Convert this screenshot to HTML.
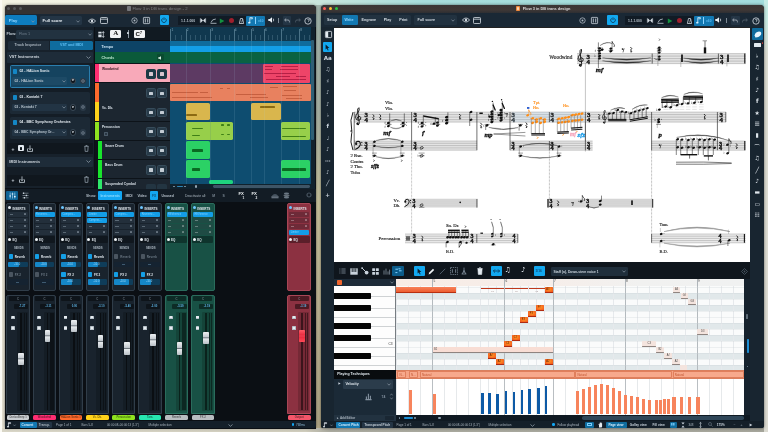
<!DOCTYPE html>
<html lang="en"><head><meta charset="utf-8"><title>Dorico - Play and Write windows</title>
<style>
html,body{margin:0;padding:0}
body{width:768px;height:432px;overflow:hidden;position:relative;font-family:"Liberation Sans",sans-serif;
background:#e9e6d8}
div{position:absolute;box-sizing:border-box}
.t{white-space:nowrap;line-height:1;font-weight:bold}
.s{white-space:nowrap;line-height:1;font-family:"Liberation Serif",serif}
svg{position:absolute;overflow:visible}
</style></head><body><div id="root" style="left:0;top:0;width:768px;height:432px;will-change:transform;opacity:.999;filter:blur(.45px)">
<div style="left:-8px;top:-8px;width:784px;height:448px;background:linear-gradient(90deg,#f4f3e4 0%,#f4f3e4 1%,#eef2e2 25%,#c9e6dc 42%,#a7dedc 55%,#a3dddd 99%,#a3dddd 100%);"></div>
<div style="left:-8px;top:12px;width:784px;height:428px;background:linear-gradient(180deg,rgba(233,230,216,0) 0%,#e6e3d4 8%,#e3dfd0 100%);"></div>
<div style="left:315px;top:5px;width:7px;height:427px;background:linear-gradient(180deg,#a2b6ad 0%,#a9b3a6 25%,#c8c29c 47%,#bdb494 70%,#b0a686 100%);"></div>
<div style="left:-8px;top:428.2px;width:784px;height:12px;background:linear-gradient(90deg,#d9d6c7 0%,#cfccbc 40%,#a9a99e 43%,#a5a59b 100%);"></div>
<div style="left:764px;top:-8px;width:12px;height:448px;background:linear-gradient(180deg,#c2ebe6 0%,#c8ebe4 6%,#dcdcd2 14%,#dcdbd2 100%);"></div>
<div style="left:-8px;top:-8px;width:10px;height:448px;background:#fbfaf4;"></div>
<div style="left:4.5px;top:4.7px;width:311px;height:423.5px;background:#0c1117;border-radius:4px 4px 2px 2px;box-shadow:0 0 3px rgba(0,0,0,.55);overflow:hidden"></div>
<div style="left:4.5px;top:4.7px;width:311px;height:9.1px;background:#343233;border-radius:4px 4px 0 0"></div>
<div style="left:6.8px;top:7.2px;width:3.2px;height:3.2px;background:#56575b;border-radius:50%"></div>
<div style="left:13px;top:7.2px;width:3.2px;height:3.2px;background:#56575b;border-radius:50%"></div>
<div style="left:18.8px;top:7.2px;width:3.2px;height:3.2px;background:#56575b;border-radius:50%"></div>
<div style="left:126.6px;top:6.4px;width:4.2px;height:4.6px;background:#77787c;border-radius:.8px"></div>
<div class="t" style="left:132.4px;top:6.6px;font-size:4.3px;color:#7d7e82;font-weight:normal">Flow 3 in DB trans design - 2</div>
<div style="left:4.5px;top:13.8px;width:311px;height:13.4px;background:#1a2835;"></div>
<div style="left:5.4px;top:15.4px;width:32px;height:9.8px;background:#0d7dc0;border-radius:1.5px"></div>
<div class="t" style="left:8.8px;top:19.2px;font-size:4.2px;color:#8fd4ff;">Play</div>
<svg style="left:31px;top:19.5px" width="4" height="3" viewBox="0 0 4 3"><path d="M.5 .6 L2 2.2 L3.5 .6" fill="none" stroke="#8d9aa6" stroke-width=".7"/></svg>
<div style="left:40px;top:16px;width:41.8px;height:9.2px;background:#243545;border-radius:1.5px"></div>
<div class="t" style="left:42.6px;top:19.2px;font-size:4.2px;color:#e6edf3;">Full score</div>
<svg style="left:76px;top:19.5px" width="4" height="3" viewBox="0 0 4 3"><path d="M.5 .6 L2 2.2 L3.5 .6" fill="none" stroke="#8d9aa6" stroke-width=".7"/></svg>
<svg style="left:87.5px;top:17.5px" width="8" height="6" viewBox="0 0 8 6"><path d="M.4 3 Q4 -1 7.6 3 Q4 7 .4 3Z" fill="none" stroke="#d5dde4" stroke-width=".8"/><circle cx="4" cy="3" r="1.2" fill="#d5dde4"/></svg>
<svg style="left:99.5px;top:17.3px" width="8" height="7" viewBox="0 0 8 7"><rect x=".5" y=".5" width="7" height="6" rx=".8" fill="none" stroke="#d5dde4" stroke-width=".8"/><path d="M.5 2.2H7.5" stroke="#d5dde4" stroke-width=".8"/></svg>
<svg style="left:130.5px;top:17px" width="7" height="7" viewBox="0 0 7 7"><circle cx="3.5" cy="3.5" r="2.7" fill="none" stroke="#aeb8c1" stroke-width=".8"/><circle cx="3.5" cy="3.5" r="1" fill="#aeb8c1"/></svg>
<svg style="left:142.5px;top:17px" width="7" height="7" viewBox="0 0 7 7"><rect x=".4" y=".4" width="6.2" height="6.2" rx=".6" fill="none" stroke="#c5ced6" stroke-width=".8"/><path d="M2.3 1.5V5.5M4.7 1.5V5.5" stroke="#c5ced6" stroke-width=".9"/></svg>
<div style="left:159.7px;top:15.2px;width:9.4px;height:10.2px;background:#12a8f0;border-radius:1px"></div>
<svg style="left:161.4px;top:17.2px" width="6" height="6" viewBox="0 0 6 6"><path d="M1.6 1.4 A2.3 2.3 0 1 0 4.4 1.4" fill="none" stroke="#0a3550" stroke-width=".8"/><path d="M3 .4V3" stroke="#0a3550" stroke-width=".8"/></svg>
<div style="left:178px;top:16px;width:68px;height:9.2px;background:#111b25;"></div>
<div class="t" style="left:181px;top:19.6px;font-size:3.4px;color:#b9c3cc;">1.1.1.000</div>
<svg style="left:199.5px;top:17.8px" width="6" height="5" viewBox="0 0 6 5"><path d="M.4 .3V4.7M5.6 .3V4.7" stroke="#d5dde4" stroke-width=".8"/><path d="M1 .6L3 2.5L1 4.4ZM5 .6L3 2.5L5 4.4Z" fill="#d5dde4"/></svg>
<svg style="left:209.5px;top:17.6px" width="7" height="6" viewBox="0 0 7 6"><path d="M.5 5.3H6.5M1 4.5 Q2 1 5.8 1" fill="none" stroke="#aeb8c1" stroke-width=".9"/></svg>
<svg style="left:218.5px;top:17.5px" width="6" height="6" viewBox="0 0 6 6"><path d="M.8 .4L5.4 3L.8 5.6Z" fill="#13913f"/></svg>
<div style="left:228.6px;top:17.6px;width:5.6px;height:5.6px;background:#9f1f2c;border-radius:50%"></div>
<svg style="left:238.5px;top:17.6px" width="5" height="6" viewBox="0 0 5 6"><path d="M1.5 .5H3.5L4.6 5.5H.4Z" fill="none" stroke="#d5dde4" stroke-width=".8"/><path d="M2.5 4.5L3.8 1.2" stroke="#d5dde4" stroke-width=".6"/></svg>
<div style="left:246px;top:15.6px;width:19.4px;height:10px;background:#1278b2;border-radius:1px"></div>
<svg style="left:248px;top:17px" width="5" height="7" viewBox="0 0 5 7"><path d="M1.8 5.6V.6H4.4V1.8H2.4" fill="none" stroke="#d9f0ff" stroke-width=".8"/><ellipse cx="1.3" cy="5.7" rx="1.2" ry=".9" fill="#d9f0ff"/></svg>
<div style="left:255.2px;top:17px;width:0.8px;height:7px;background:#8fd4ff;"></div>
<div class="t" style="left:258px;top:20px;font-size:3.2px;color:#58b6ee;">=60</div>
<svg style="left:267.5px;top:17.4px" width="8" height="6" viewBox="0 0 8 6"><path d="M.3 2H1.8L4 .3V5.7L1.8 4H.3Z" fill="#e8eef3"/><path d="M5.2 1.6Q6.3 3 5.2 4.4" fill="none" stroke="#e8eef3" stroke-width=".7"/></svg>
<div style="left:277.6px;top:17.6px;width:0.8px;height:5.6px;background:#7e8a95;"></div>
<div style="left:282.5px;top:16.4px;width:8.4px;height:8.4px;background:#243545;border-radius:1px"></div>
<svg style="left:284px;top:18.2px" width="6" height="5" viewBox="0 0 6 5"><path d="M2.2 .5L.6 2L2.2 3.5M.8 2H4Q5.4 2 5.4 3.4V4.4" fill="none" stroke="#aeb8c1" stroke-width=".8"/></svg>
<svg style="left:295px;top:18.2px" width="6" height="5" viewBox="0 0 6 5"><path d="M3.8 .5L5.4 2L3.8 3.5M5.2 2H2Q.6 2 .6 3.4V4.4" fill="none" stroke="#55626e" stroke-width=".8"/></svg>
<svg style="left:304.3px;top:16.8px" width="8" height="8" viewBox="0 0 8 8"><circle cx="4" cy="4" r="3.2" fill="none" stroke="#d5dde4" stroke-width=".8"/></svg>
<div class="t" style="left:307.2px;top:19.2px;font-size:4.4px;color:#d5dde4;">?</div>
<div style="left:4.5px;top:27.2px;width:90px;height:13.2px;background:#17212b;"></div>
<div class="t" style="left:6.5px;top:33px;font-size:3.8px;color:#c2ccd5;">Flow:</div>
<div style="left:16.2px;top:29.7px;width:76.8px;height:9px;background:#223240;border-radius:1.5px"></div>
<div class="t" style="left:19px;top:33px;font-size:3.8px;color:#6d7c8a;font-weight:normal">Flow 1</div>
<svg style="left:87.5px;top:33px" width="4" height="3" viewBox="0 0 4 3"><path d="M.5 .6 L2 2.2 L3.5 .6" fill="none" stroke="#8d9aa6" stroke-width=".7"/></svg>
<div style="left:94.5px;top:27.2px;width:75.5px;height:13.2px;background:#111a22;"></div>
<svg style="left:98px;top:30.6px" width="7" height="7" viewBox="0 0 7 7"><path d="M.3 .8H3.6V2.6H.3ZM.3 3.6H3.6V6.2H.3Z" fill="#d5dde4"/><path d="M5.3 .5V6.5M4.3 2L5.3 .6L6.3 2M4.3 5L5.3 6.4L6.3 5" fill="none" stroke="#d5dde4" stroke-width=".7"/></svg>
<div style="left:110px;top:29.5px;width:11.3px;height:8.6px;background:#f1f3f5;border-radius:1.2px"></div>
<div class="s" style="left:113.3px;top:30.3px;font-size:7px;font-weight:bold;color:#111">A</div>
<div style="left:127.6px;top:30px;width:1px;height:7.6px;background:#8d99a4;"></div>
<div style="left:126.8px;top:32px;width:2.6px;height:2.4px;background:#c7d0d8;border-radius:.6px"></div>
<div style="left:134px;top:29.5px;width:11.3px;height:8.6px;background:#f1f3f5;border-radius:1.2px"></div>
<div class="t" style="left:135.6px;top:30.8px;font-size:6.2px;color:#111">C<span style="font-size:3.6px;vertical-align:2px">7</span></div>
<div style="left:170px;top:27.2px;width:140.5px;height:13.4px;background:#10384f;"></div>
<div style="left:170.3px;top:28.5px;width:0.6px;height:12px;background:#4a7287;"></div>
<div class="t" style="left:171.5px;top:29.4px;font-size:3.2px;color:#86a7b8;font-weight:normal">1</div>
<div style="left:185.6px;top:28.5px;width:0.6px;height:12px;background:#4a7287;"></div>
<div class="t" style="left:186.8px;top:29.4px;font-size:3.2px;color:#86a7b8;font-weight:normal">2</div>
<div style="left:210px;top:28.5px;width:0.6px;height:12px;background:#4a7287;"></div>
<div class="t" style="left:211.2px;top:29.4px;font-size:3.2px;color:#86a7b8;font-weight:normal">3</div>
<div style="left:233.5px;top:28.5px;width:0.6px;height:12px;background:#4a7287;"></div>
<div class="t" style="left:234.7px;top:29.4px;font-size:3.2px;color:#86a7b8;font-weight:normal">4</div>
<div style="left:251px;top:28.5px;width:0.6px;height:12px;background:#4a7287;"></div>
<div class="t" style="left:252.2px;top:29.4px;font-size:3.2px;color:#86a7b8;font-weight:normal">5</div>
<div style="left:263.8px;top:28.5px;width:0.6px;height:12px;background:#4a7287;"></div>
<div class="t" style="left:265px;top:29.4px;font-size:3.2px;color:#86a7b8;font-weight:normal">6</div>
<div style="left:281px;top:28.5px;width:0.6px;height:12px;background:#4a7287;"></div>
<div class="t" style="left:282.2px;top:29.4px;font-size:3.2px;color:#86a7b8;font-weight:normal">7</div>
<div style="left:299px;top:28.5px;width:0.6px;height:12px;background:#4a7287;"></div>
<div class="t" style="left:300.2px;top:29.4px;font-size:3.2px;color:#86a7b8;font-weight:normal">8</div>
<div style="left:175.4px;top:34.5px;width:0.5px;height:5.5px;background:#2f566c;"></div>
<div style="left:180.5px;top:34.5px;width:0.5px;height:5.5px;background:#2f566c;"></div>
<div style="left:190.48px;top:34.5px;width:0.5px;height:5.5px;background:#2f566c;"></div>
<div style="left:195.36px;top:34.5px;width:0.5px;height:5.5px;background:#2f566c;"></div>
<div style="left:200.24px;top:34.5px;width:0.5px;height:5.5px;background:#2f566c;"></div>
<div style="left:205.12px;top:34.5px;width:0.5px;height:5.5px;background:#2f566c;"></div>
<div style="left:214.7px;top:34.5px;width:0.5px;height:5.5px;background:#2f566c;"></div>
<div style="left:219.4px;top:34.5px;width:0.5px;height:5.5px;background:#2f566c;"></div>
<div style="left:224.1px;top:34.5px;width:0.5px;height:5.5px;background:#2f566c;"></div>
<div style="left:228.8px;top:34.5px;width:0.5px;height:5.5px;background:#2f566c;"></div>
<div style="left:237.875px;top:34.5px;width:0.5px;height:5.5px;background:#2f566c;"></div>
<div style="left:242.25px;top:34.5px;width:0.5px;height:5.5px;background:#2f566c;"></div>
<div style="left:246.625px;top:34.5px;width:0.5px;height:5.5px;background:#2f566c;"></div>
<div style="left:255.267px;top:34.5px;width:0.5px;height:5.5px;background:#2f566c;"></div>
<div style="left:259.533px;top:34.5px;width:0.5px;height:5.5px;background:#2f566c;"></div>
<div style="left:268.1px;top:34.5px;width:0.5px;height:5.5px;background:#2f566c;"></div>
<div style="left:272.4px;top:34.5px;width:0.5px;height:5.5px;background:#2f566c;"></div>
<div style="left:276.7px;top:34.5px;width:0.5px;height:5.5px;background:#2f566c;"></div>
<div style="left:285.5px;top:34.5px;width:0.5px;height:5.5px;background:#2f566c;"></div>
<div style="left:290px;top:34.5px;width:0.5px;height:5.5px;background:#2f566c;"></div>
<div style="left:294.5px;top:34.5px;width:0.5px;height:5.5px;background:#2f566c;"></div>
<div style="left:304.1px;top:34.5px;width:0.5px;height:5.5px;background:#2f566c;"></div>
<div style="left:309.2px;top:34.5px;width:0.5px;height:5.5px;background:#2f566c;"></div>
<div style="left:4.5px;top:40.4px;width:89px;height:148px;background:#17212b;"></div>
<div style="left:93.5px;top:27.2px;width:1.6px;height:161.5px;background:#0b1016;"></div>
<div style="left:7.6px;top:41px;width:41.2px;height:9px;background:#1f2d3a;border-radius:1.5px 0 0 1.5px"></div>
<div class="t" style="left:14.6px;top:44.4px;font-size:3.6px;color:#aab5bf;">Track Inspector</div>
<div style="left:49.6px;top:41px;width:43.6px;height:9px;background:#0f6c9e;border-radius:0 1.5px 1.5px 0"></div>
<div class="t" style="left:60px;top:44.4px;font-size:3.6px;color:#5fc0f5;">VST and MIDI</div>
<div style="left:7px;top:51.8px;width:86.4px;height:10.8px;background:#1e2c39;border-radius:1px"></div>
<div class="t" style="left:9.2px;top:56px;font-size:3.8px;color:#d2dae1;">VST Instruments</div>
<svg style="left:85.6px;top:55.6px" width="5" height="3" viewBox="0 0 5 3"><path d="M.5 .5 L2.5 2.4 L4.5 .5" fill="none" stroke="#8d9aa6" stroke-width=".8"/></svg>
<div style="left:7px;top:62.6px;width:86.4px;height:80px;background:#141d26;"></div>
<div style="left:9.6px;top:65.4px;width:80.6px;height:22.4px;background:#15435f;border:.8px solid #2a7eae;border-radius:1.5px"></div>
<div style="left:12.8px;top:68.8px;width:4.2px;height:4.8px;background:#1487c6;border-radius:.8px"></div>
<div class="t" style="left:19.4px;top:69.8px;font-size:3.5px;color:#e3eaf0;">02 - HALion Sonic</div>
<div style="left:12px;top:77.4px;width:54.8px;height:7.4px;background:#1d4a66;border-radius:1.2px"></div>
<div class="t" style="left:14.4px;top:79.6px;font-size:3.4px;color:#b9c5cf;">02 - HALion Sonic</div>
<svg style="left:61.5px;top:79.80000000000001px" width="4" height="3" viewBox="0 0 4 3"><path d="M.5 .5 L2 2.1 L3.5 .5" fill="none" stroke="#8d9aa6" stroke-width=".7"/></svg>
<div style="left:69.8px;top:77.8px;width:6.4px;height:6.4px;background:#0e151c;border-radius:50%;border:.6px solid #3b4a58"></div>
<div class="t" style="left:71.9px;top:79.2px;font-size:3.8px;color:#e3eaf0;">e</div>
<div style="left:79.8px;top:77.8px;width:6.4px;height:6.4px;background:#2a3947;border-radius:50%"></div>
<svg style="left:81px;top:79.0px" width="4" height="4" viewBox="0 0 4 4"><circle cx="2" cy="2" r="1.3" fill="none" stroke="#8492a0" stroke-width=".7"/></svg>
<div style="left:9.6px;top:91.8px;width:80.6px;height:22.4px;background:#1c2935;border-radius:1.5px"></div>
<div style="left:12.8px;top:95.2px;width:4.2px;height:4.8px;background:#1487c6;border-radius:.8px"></div>
<div class="t" style="left:19.4px;top:96.2px;font-size:3.5px;color:#e3eaf0;">03 - Kontakt 7</div>
<div style="left:12px;top:103.8px;width:54.8px;height:7.4px;background:#223444;border-radius:1.2px"></div>
<div class="t" style="left:14.4px;top:106px;font-size:3.4px;color:#b9c5cf;">03 - Kontakt 7</div>
<svg style="left:61.5px;top:106.2px" width="4" height="3" viewBox="0 0 4 3"><path d="M.5 .5 L2 2.1 L3.5 .5" fill="none" stroke="#8d9aa6" stroke-width=".7"/></svg>
<div style="left:69.8px;top:104.2px;width:6.4px;height:6.4px;background:#0e151c;border-radius:50%;border:.6px solid #3b4a58"></div>
<div class="t" style="left:71.9px;top:105.6px;font-size:3.8px;color:#e3eaf0;">e</div>
<div style="left:79.8px;top:104.2px;width:6.4px;height:6.4px;background:#2a3947;border-radius:50%"></div>
<svg style="left:81px;top:105.39999999999999px" width="4" height="4" viewBox="0 0 4 4"><circle cx="2" cy="2" r="1.3" fill="none" stroke="#8492a0" stroke-width=".7"/></svg>
<div style="left:9.6px;top:117px;width:80.6px;height:22.4px;background:#1c2935;border-radius:1.5px"></div>
<div style="left:12.8px;top:120.4px;width:4.2px;height:4.8px;background:#1487c6;border-radius:.8px"></div>
<div class="t" style="left:19.4px;top:121.4px;font-size:3.5px;color:#e3eaf0;">04 - BBC Symphony Orchestra</div>
<div style="left:12px;top:129px;width:54.8px;height:7.4px;background:#223444;border-radius:1.2px"></div>
<div class="t" style="left:14.4px;top:131.2px;font-size:3.4px;color:#b9c5cf;">04 - BBC Symphony Or...</div>
<svg style="left:61.5px;top:131.4px" width="4" height="3" viewBox="0 0 4 3"><path d="M.5 .5 L2 2.1 L3.5 .5" fill="none" stroke="#8d9aa6" stroke-width=".7"/></svg>
<div style="left:69.8px;top:129.4px;width:6.4px;height:6.4px;background:#0e151c;border-radius:50%;border:.6px solid #3b4a58"></div>
<div class="t" style="left:71.9px;top:130.8px;font-size:3.8px;color:#e3eaf0;">e</div>
<div style="left:79.8px;top:129.4px;width:6.4px;height:6.4px;background:#2a3947;border-radius:50%"></div>
<svg style="left:81px;top:130.6px" width="4" height="4" viewBox="0 0 4 4"><circle cx="2" cy="2" r="1.3" fill="none" stroke="#8492a0" stroke-width=".7"/></svg>
<div style="left:7px;top:142.6px;width:86.4px;height:11.4px;background:#10171e;"></div>
<div class="t" style="left:11.4px;top:147px;font-size:5px;color:#c7d0d8;">+</div>
<div style="left:18.2px;top:145.4px;width:5.6px;height:5.6px;background:#e3eaf0;border-radius:1px"></div>
<div style="left:19.6px;top:146.8px;width:2.8px;height:2.8px;background:#10171e;border-radius:.5px"></div>
<svg style="left:26.6px;top:145px" width="6" height="7" viewBox="0 0 6 7"><path d="M.5 3.5V6.4H5.5V3.5M3 .4V4.6M1.6 3.2L3 4.7L4.4 3.2" fill="none" stroke="#c7d0d8" stroke-width=".8"/></svg>
<svg style="left:84px;top:145px" width="5" height="7" viewBox="0 0 5 7"><path d="M.3 1.4H4.7M1.6 .5H3.4M.9 1.6L1.2 6.4H3.8L4.1 1.6" fill="none" stroke="#8d99a4" stroke-width=".8"/></svg>
<div style="left:7px;top:156.6px;width:86.4px;height:10.6px;background:#1e2c39;border-radius:1px"></div>
<div class="t" style="left:9.2px;top:160.8px;font-size:3.8px;color:#d2dae1;">MIDI Instruments</div>
<svg style="left:85.6px;top:160.4px" width="5" height="3" viewBox="0 0 5 3"><path d="M.5 .5 L2.5 2.4 L4.5 .5" fill="none" stroke="#8d9aa6" stroke-width=".8"/></svg>
<div style="left:7px;top:167.2px;width:86.4px;height:8px;background:#141d26;"></div>
<div style="left:7px;top:174.6px;width:86.4px;height:11px;background:#10171e;"></div>
<div class="t" style="left:11.4px;top:178.2px;font-size:5px;color:#c7d0d8;">+</div>
<svg style="left:18.6px;top:176.4px" width="6" height="7" viewBox="0 0 6 7"><path d="M.5 3.5V6.4H5.5V3.5M3 .4V4.6M1.6 3.2L3 4.7L4.4 3.2" fill="none" stroke="#c7d0d8" stroke-width=".8"/></svg>
<svg style="left:84px;top:176.4px" width="5" height="7" viewBox="0 0 5 7"><path d="M.3 1.4H4.7M1.6 .5H3.4M.9 1.6L1.2 6.4H3.8L4.1 1.6" fill="none" stroke="#8d99a4" stroke-width=".8"/></svg>
<div style="left:95.1px;top:40.6px;width:75px;height:148px;background:#0d1319;"></div>
<div style="left:170px;top:40.6px;width:140.5px;height:144px;background:#0e4d70;"></div>
<div style="left:310.5px;top:27.2px;width:4.6px;height:161.5px;background:#12222d;"></div>
<div style="left:311.4px;top:40px;width:2.2px;height:100px;background:#2f5f75;border-radius:1px"></div>
<div style="left:95.1px;top:41px;width:75px;height:11px;background:#0d4366;"></div>
<div class="t" style="left:101.6px;top:46px;font-size:3.6px;color:#cfe6f5;">Tempo</div>
<div style="left:170px;top:41px;width:140.5px;height:11.2px;background:#0f6c9c;"></div>
<div style="left:170px;top:46.2px;width:140.5px;height:5.8px;background:#139ee6;"></div>
<div style="left:95.1px;top:52.4px;width:75px;height:11px;background:#0b5a3a;"></div>
<div class="t" style="left:101.6px;top:56.8px;font-size:3.6px;color:#bfe8d2;">Chords</div>
<div style="left:156.6px;top:54.4px;width:7px;height:7px;background:#0a4a30;border-radius:1px"></div>
<svg style="left:158px;top:56px" width="5" height="4" viewBox="0 0 5 4"><path d="M.3 1.3H1.3L3 .2V3.8L1.3 2.7H.3Z" fill="#d9efe4"/></svg>
<div style="left:170px;top:52.4px;width:140.5px;height:11px;background:#0a6242;"></div>
<div style="left:95.1px;top:64px;width:75px;height:18.4px;background:#f8a9b9;"></div>
<div style="left:95.1px;top:64px;width:3.7px;height:18.4px;background:#ff2e72;"></div>
<div class="t" style="left:101.9px;top:68.2px;font-size:3.3px;color:#30141c;">Woodwind</div>
<div style="left:146px;top:69.2px;width:9.6px;height:9.8px;background:#1d3a45;border-radius:1.6px;border:.5px solid #1d3a45"></div>
<div style="left:149px;top:72.4px;width:3.6px;height:3.2px;background:#d9c7cf;border-radius:.6px"></div>
<div style="left:157.2px;top:69.2px;width:9.6px;height:9.8px;background:#1d3a45;border-radius:1.6px;border:.5px solid #1d3a45"></div>
<div style="left:160.2px;top:72.4px;width:3.6px;height:3.2px;background:#d9c7cf;border-radius:.6px"></div>
<div style="left:95.1px;top:83.2px;width:75px;height:18.4px;background:#1c2630;"></div>
<div style="left:95.1px;top:83.2px;width:3.7px;height:18.4px;background:#ff6a2c;"></div>
<div style="left:146px;top:88.4px;width:9.6px;height:9.8px;background:#283b49;border-radius:1.6px;border:.5px solid #374c5b"></div>
<div style="left:149px;top:91.6px;width:3.6px;height:3.2px;background:#c3ccd4;border-radius:.6px"></div>
<div style="left:157.2px;top:88.4px;width:9.6px;height:9.8px;background:#283b49;border-radius:1.6px;border:.5px solid #374c5b"></div>
<div style="left:160.2px;top:91.6px;width:3.6px;height:3.2px;background:#c3ccd4;border-radius:.6px"></div>
<div style="left:95.1px;top:102.4px;width:75px;height:18.4px;background:#1c2630;"></div>
<div style="left:95.1px;top:102.4px;width:3.7px;height:18.4px;background:#ffd21a;"></div>
<div class="t" style="left:101.9px;top:106.6px;font-size:3.3px;color:#dbe3ea;">Vc. Db.</div>
<div style="left:146px;top:107.6px;width:9.6px;height:9.8px;background:#283b49;border-radius:1.6px;border:.5px solid #374c5b"></div>
<div style="left:149px;top:110.8px;width:3.6px;height:3.2px;background:#c3ccd4;border-radius:.6px"></div>
<div style="left:157.2px;top:107.6px;width:9.6px;height:9.8px;background:#283b49;border-radius:1.6px;border:.5px solid #374c5b"></div>
<div style="left:160.2px;top:110.8px;width:3.6px;height:3.2px;background:#c3ccd4;border-radius:.6px"></div>
<div style="left:95.1px;top:121.6px;width:75px;height:18.4px;background:#1c2630;"></div>
<div style="left:95.1px;top:121.6px;width:3.7px;height:18.4px;background:#8fe21f;"></div>
<div class="t" style="left:101.9px;top:125.8px;font-size:3.3px;color:#dbe3ea;">Percussion</div>
<div style="left:103.6px;top:132px;width:4.4px;height:4.4px;background:#2a3744;border-radius:.6px;border:.5px solid #4a5a68"></div>
<div style="left:146px;top:126.8px;width:9.6px;height:9.8px;background:#283b49;border-radius:1.6px;border:.5px solid #374c5b"></div>
<div style="left:149px;top:130px;width:3.6px;height:3.2px;background:#c3ccd4;border-radius:.6px"></div>
<div style="left:157.2px;top:126.8px;width:9.6px;height:9.8px;background:#283b49;border-radius:1.6px;border:.5px solid #374c5b"></div>
<div style="left:160.2px;top:130px;width:3.6px;height:3.2px;background:#c3ccd4;border-radius:.6px"></div>
<div style="left:98.3px;top:140.8px;width:71.8px;height:18.4px;background:#1c2630;"></div>
<div style="left:98.3px;top:140.8px;width:3.7px;height:18.4px;background:#18e52c;"></div>
<div class="t" style="left:105.1px;top:145px;font-size:3.3px;color:#dbe3ea;">Snare Drum</div>
<div style="left:146px;top:146px;width:9.6px;height:9.8px;background:#283b49;border-radius:1.6px;border:.5px solid #374c5b"></div>
<div style="left:149px;top:149.2px;width:3.6px;height:3.2px;background:#c3ccd4;border-radius:.6px"></div>
<div style="left:157.2px;top:146px;width:9.6px;height:9.8px;background:#283b49;border-radius:1.6px;border:.5px solid #374c5b"></div>
<div style="left:160.2px;top:149.2px;width:3.6px;height:3.2px;background:#c3ccd4;border-radius:.6px"></div>
<div style="left:98.3px;top:160px;width:71.8px;height:18.4px;background:#1c2630;"></div>
<div style="left:98.3px;top:160px;width:3.7px;height:18.4px;background:#18e52c;"></div>
<div class="t" style="left:105.1px;top:164.2px;font-size:3.3px;color:#dbe3ea;">Bass Drum</div>
<div style="left:146px;top:165.2px;width:9.6px;height:9.8px;background:#283b49;border-radius:1.6px;border:.5px solid #374c5b"></div>
<div style="left:149px;top:168.4px;width:3.6px;height:3.2px;background:#c3ccd4;border-radius:.6px"></div>
<div style="left:157.2px;top:165.2px;width:9.6px;height:9.8px;background:#283b49;border-radius:1.6px;border:.5px solid #374c5b"></div>
<div style="left:160.2px;top:168.4px;width:3.6px;height:3.2px;background:#c3ccd4;border-radius:.6px"></div>
<div style="left:98.3px;top:179.2px;width:71.8px;height:9.4px;background:#1c2630;"></div>
<div style="left:98.3px;top:179.2px;width:3.7px;height:9.4px;background:#2ee86a;"></div>
<div class="t" style="left:105.1px;top:183.4px;font-size:3.3px;color:#dbe3ea;">Suspended Cymbal</div>
<div style="left:146px;top:184.4px;width:9.6px;height:4.4px;background:#233542;border-radius:1.6px 1.6px 0 0"></div>
<div style="left:157.2px;top:184.4px;width:9.6px;height:4.4px;background:#233542;border-radius:1.6px 1.6px 0 0"></div>
<div style="left:170px;top:64px;width:93.4px;height:18.6px;background:#5d3a63;"></div>
<div style="left:263.4px;top:64px;width:47.1px;height:18.6px;background:#ee4468;border-radius:1px"></div>
<div style="left:170px;top:83.6px;width:140.5px;height:17.8px;background:#e8815f;border-radius:1px"></div>
<div style="left:265px;top:66.4px;width:8px;height:0.9px;background:#b51f45;"></div>
<div style="left:281px;top:66.2px;width:17px;height:0.9px;background:#b51f45;"></div>
<div style="left:265px;top:69.4px;width:7px;height:0.9px;background:#b51f45;"></div>
<div style="left:280px;top:69.2px;width:18px;height:0.9px;background:#b51f45;"></div>
<div style="left:264px;top:73.2px;width:32px;height:0.9px;background:#b51f45;"></div>
<div style="left:276px;top:76.4px;width:14px;height:0.9px;background:#b51f45;"></div>
<div style="left:296px;top:76px;width:10px;height:0.9px;background:#b51f45;"></div>
<div style="left:266px;top:79.4px;width:40px;height:0.9px;background:#b51f45;"></div>
<div style="left:172px;top:92.4px;width:26px;height:0.7px;background:#c65f3f;"></div>
<div style="left:200px;top:91.6px;width:8px;height:0.7px;background:#c65f3f;"></div>
<div style="left:220px;top:88.2px;width:3px;height:0.7px;background:#c65f3f;"></div>
<div style="left:227px;top:88.2px;width:3px;height:0.7px;background:#c65f3f;"></div>
<div style="left:236px;top:94.2px;width:30px;height:0.7px;background:#c65f3f;"></div>
<div style="left:250px;top:96.8px;width:18px;height:0.7px;background:#c65f3f;"></div>
<div style="left:270px;top:86.6px;width:8px;height:0.7px;background:#c65f3f;"></div>
<div style="left:283px;top:85.6px;width:14px;height:0.7px;background:#c65f3f;"></div>
<div style="left:284px;top:89.8px;width:12px;height:0.7px;background:#c65f3f;"></div>
<div style="left:282px;top:94.6px;width:20px;height:0.7px;background:#c65f3f;"></div>
<div style="left:172px;top:97.2px;width:40px;height:0.7px;background:#c65f3f;"></div>
<div style="left:286px;top:98px;width:16px;height:0.7px;background:#c65f3f;"></div>
<div style="left:185.6px;top:102.8px;width:24.2px;height:17.6px;background:#d9b64d;border-radius:1.6px"></div>
<div style="left:186px;top:114.4px;width:11px;height:1.2px;background:#8c6a12;border-radius:.4px"></div>
<div style="left:251.2px;top:102.8px;width:29.8px;height:17.6px;background:#d9b64d;border-radius:1.6px"></div>
<div style="left:260px;top:106.4px;width:15px;height:1.4px;background:#8c6a12;border-radius:.4px"></div>
<div style="left:185.6px;top:122px;width:47.6px;height:17.6px;background:#97cf4a;border-radius:1.6px"></div>
<div style="left:192px;top:127.6px;width:10.5px;height:1.3px;background:#3f7f16;border-radius:.4px"></div>
<div style="left:192px;top:134.8px;width:8px;height:1.3px;background:#3f7f16;border-radius:.4px"></div>
<div style="left:221px;top:124.4px;width:3px;height:1.3px;background:#3f7f16;border-radius:.4px"></div>
<div style="left:227px;top:124.4px;width:3px;height:1.3px;background:#3f7f16;border-radius:.4px"></div>
<div style="left:221px;top:133.8px;width:3px;height:1.3px;background:#3f7f16;border-radius:.4px"></div>
<div style="left:227px;top:133.8px;width:3px;height:1.3px;background:#3f7f16;border-radius:.4px"></div>
<div style="left:209.6px;top:122px;width:0.6px;height:17.6px;background:#86bd3f;"></div>
<div style="left:281.2px;top:122px;width:29.3px;height:17.6px;background:#97cf4a;border-radius:1.6px"></div>
<div style="left:282px;top:127.6px;width:24px;height:1.4px;background:#3f7f16;border-radius:.4px"></div>
<div style="left:282px;top:135.8px;width:24px;height:1.4px;background:#3f7f16;border-radius:.4px"></div>
<div style="left:185.6px;top:141.2px;width:24.2px;height:17.6px;background:#2bd165;border-radius:1.6px"></div>
<div style="left:192px;top:149.2px;width:11px;height:3px;background:#0a6a22;border-radius:.4px"></div>
<div style="left:185.6px;top:160.4px;width:24.2px;height:17.6px;background:#2bd165;border-radius:1.6px"></div>
<div style="left:192px;top:168px;width:8px;height:3px;background:#0a6a22;border-radius:.4px"></div>
<div style="left:281.2px;top:160.4px;width:29.3px;height:17.6px;background:#2bd165;border-radius:1.6px"></div>
<div style="left:281.6px;top:168px;width:24px;height:3px;background:#0a6a22;border-radius:.4px"></div>
<div style="left:209.4px;top:179.6px;width:23.8px;height:4.4px;background:#1ed37e;border-radius:1.6px"></div>
<div style="left:185.6px;top:41px;width:0.6px;height:143px;background:rgba(170,210,230,.12);"></div>
<div style="left:210px;top:41px;width:0.6px;height:143px;background:rgba(170,210,230,.12);"></div>
<div style="left:233.5px;top:41px;width:0.6px;height:143px;background:rgba(170,210,230,.12);"></div>
<div style="left:251px;top:41px;width:0.6px;height:143px;background:rgba(170,210,230,.12);"></div>
<div style="left:263.8px;top:41px;width:0.6px;height:143px;background:rgba(170,210,230,.12);"></div>
<div style="left:281px;top:41px;width:0.6px;height:143px;background:rgba(170,210,230,.12);"></div>
<div style="left:299px;top:41px;width:0.6px;height:143px;background:rgba(170,210,230,.12);"></div>
<div style="left:170.1px;top:184.2px;width:140.5px;height:4.6px;background:#10222d;"></div>
<div style="left:213px;top:185.2px;width:97px;height:2.8px;background:#3e5566;border-radius:1.4px"></div>
<div style="left:173px;top:185.6px;width:1.8px;height:1.8px;background:#7f93a2;border-radius:50%"></div>
<div style="left:177px;top:185.8px;width:6px;height:1.6px;background:#2d86b8;border-radius:.8px"></div>
<div style="left:184px;top:185.6px;width:1.8px;height:1.8px;background:#7f93a2;border-radius:50%"></div>
<div style="left:195px;top:185.4px;width:2.2px;height:2.2px;background:#93a5b2;border-radius:50%"></div>
<div style="left:4.5px;top:188.6px;width:311px;height:240px;background:#0b0f14;"></div>
<div style="left:4.5px;top:188.8px;width:311px;height:13.4px;background:#131c25;"></div>
<div style="left:6.4px;top:191px;width:11.6px;height:9.4px;background:#0f6496;border-radius:1px"></div>
<svg style="left:9.2px;top:192.4px" width="7" height="7" viewBox="0 0 7 7"><path d="M1.2 .5V6.5M3.5 .5V6.5M5.8 .5V6.5" stroke="#bfe6ff" stroke-width=".6"/><path d="M.4 4H2M2.7 2H4.3M5 4.6H6.6" stroke="#e9f6ff" stroke-width="1.2"/></svg>
<svg style="left:21.6px;top:192.4px" width="7" height="7" viewBox="0 0 7 7"><path d="M.5 1.2H6.5M.5 3.5H6.5M.5 5.8H6.5" stroke="#9aa7b3" stroke-width=".6"/><path d="M1.6 .4V2M4.4 2.7V4.3M2.4 5V6.6" stroke="#c7d0d8" stroke-width="1.2"/></svg>
<div class="t" style="left:86px;top:194.8px;font-size:3.5px;color:#aab5bf;">Show:</div>
<div style="left:98px;top:191px;width:24.2px;height:9.2px;background:#13a6f2;border-radius:1px"></div>
<div class="t" style="left:100.4px;top:194.8px;font-size:3.4px;color:#8fdcff;">Instruments</div>
<div class="t" style="left:125.4px;top:194.8px;font-size:3.4px;color:#b6c1cb;">MIDI</div>
<div class="t" style="left:137.4px;top:194.8px;font-size:3.4px;color:#b6c1cb;">Video</div>
<div style="left:150px;top:191.2px;width:8.2px;height:8.8px;background:#13a6f2;border-radius:1px"></div>
<div class="t" style="left:152px;top:194.8px;font-size:3.2px;color:#0c4f78;">FX</div>
<div class="t" style="left:161.4px;top:194.8px;font-size:3.4px;color:#b6c1cb;">Unused</div>
<div class="t" style="left:185px;top:194.8px;font-size:3.4px;color:#aab5bf;font-weight:normal">Deactivate all:</div>
<div class="t" style="left:212.2px;top:194.8px;font-size:3.4px;color:#7b8894;">M</div>
<div class="t" style="left:222.4px;top:194.8px;font-size:3.4px;color:#7b8894;">S</div>
<div class="t" style="left:238.4px;top:192.4px;font-size:4.2px;color:#eef2f5;">FX</div>
<div class="t" style="left:242.4px;top:196.6px;font-size:3.2px;color:#eef2f5;">1</div>
<div class="t" style="left:251.4px;top:192.4px;font-size:4.2px;color:#eef2f5;">FX</div>
<div class="t" style="left:255.4px;top:196.6px;font-size:3.2px;color:#eef2f5;">2</div>
<svg style="left:270.5px;top:192.6px" width="8" height="6" viewBox="0 0 8 6"><path d="M.5 5.5V3.2Q4 -1.4 7.5 3.2V5.5Z" fill="#46535f"/><path d="M.5 4.2H7.5" stroke="#8d99a4" stroke-width=".6"/></svg>
<svg style="left:283px;top:192px" width="7" height="7" viewBox="0 0 7 7"><ellipse cx="3.5" cy="1.6" rx="2.6" ry="1.2" fill="#6b7884"/><ellipse cx="3.5" cy="5.2" rx="2.6" ry="1.2" fill="#6b7884"/><path d="M.6 3.4H6.4" stroke="#aab5bf" stroke-width=".6"/></svg>
<svg style="left:306.4px;top:192.4px" width="6" height="6" viewBox="0 0 6 6"><circle cx="3" cy="3" r="2" fill="none" stroke="#46535f" stroke-width="1.2"/></svg>
<div style="left:6.3px;top:203px;width:23.6px;height:88.4px;background:#19232d;border:.7px solid #303d49;border-radius:2px"></div>
<div style="left:8.2px;top:206.3px;width:3.1px;height:3.1px;background:#e8eef3;border-radius:50%"></div>
<div class="t" style="left:12.5px;top:207.6px;font-size:3px;color:#dfe6ec;">INSERTS</div>
<div style="left:8.1px;top:211.6px;width:20px;height:5px;background:#232f3b;border-radius:1px"></div>
<div style="left:9.7px;top:213.8px;width:3.4px;height:0.7px;background:#5a6874;"></div>
<div style="left:23.9px;top:213.2px;width:2.2px;height:2px;background:#6b7884;border-radius:.4px"></div>
<div style="left:8.1px;top:217.6px;width:20px;height:5px;background:#232f3b;border-radius:1px"></div>
<div style="left:9.7px;top:219.8px;width:3.4px;height:0.7px;background:#5a6874;"></div>
<div style="left:23.9px;top:219.2px;width:2.2px;height:2px;background:#6b7884;border-radius:.4px"></div>
<div style="left:8.1px;top:223.6px;width:20px;height:5px;background:#232f3b;border-radius:1px"></div>
<div style="left:9.7px;top:225.8px;width:3.4px;height:0.7px;background:#5a6874;"></div>
<div style="left:23.9px;top:225.2px;width:2.2px;height:2px;background:#6b7884;border-radius:.4px"></div>
<div style="left:8.1px;top:229.6px;width:20px;height:5px;background:#232f3b;border-radius:1px"></div>
<div style="left:9.7px;top:231.8px;width:3.4px;height:0.7px;background:#5a6874;"></div>
<div style="left:23.9px;top:231.2px;width:2.2px;height:2px;background:#6b7884;border-radius:.4px"></div>
<div style="left:7.5px;top:236.4px;width:21.2px;height:6.8px;background:#10171e;border-radius:1px"></div>
<div style="left:8.2px;top:238.2px;width:3.1px;height:3.1px;background:#f1f5f8;border-radius:50%"></div>
<div class="t" style="left:12.5px;top:239.2px;font-size:3px;color:#dfe6ec;">EQ</div>
<div class="t" style="left:13.9px;top:246.8px;font-size:2.8px;color:#aab5bf;">SENDS</div>
<div style="left:8.5px;top:254.4px;width:4.4px;height:4.6px;background:#149fe6;border-radius:.8px"></div>
<div class="t" style="left:14.7px;top:256.1px;font-size:3px;color:#e3eaf0;">Reverb</div>
<div style="left:8.3px;top:261.6px;width:19.6px;height:5.6px;background:#0f3d5a;border-radius:1px"></div>
<div style="left:8.3px;top:261.6px;width:10.78px;height:5.6px;background:#1587c8;border-radius:1px"></div>
<div class="t" style="left:14.3px;top:263.8px;font-size:2.6px;color:#9fdcff;font-weight:normal">-10.0</div>
<div style="left:8.5px;top:272px;width:4.4px;height:4.6px;background:#4a5560;border-radius:.8px"></div>
<div class="t" style="left:14.7px;top:273.7px;font-size:3px;color:#6b7884;">FX 2</div>
<div style="left:8.3px;top:279.2px;width:19.6px;height:5.6px;background:#152331;border-radius:1px"></div>
<div style="left:15.9px;top:281.8px;width:3.6px;height:0.6px;background:#3e5a70;"></div>
<div style="left:6.3px;top:294.8px;width:23.6px;height:119.4px;background:#19232d;border:.7px solid #303d49;border-radius:2px 2px 0 0"></div>
<div style="left:8.5px;top:296.4px;width:19.2px;height:4.8px;background:#0e141a;border-radius:1px"></div>
<div class="t" style="left:17.1px;top:297.8px;font-size:2.8px;color:#8d99a4;font-weight:normal">C</div>
<div style="left:13.9px;top:303.6px;width:14.4px;height:5.2px;background:#0e141a;border-radius:1px"></div>
<div class="t" style="left:18.9px;top:305.2px;font-size:2.8px;color:#5fb4e6;">-7.27</div>
<div style="left:10.8px;top:315.6px;width:3.8px;height:3.4px;background:#b9c3cb;border-radius:.6px"></div>
<div style="left:11.6px;top:316.3px;width:2.2px;height:1.8px;background:#e8edf1;border-radius:.3px"></div>
<div style="left:10.8px;top:326.2px;width:3.8px;height:3.4px;background:#b9c3cb;border-radius:.6px"></div>
<div style="left:11.6px;top:326.9px;width:2.2px;height:1.8px;background:#e8edf1;border-radius:.3px"></div>
<div style="left:17.1px;top:312.4px;width:11px;height:99px;background:rgba(0,0,0,.16);border-radius:1px"></div>
<div style="left:20.3px;top:313.4px;width:1.6px;height:97px;background:#0a0e12;"></div>
<div style="left:23.9px;top:313.4px;width:1.3px;height:97px;background:#0d1217;"></div>
<div style="left:25.9px;top:313.4px;width:1.3px;height:97px;background:#0d1217;"></div>
<div style="left:18.3px;top:352.6px;width:5.8px;height:12.8px;background:linear-gradient(180deg,#eef1f3,#c5cbd0 42%,#59626a 49%,#e6eaed 56%,#b9c0c6);border-radius:.8px"></div>
<div style="left:6.7px;top:414.6px;width:22.8px;height:5.8px;background:#c9cdd1;border-radius:1.6px"></div>
<div class="t" style="left:18.1px;top:416.8px;font-size:2.7px;color:rgba(0,0,0,.55);"><span style="display:inline-block;transform:translateX(-50%)">DoricoBeep 1</span></div>
<div style="left:32.7px;top:203px;width:23.6px;height:88.4px;background:#19232d;border:.7px solid #303d49;border-radius:2px"></div>
<div style="left:34.6px;top:206.3px;width:3.1px;height:3.1px;background:#6cc6ff;border-radius:50%"></div>
<div class="t" style="left:38.9px;top:207.6px;font-size:3px;color:#dfe6ec;">INSERTS</div>
<div style="left:34.5px;top:211.6px;width:20px;height:5px;background:#139de6;border-radius:1px"></div>
<div class="t" style="left:36.1px;top:213.6px;font-size:2.6px;color:#7fd0ff;font-weight:normal">Reverenc...</div>
<div style="left:34.5px;top:217.6px;width:20px;height:5px;background:#232f3b;border-radius:1px"></div>
<div style="left:36.1px;top:219.8px;width:3.4px;height:0.7px;background:#5a6874;"></div>
<div style="left:50.3px;top:219.2px;width:2.2px;height:2px;background:#6b7884;border-radius:.4px"></div>
<div style="left:34.5px;top:223.6px;width:20px;height:5px;background:#232f3b;border-radius:1px"></div>
<div style="left:36.1px;top:225.8px;width:3.4px;height:0.7px;background:#5a6874;"></div>
<div style="left:50.3px;top:225.2px;width:2.2px;height:2px;background:#6b7884;border-radius:.4px"></div>
<div style="left:34.5px;top:229.6px;width:20px;height:5px;background:#232f3b;border-radius:1px"></div>
<div style="left:36.1px;top:231.8px;width:3.4px;height:0.7px;background:#5a6874;"></div>
<div style="left:50.3px;top:231.2px;width:2.2px;height:2px;background:#6b7884;border-radius:.4px"></div>
<div style="left:33.9px;top:236.4px;width:21.2px;height:6.8px;background:#10171e;border-radius:1px"></div>
<div style="left:34.6px;top:238.2px;width:3.1px;height:3.1px;background:#f1f5f8;border-radius:50%"></div>
<div class="t" style="left:38.9px;top:239.2px;font-size:3px;color:#dfe6ec;">EQ</div>
<div class="t" style="left:40.3px;top:246.8px;font-size:2.8px;color:#aab5bf;">SENDS</div>
<div style="left:34.9px;top:254.4px;width:4.4px;height:4.6px;background:#149fe6;border-radius:.8px"></div>
<div class="t" style="left:41.1px;top:256.1px;font-size:3px;color:#e3eaf0;">Reverb</div>
<div style="left:34.7px;top:261.6px;width:19.6px;height:5.6px;background:#0f3d5a;border-radius:1px"></div>
<div style="left:34.7px;top:261.6px;width:12.74px;height:5.6px;background:#1587c8;border-radius:1px"></div>
<div class="t" style="left:40.7px;top:263.8px;font-size:2.6px;color:#9fdcff;font-weight:normal">-10.0</div>
<div style="left:34.9px;top:272px;width:4.4px;height:4.6px;background:#4a5560;border-radius:.8px"></div>
<div class="t" style="left:41.1px;top:273.7px;font-size:3px;color:#6b7884;">FX 2</div>
<div style="left:34.7px;top:279.2px;width:19.6px;height:5.6px;background:#152331;border-radius:1px"></div>
<div style="left:42.3px;top:281.8px;width:3.6px;height:0.6px;background:#3e5a70;"></div>
<div style="left:32.7px;top:294.8px;width:23.6px;height:119.4px;background:#19232d;border:.7px solid #303d49;border-radius:2px 2px 0 0"></div>
<div style="left:34.9px;top:296.4px;width:19.2px;height:4.8px;background:#0e141a;border-radius:1px"></div>
<div class="t" style="left:43.5px;top:297.8px;font-size:2.8px;color:#8d99a4;font-weight:normal">C</div>
<div style="left:40.3px;top:303.6px;width:14.4px;height:5.2px;background:#0e141a;border-radius:1px"></div>
<div class="t" style="left:45.3px;top:305.2px;font-size:2.8px;color:#5fb4e6;">-3.11</div>
<div style="left:37.2px;top:315.6px;width:3.8px;height:3.4px;background:#b9c3cb;border-radius:.6px"></div>
<div style="left:38px;top:316.3px;width:2.2px;height:1.8px;background:#e8edf1;border-radius:.3px"></div>
<div style="left:37.2px;top:326.2px;width:3.8px;height:3.4px;background:#b9c3cb;border-radius:.6px"></div>
<div style="left:38px;top:326.9px;width:2.2px;height:1.8px;background:#e8edf1;border-radius:.3px"></div>
<div style="left:43.5px;top:312.4px;width:11px;height:99px;background:rgba(0,0,0,.16);border-radius:1px"></div>
<div style="left:46.7px;top:313.4px;width:1.6px;height:97px;background:#0a0e12;"></div>
<div style="left:50.3px;top:313.4px;width:1.3px;height:97px;background:#0d1217;"></div>
<div style="left:52.3px;top:313.4px;width:1.3px;height:97px;background:#0d1217;"></div>
<div style="left:44.7px;top:329.6px;width:5.8px;height:12.8px;background:linear-gradient(180deg,#eef1f3,#c5cbd0 42%,#59626a 49%,#e6eaed 56%,#b9c0c6);border-radius:.8px"></div>
<div style="left:33.1px;top:414.6px;width:22.8px;height:5.8px;background:#ff2e72;border-radius:1.6px"></div>
<div class="t" style="left:44.5px;top:416.8px;font-size:2.7px;color:rgba(0,0,0,.55);"><span style="display:inline-block;transform:translateX(-50%)">Woodwind</span></div>
<div style="left:59.1px;top:203px;width:23.6px;height:88.4px;background:#19232d;border:.7px solid #303d49;border-radius:2px"></div>
<div style="left:61px;top:206.3px;width:3.1px;height:3.1px;background:#6cc6ff;border-radius:50%"></div>
<div class="t" style="left:65.3px;top:207.6px;font-size:3px;color:#dfe6ec;">INSERTS</div>
<div style="left:60.9px;top:211.6px;width:20px;height:5px;background:#139de6;border-radius:1px"></div>
<div class="t" style="left:62.5px;top:213.6px;font-size:2.6px;color:#7fd0ff;font-weight:normal">Compres...</div>
<div style="left:60.9px;top:217.6px;width:20px;height:5px;background:#232f3b;border-radius:1px"></div>
<div style="left:62.5px;top:219.8px;width:3.4px;height:0.7px;background:#5a6874;"></div>
<div style="left:76.7px;top:219.2px;width:2.2px;height:2px;background:#6b7884;border-radius:.4px"></div>
<div style="left:60.9px;top:223.6px;width:20px;height:5px;background:#232f3b;border-radius:1px"></div>
<div style="left:62.5px;top:225.8px;width:3.4px;height:0.7px;background:#5a6874;"></div>
<div style="left:76.7px;top:225.2px;width:2.2px;height:2px;background:#6b7884;border-radius:.4px"></div>
<div style="left:60.9px;top:229.6px;width:20px;height:5px;background:#232f3b;border-radius:1px"></div>
<div style="left:62.5px;top:231.8px;width:3.4px;height:0.7px;background:#5a6874;"></div>
<div style="left:76.7px;top:231.2px;width:2.2px;height:2px;background:#6b7884;border-radius:.4px"></div>
<div style="left:60.3px;top:236.4px;width:21.2px;height:6.8px;background:#10171e;border-radius:1px"></div>
<div style="left:61px;top:238.2px;width:3.1px;height:3.1px;background:#f1f5f8;border-radius:50%"></div>
<div class="t" style="left:65.3px;top:239.2px;font-size:3px;color:#dfe6ec;">EQ</div>
<div class="t" style="left:66.7px;top:246.8px;font-size:2.8px;color:#aab5bf;">SENDS</div>
<div style="left:61.3px;top:254.4px;width:4.4px;height:4.6px;background:#149fe6;border-radius:.8px"></div>
<div class="t" style="left:67.5px;top:256.1px;font-size:3px;color:#e3eaf0;">Reverb</div>
<div style="left:61.1px;top:261.6px;width:19.6px;height:5.6px;background:#0f3d5a;border-radius:1px"></div>
<div style="left:61.1px;top:261.6px;width:14.7px;height:5.6px;background:#1587c8;border-radius:1px"></div>
<div class="t" style="left:67.1px;top:263.8px;font-size:2.6px;color:#9fdcff;font-weight:normal">-10.0</div>
<div style="left:61.3px;top:272px;width:4.4px;height:4.6px;background:#149fe6;border-radius:.8px"></div>
<div class="t" style="left:67.5px;top:273.7px;font-size:3px;color:#e3eaf0;">FX 2</div>
<div style="left:61.1px;top:279.2px;width:19.6px;height:5.6px;background:#0f3d5a;border-radius:1px"></div>
<div style="left:61.1px;top:279.2px;width:10.78px;height:5.6px;background:#1587c8;border-radius:1px"></div>
<div class="t" style="left:67.1px;top:281.4px;font-size:2.6px;color:#9fdcff;font-weight:normal">-10.0</div>
<div style="left:59.1px;top:294.8px;width:23.6px;height:119.4px;background:#19232d;border:.7px solid #303d49;border-radius:2px 2px 0 0"></div>
<div style="left:61.3px;top:296.4px;width:19.2px;height:4.8px;background:#0e141a;border-radius:1px"></div>
<div class="t" style="left:69.9px;top:297.8px;font-size:2.8px;color:#8d99a4;font-weight:normal">C</div>
<div style="left:66.7px;top:303.6px;width:14.4px;height:5.2px;background:#0e141a;border-radius:1px"></div>
<div class="t" style="left:71.7px;top:305.2px;font-size:2.8px;color:#5fb4e6;">0.00</div>
<div style="left:63.6px;top:315.6px;width:3.8px;height:3.4px;background:#b9c3cb;border-radius:.6px"></div>
<div style="left:64.4px;top:316.3px;width:2.2px;height:1.8px;background:#e8edf1;border-radius:.3px"></div>
<div style="left:63.6px;top:326.2px;width:3.8px;height:3.4px;background:#b9c3cb;border-radius:.6px"></div>
<div style="left:64.4px;top:326.9px;width:2.2px;height:1.8px;background:#e8edf1;border-radius:.3px"></div>
<div style="left:69.9px;top:312.4px;width:11px;height:99px;background:rgba(0,0,0,.16);border-radius:1px"></div>
<div style="left:73.1px;top:313.4px;width:1.6px;height:97px;background:#0a0e12;"></div>
<div style="left:76.7px;top:313.4px;width:1.3px;height:97px;background:#0d1217;"></div>
<div style="left:78.7px;top:313.4px;width:1.3px;height:97px;background:#0d1217;"></div>
<div style="left:71.1px;top:319.6px;width:5.8px;height:12.8px;background:linear-gradient(180deg,#eef1f3,#c5cbd0 42%,#59626a 49%,#e6eaed 56%,#b9c0c6);border-radius:.8px"></div>
<div style="left:59.5px;top:414.6px;width:22.8px;height:5.8px;background:#ff6a2c;border-radius:1.6px"></div>
<div class="t" style="left:70.9px;top:416.8px;font-size:2.7px;color:rgba(0,0,0,.55);"><span style="display:inline-block;transform:translateX(-50%)">HALion Sonic 1</span></div>
<div style="left:85.5px;top:203px;width:23.6px;height:88.4px;background:#19232d;border:.7px solid #303d49;border-radius:2px"></div>
<div style="left:87.4px;top:206.3px;width:3.1px;height:3.1px;background:#6cc6ff;border-radius:50%"></div>
<div class="t" style="left:91.7px;top:207.6px;font-size:3px;color:#dfe6ec;">INSERTS</div>
<div style="left:87.3px;top:211.6px;width:20px;height:5px;background:#139de6;border-radius:1px"></div>
<div class="t" style="left:88.9px;top:213.6px;font-size:2.6px;color:#7fd0ff;font-weight:normal">Limiter</div>
<div style="left:87.3px;top:217.6px;width:20px;height:5px;background:#139de6;border-radius:1px"></div>
<div class="t" style="left:88.9px;top:219.6px;font-size:2.6px;color:#7fd0ff;font-weight:normal">Compres...</div>
<div style="left:87.3px;top:223.6px;width:20px;height:5px;background:#232f3b;border-radius:1px"></div>
<div style="left:88.9px;top:225.8px;width:3.4px;height:0.7px;background:#5a6874;"></div>
<div style="left:103.1px;top:225.2px;width:2.2px;height:2px;background:#6b7884;border-radius:.4px"></div>
<div style="left:87.3px;top:229.6px;width:20px;height:5px;background:#232f3b;border-radius:1px"></div>
<div style="left:88.9px;top:231.8px;width:3.4px;height:0.7px;background:#5a6874;"></div>
<div style="left:103.1px;top:231.2px;width:2.2px;height:2px;background:#6b7884;border-radius:.4px"></div>
<div style="left:86.7px;top:236.4px;width:21.2px;height:6.8px;background:#10171e;border-radius:1px"></div>
<div style="left:87.4px;top:238.2px;width:3.1px;height:3.1px;background:#f1f5f8;border-radius:50%"></div>
<div class="t" style="left:91.7px;top:239.2px;font-size:3px;color:#dfe6ec;">EQ</div>
<div class="t" style="left:93.1px;top:246.8px;font-size:2.8px;color:#aab5bf;">SENDS</div>
<div style="left:87.7px;top:254.4px;width:4.4px;height:4.6px;background:#149fe6;border-radius:.8px"></div>
<div class="t" style="left:93.9px;top:256.1px;font-size:3px;color:#e3eaf0;">Reverb</div>
<div style="left:87.5px;top:261.6px;width:19.6px;height:5.6px;background:#0f3d5a;border-radius:1px"></div>
<div style="left:87.5px;top:261.6px;width:10.78px;height:5.6px;background:#1587c8;border-radius:1px"></div>
<div class="t" style="left:93.5px;top:263.8px;font-size:2.6px;color:#9fdcff;font-weight:normal">-10.0</div>
<div style="left:87.7px;top:272px;width:4.4px;height:4.6px;background:#149fe6;border-radius:.8px"></div>
<div class="t" style="left:93.9px;top:273.7px;font-size:3px;color:#e3eaf0;">FX 2</div>
<div style="left:87.5px;top:279.2px;width:19.6px;height:5.6px;background:#0f3d5a;border-radius:1px"></div>
<div style="left:87.5px;top:279.2px;width:12.74px;height:5.6px;background:#1587c8;border-radius:1px"></div>
<div class="t" style="left:93.5px;top:281.4px;font-size:2.6px;color:#9fdcff;font-weight:normal">-10.0</div>
<div style="left:85.5px;top:294.8px;width:23.6px;height:119.4px;background:#19232d;border:.7px solid #303d49;border-radius:2px 2px 0 0"></div>
<div style="left:87.7px;top:296.4px;width:19.2px;height:4.8px;background:#0e141a;border-radius:1px"></div>
<div class="t" style="left:96.3px;top:297.8px;font-size:2.8px;color:#8d99a4;font-weight:normal">C</div>
<div style="left:93.1px;top:303.6px;width:14.4px;height:5.2px;background:#0e141a;border-radius:1px"></div>
<div class="t" style="left:98.1px;top:305.2px;font-size:2.8px;color:#5fb4e6;">-3.10</div>
<div style="left:90px;top:315.6px;width:3.8px;height:3.4px;background:#b9c3cb;border-radius:.6px"></div>
<div style="left:90.8px;top:316.3px;width:2.2px;height:1.8px;background:#e8edf1;border-radius:.3px"></div>
<div style="left:90px;top:326.2px;width:3.8px;height:3.4px;background:#b9c3cb;border-radius:.6px"></div>
<div style="left:90.8px;top:326.9px;width:2.2px;height:1.8px;background:#e8edf1;border-radius:.3px"></div>
<div style="left:96.3px;top:312.4px;width:11px;height:99px;background:rgba(0,0,0,.16);border-radius:1px"></div>
<div style="left:99.5px;top:313.4px;width:1.6px;height:97px;background:#0a0e12;"></div>
<div style="left:103.1px;top:313.4px;width:1.3px;height:97px;background:#0d1217;"></div>
<div style="left:105.1px;top:313.4px;width:1.3px;height:97px;background:#0d1217;"></div>
<div style="left:97.5px;top:335.2px;width:5.8px;height:12.8px;background:linear-gradient(180deg,#eef1f3,#c5cbd0 42%,#59626a 49%,#e6eaed 56%,#b9c0c6);border-radius:.8px"></div>
<div style="left:85.9px;top:414.6px;width:22.8px;height:5.8px;background:#ffd21a;border-radius:1.6px"></div>
<div class="t" style="left:97.3px;top:416.8px;font-size:2.7px;color:rgba(0,0,0,.55);"><span style="display:inline-block;transform:translateX(-50%)">Vc. Db.</span></div>
<div style="left:111.9px;top:203px;width:23.6px;height:88.4px;background:#19232d;border:.7px solid #303d49;border-radius:2px"></div>
<div style="left:113.8px;top:206.3px;width:3.1px;height:3.1px;background:#6cc6ff;border-radius:50%"></div>
<div class="t" style="left:118.1px;top:207.6px;font-size:3px;color:#dfe6ec;">INSERTS</div>
<div style="left:113.7px;top:211.6px;width:20px;height:5px;background:#139de6;border-radius:1px"></div>
<div class="t" style="left:115.3px;top:213.6px;font-size:2.6px;color:#7fd0ff;font-weight:normal">Compres...</div>
<div style="left:113.7px;top:217.6px;width:20px;height:5px;background:#232f3b;border-radius:1px"></div>
<div style="left:115.3px;top:219.8px;width:3.4px;height:0.7px;background:#5a6874;"></div>
<div style="left:129.5px;top:219.2px;width:2.2px;height:2px;background:#6b7884;border-radius:.4px"></div>
<div style="left:113.7px;top:223.6px;width:20px;height:5px;background:#232f3b;border-radius:1px"></div>
<div style="left:115.3px;top:225.8px;width:3.4px;height:0.7px;background:#5a6874;"></div>
<div style="left:129.5px;top:225.2px;width:2.2px;height:2px;background:#6b7884;border-radius:.4px"></div>
<div style="left:113.7px;top:229.6px;width:20px;height:5px;background:#232f3b;border-radius:1px"></div>
<div style="left:115.3px;top:231.8px;width:3.4px;height:0.7px;background:#5a6874;"></div>
<div style="left:129.5px;top:231.2px;width:2.2px;height:2px;background:#6b7884;border-radius:.4px"></div>
<div style="left:113.1px;top:236.4px;width:21.2px;height:6.8px;background:#10171e;border-radius:1px"></div>
<div style="left:113.8px;top:238.2px;width:3.1px;height:3.1px;background:#f1f5f8;border-radius:50%"></div>
<div class="t" style="left:118.1px;top:239.2px;font-size:3px;color:#dfe6ec;">EQ</div>
<div class="t" style="left:119.5px;top:246.8px;font-size:2.8px;color:#aab5bf;">SENDS</div>
<div style="left:114.1px;top:254.4px;width:4.4px;height:4.6px;background:#4a5560;border-radius:.8px"></div>
<div class="t" style="left:120.3px;top:256.1px;font-size:3px;color:#6b7884;">Reverb</div>
<div style="left:113.9px;top:261.6px;width:19.6px;height:5.6px;background:#152331;border-radius:1px"></div>
<div style="left:121.5px;top:264.2px;width:3.6px;height:0.6px;background:#3e5a70;"></div>
<div style="left:114.1px;top:272px;width:4.4px;height:4.6px;background:#149fe6;border-radius:.8px"></div>
<div class="t" style="left:120.3px;top:273.7px;font-size:3px;color:#e3eaf0;">FX 2</div>
<div style="left:113.9px;top:279.2px;width:19.6px;height:5.6px;background:#0f3d5a;border-radius:1px"></div>
<div style="left:113.9px;top:279.2px;width:14.7px;height:5.6px;background:#1587c8;border-radius:1px"></div>
<div class="t" style="left:119.9px;top:281.4px;font-size:2.6px;color:#9fdcff;font-weight:normal">-10.0</div>
<div style="left:111.9px;top:294.8px;width:23.6px;height:119.4px;background:#19232d;border:.7px solid #303d49;border-radius:2px 2px 0 0"></div>
<div style="left:114.1px;top:296.4px;width:19.2px;height:4.8px;background:#0e141a;border-radius:1px"></div>
<div class="t" style="left:122.7px;top:297.8px;font-size:2.8px;color:#8d99a4;font-weight:normal">C</div>
<div style="left:119.5px;top:303.6px;width:14.4px;height:5.2px;background:#0e141a;border-radius:1px"></div>
<div class="t" style="left:124.5px;top:305.2px;font-size:2.8px;color:#5fb4e6;">-5.40</div>
<div style="left:116.4px;top:315.6px;width:3.8px;height:3.4px;background:#b9c3cb;border-radius:.6px"></div>
<div style="left:117.2px;top:316.3px;width:2.2px;height:1.8px;background:#e8edf1;border-radius:.3px"></div>
<div style="left:116.4px;top:326.2px;width:3.8px;height:3.4px;background:#b9c3cb;border-radius:.6px"></div>
<div style="left:117.2px;top:326.9px;width:2.2px;height:1.8px;background:#e8edf1;border-radius:.3px"></div>
<div style="left:122.7px;top:312.4px;width:11px;height:99px;background:rgba(0,0,0,.16);border-radius:1px"></div>
<div style="left:125.9px;top:313.4px;width:1.6px;height:97px;background:#0a0e12;"></div>
<div style="left:129.5px;top:313.4px;width:1.3px;height:97px;background:#0d1217;"></div>
<div style="left:131.5px;top:313.4px;width:1.3px;height:97px;background:#0d1217;"></div>
<div style="left:123.9px;top:342.3px;width:5.8px;height:12.8px;background:linear-gradient(180deg,#eef1f3,#c5cbd0 42%,#59626a 49%,#e6eaed 56%,#b9c0c6);border-radius:.8px"></div>
<div style="left:112.3px;top:414.6px;width:22.8px;height:5.8px;background:#8fe21f;border-radius:1.6px"></div>
<div class="t" style="left:123.7px;top:416.8px;font-size:2.7px;color:rgba(0,0,0,.55);"><span style="display:inline-block;transform:translateX(-50%)">Percussion</span></div>
<div style="left:138.3px;top:203px;width:23.6px;height:88.4px;background:#19232d;border:.7px solid #303d49;border-radius:2px"></div>
<div style="left:140.2px;top:206.3px;width:3.1px;height:3.1px;background:#6cc6ff;border-radius:50%"></div>
<div class="t" style="left:144.5px;top:207.6px;font-size:3px;color:#dfe6ec;">INSERTS</div>
<div style="left:140.1px;top:211.6px;width:20px;height:5px;background:#139de6;border-radius:1px"></div>
<div class="t" style="left:141.7px;top:213.6px;font-size:2.6px;color:#7fd0ff;font-weight:normal">Reverenc...</div>
<div style="left:140.1px;top:217.6px;width:20px;height:5px;background:#232f3b;border-radius:1px"></div>
<div style="left:141.7px;top:219.8px;width:3.4px;height:0.7px;background:#5a6874;"></div>
<div style="left:155.9px;top:219.2px;width:2.2px;height:2px;background:#6b7884;border-radius:.4px"></div>
<div style="left:140.1px;top:223.6px;width:20px;height:5px;background:#232f3b;border-radius:1px"></div>
<div style="left:141.7px;top:225.8px;width:3.4px;height:0.7px;background:#5a6874;"></div>
<div style="left:155.9px;top:225.2px;width:2.2px;height:2px;background:#6b7884;border-radius:.4px"></div>
<div style="left:140.1px;top:229.6px;width:20px;height:5px;background:#232f3b;border-radius:1px"></div>
<div style="left:141.7px;top:231.8px;width:3.4px;height:0.7px;background:#5a6874;"></div>
<div style="left:155.9px;top:231.2px;width:2.2px;height:2px;background:#6b7884;border-radius:.4px"></div>
<div style="left:139.5px;top:236.4px;width:21.2px;height:6.8px;background:#10171e;border-radius:1px"></div>
<div style="left:140.2px;top:238.2px;width:3.1px;height:3.1px;background:#f1f5f8;border-radius:50%"></div>
<div class="t" style="left:144.5px;top:239.2px;font-size:3px;color:#dfe6ec;">EQ</div>
<div class="t" style="left:145.9px;top:246.8px;font-size:2.8px;color:#aab5bf;">SENDS</div>
<div style="left:140.5px;top:254.4px;width:4.4px;height:4.6px;background:#4a5560;border-radius:.8px"></div>
<div class="t" style="left:146.7px;top:256.1px;font-size:3px;color:#6b7884;">Reverb</div>
<div style="left:140.3px;top:261.6px;width:19.6px;height:5.6px;background:#152331;border-radius:1px"></div>
<div style="left:147.9px;top:264.2px;width:3.6px;height:0.6px;background:#3e5a70;"></div>
<div style="left:140.5px;top:272px;width:4.4px;height:4.6px;background:#149fe6;border-radius:.8px"></div>
<div class="t" style="left:146.7px;top:273.7px;font-size:3px;color:#e3eaf0;">FX 2</div>
<div style="left:140.3px;top:279.2px;width:19.6px;height:5.6px;background:#0f3d5a;border-radius:1px"></div>
<div style="left:140.3px;top:279.2px;width:10.78px;height:5.6px;background:#1587c8;border-radius:1px"></div>
<div class="t" style="left:146.3px;top:281.4px;font-size:2.6px;color:#9fdcff;font-weight:normal">-10.0</div>
<div style="left:138.3px;top:294.8px;width:23.6px;height:119.4px;background:#19232d;border:.7px solid #303d49;border-radius:2px 2px 0 0"></div>
<div style="left:140.5px;top:296.4px;width:19.2px;height:4.8px;background:#0e141a;border-radius:1px"></div>
<div class="t" style="left:149.1px;top:297.8px;font-size:2.8px;color:#8d99a4;font-weight:normal">C</div>
<div style="left:145.9px;top:303.6px;width:14.4px;height:5.2px;background:#0e141a;border-radius:1px"></div>
<div class="t" style="left:150.9px;top:305.2px;font-size:2.8px;color:#5fb4e6;">-3.00</div>
<div style="left:142.8px;top:315.6px;width:3.8px;height:3.4px;background:#b9c3cb;border-radius:.6px"></div>
<div style="left:143.6px;top:316.3px;width:2.2px;height:1.8px;background:#e8edf1;border-radius:.3px"></div>
<div style="left:142.8px;top:326.2px;width:3.8px;height:3.4px;background:#b9c3cb;border-radius:.6px"></div>
<div style="left:143.6px;top:326.9px;width:2.2px;height:1.8px;background:#e8edf1;border-radius:.3px"></div>
<div style="left:149.1px;top:312.4px;width:11px;height:99px;background:rgba(0,0,0,.16);border-radius:1px"></div>
<div style="left:152.3px;top:313.4px;width:1.6px;height:97px;background:#0a0e12;"></div>
<div style="left:155.9px;top:313.4px;width:1.3px;height:97px;background:#0d1217;"></div>
<div style="left:157.9px;top:313.4px;width:1.3px;height:97px;background:#0d1217;"></div>
<div style="left:150.3px;top:333.6px;width:5.8px;height:12.8px;background:linear-gradient(180deg,#eef1f3,#c5cbd0 42%,#59626a 49%,#e6eaed 56%,#b9c0c6);border-radius:.8px"></div>
<div style="left:138.7px;top:414.6px;width:22.8px;height:5.8px;background:#27e6b0;border-radius:1.6px"></div>
<div class="t" style="left:150.1px;top:416.8px;font-size:2.7px;color:rgba(0,0,0,.55);"><span style="display:inline-block;transform:translateX(-50%)">Tam.</span></div>
<div style="left:164.7px;top:203px;width:23.6px;height:88.4px;background:#185145;border:.7px solid #2a6c5c;border-radius:2px"></div>
<div style="left:166.6px;top:206.3px;width:3.1px;height:3.1px;background:#6cc6ff;border-radius:50%"></div>
<div class="t" style="left:170.9px;top:207.6px;font-size:3px;color:#dfe6ec;">INSERTS</div>
<div style="left:166.5px;top:211.6px;width:20px;height:5px;background:#139de6;border-radius:1px"></div>
<div class="t" style="left:168.1px;top:213.6px;font-size:2.6px;color:#7fd0ff;font-weight:normal">REVerence</div>
<div style="left:166.5px;top:217.6px;width:20px;height:5px;background:#1f4b44;border-radius:1px"></div>
<div style="left:168.1px;top:219.8px;width:3.4px;height:0.7px;background:rgba(255,255,255,.3);"></div>
<div style="left:182.3px;top:219.2px;width:2.2px;height:2px;background:rgba(255,255,255,.35);border-radius:.4px"></div>
<div style="left:166.5px;top:223.6px;width:20px;height:5px;background:#1f4b44;border-radius:1px"></div>
<div style="left:168.1px;top:225.8px;width:3.4px;height:0.7px;background:rgba(255,255,255,.3);"></div>
<div style="left:182.3px;top:225.2px;width:2.2px;height:2px;background:rgba(255,255,255,.35);border-radius:.4px"></div>
<div style="left:166.5px;top:229.6px;width:20px;height:5px;background:#1f4b44;border-radius:1px"></div>
<div style="left:168.1px;top:231.8px;width:3.4px;height:0.7px;background:rgba(255,255,255,.3);"></div>
<div style="left:182.3px;top:231.2px;width:2.2px;height:2px;background:rgba(255,255,255,.35);border-radius:.4px"></div>
<div style="left:165.9px;top:236.4px;width:21.2px;height:6.8px;background:rgba(0,0,0,.35);border-radius:1px"></div>
<div style="left:166.6px;top:238.2px;width:3.1px;height:3.1px;background:#f1f5f8;border-radius:50%"></div>
<div class="t" style="left:170.9px;top:239.2px;font-size:3px;color:#dfe6ec;">EQ</div>
<div style="left:164.7px;top:294.8px;width:23.6px;height:119.4px;background:#185145;border:.7px solid #2a6c5c;border-radius:2px 2px 0 0"></div>
<div style="left:166.9px;top:296.4px;width:19.2px;height:4.8px;background:rgba(0,0,0,.45);border-radius:1px"></div>
<div class="t" style="left:175.5px;top:297.8px;font-size:2.8px;color:#8d99a4;font-weight:normal">C</div>
<div style="left:172.3px;top:303.6px;width:14.4px;height:5.2px;background:rgba(0,0,0,.45);border-radius:1px"></div>
<div class="t" style="left:177.3px;top:305.2px;font-size:2.8px;color:#5fb4e6;">-5.59</div>
<div style="left:169.2px;top:315.6px;width:3.8px;height:3.4px;background:#b9c3cb;border-radius:.6px"></div>
<div style="left:170px;top:316.3px;width:2.2px;height:1.8px;background:#e8edf1;border-radius:.3px"></div>
<div style="left:169.2px;top:326.2px;width:3.8px;height:3.4px;background:#b9c3cb;border-radius:.6px"></div>
<div style="left:170px;top:326.9px;width:2.2px;height:1.8px;background:#e8edf1;border-radius:.3px"></div>
<div style="left:175.5px;top:312.4px;width:11px;height:99px;background:rgba(0,0,0,.16);border-radius:1px"></div>
<div style="left:178.7px;top:313.4px;width:1.6px;height:97px;background:rgba(0,0,0,.5);"></div>
<div style="left:182.3px;top:313.4px;width:1.3px;height:97px;background:rgba(0,0,0,.4);"></div>
<div style="left:184.3px;top:313.4px;width:1.3px;height:97px;background:rgba(0,0,0,.4);"></div>
<div style="left:176.7px;top:342.3px;width:5.8px;height:12.8px;background:linear-gradient(180deg,#eef1f3,#c5cbd0 42%,#59626a 49%,#e6eaed 56%,#b9c0c6);border-radius:.8px"></div>
<div style="left:165.1px;top:414.6px;width:22.8px;height:5.8px;background:#b9bdc1;border-radius:1.6px"></div>
<div class="t" style="left:176.5px;top:416.8px;font-size:2.7px;color:rgba(0,0,0,.55);"><span style="display:inline-block;transform:translateX(-50%)">Reverb</span></div>
<div style="left:191.1px;top:203px;width:23.6px;height:88.4px;background:#185145;border:.7px solid #2a6c5c;border-radius:2px"></div>
<div style="left:193px;top:206.3px;width:3.1px;height:3.1px;background:#6cc6ff;border-radius:50%"></div>
<div class="t" style="left:197.3px;top:207.6px;font-size:3px;color:#dfe6ec;">INSERTS</div>
<div style="left:192.9px;top:211.6px;width:20px;height:5px;background:#139de6;border-radius:1px"></div>
<div class="t" style="left:194.5px;top:213.6px;font-size:2.6px;color:#7fd0ff;font-weight:normal">REVerence</div>
<div style="left:192.9px;top:217.6px;width:20px;height:5px;background:#1f4b44;border-radius:1px"></div>
<div style="left:194.5px;top:219.8px;width:3.4px;height:0.7px;background:rgba(255,255,255,.3);"></div>
<div style="left:208.7px;top:219.2px;width:2.2px;height:2px;background:rgba(255,255,255,.35);border-radius:.4px"></div>
<div style="left:192.9px;top:223.6px;width:20px;height:5px;background:#1f4b44;border-radius:1px"></div>
<div style="left:194.5px;top:225.8px;width:3.4px;height:0.7px;background:rgba(255,255,255,.3);"></div>
<div style="left:208.7px;top:225.2px;width:2.2px;height:2px;background:rgba(255,255,255,.35);border-radius:.4px"></div>
<div style="left:192.9px;top:229.6px;width:20px;height:5px;background:#1f4b44;border-radius:1px"></div>
<div style="left:194.5px;top:231.8px;width:3.4px;height:0.7px;background:rgba(255,255,255,.3);"></div>
<div style="left:208.7px;top:231.2px;width:2.2px;height:2px;background:rgba(255,255,255,.35);border-radius:.4px"></div>
<div style="left:192.3px;top:236.4px;width:21.2px;height:6.8px;background:rgba(0,0,0,.35);border-radius:1px"></div>
<div style="left:193px;top:238.2px;width:3.1px;height:3.1px;background:#f1f5f8;border-radius:50%"></div>
<div class="t" style="left:197.3px;top:239.2px;font-size:3px;color:#dfe6ec;">EQ</div>
<div style="left:191.1px;top:294.8px;width:23.6px;height:119.4px;background:#185145;border:.7px solid #2a6c5c;border-radius:2px 2px 0 0"></div>
<div style="left:193.3px;top:296.4px;width:19.2px;height:4.8px;background:rgba(0,0,0,.45);border-radius:1px"></div>
<div class="t" style="left:201.9px;top:297.8px;font-size:2.8px;color:#8d99a4;font-weight:normal">C</div>
<div style="left:198.7px;top:303.6px;width:14.4px;height:5.2px;background:rgba(0,0,0,.45);border-radius:1px"></div>
<div class="t" style="left:203.7px;top:305.2px;font-size:2.8px;color:#5fb4e6;">-3.19</div>
<div style="left:195.6px;top:315.6px;width:3.8px;height:3.4px;background:#b9c3cb;border-radius:.6px"></div>
<div style="left:196.4px;top:316.3px;width:2.2px;height:1.8px;background:#e8edf1;border-radius:.3px"></div>
<div style="left:195.6px;top:326.2px;width:3.8px;height:3.4px;background:#b9c3cb;border-radius:.6px"></div>
<div style="left:196.4px;top:326.9px;width:2.2px;height:1.8px;background:#e8edf1;border-radius:.3px"></div>
<div style="left:201.9px;top:312.4px;width:11px;height:99px;background:rgba(0,0,0,.16);border-radius:1px"></div>
<div style="left:205.1px;top:313.4px;width:1.6px;height:97px;background:rgba(0,0,0,.5);"></div>
<div style="left:208.7px;top:313.4px;width:1.3px;height:97px;background:rgba(0,0,0,.4);"></div>
<div style="left:210.7px;top:313.4px;width:1.3px;height:97px;background:rgba(0,0,0,.4);"></div>
<div style="left:203.1px;top:331.6px;width:5.8px;height:12.8px;background:linear-gradient(180deg,#eef1f3,#c5cbd0 42%,#59626a 49%,#e6eaed 56%,#b9c0c6);border-radius:.8px"></div>
<div style="left:191.5px;top:414.6px;width:22.8px;height:5.8px;background:#b9bdc1;border-radius:1.6px"></div>
<div class="t" style="left:202.9px;top:416.8px;font-size:2.7px;color:rgba(0,0,0,.55);"><span style="display:inline-block;transform:translateX(-50%)">FX 2</span></div>
<div style="left:287.4px;top:203px;width:23.6px;height:88.4px;background:#8c3141;border:.7px solid #a84656;border-radius:2px"></div>
<div style="left:289.3px;top:206.3px;width:3.1px;height:3.1px;background:#6cc6ff;border-radius:50%"></div>
<div class="t" style="left:293.6px;top:207.6px;font-size:3px;color:#dfe6ec;">INSERTS</div>
<div style="left:289.2px;top:211.6px;width:20px;height:5px;background:#6e2a38;border-radius:1px"></div>
<div style="left:290.8px;top:213.8px;width:3.4px;height:0.7px;background:rgba(255,255,255,.3);"></div>
<div style="left:305px;top:213.2px;width:2.2px;height:2px;background:rgba(255,255,255,.35);border-radius:.4px"></div>
<div style="left:289.2px;top:217.6px;width:20px;height:5px;background:#6e2a38;border-radius:1px"></div>
<div style="left:290.8px;top:219.8px;width:3.4px;height:0.7px;background:rgba(255,255,255,.3);"></div>
<div style="left:305px;top:219.2px;width:2.2px;height:2px;background:rgba(255,255,255,.35);border-radius:.4px"></div>
<div style="left:289.2px;top:223.6px;width:20px;height:5px;background:#6e2a38;border-radius:1px"></div>
<div style="left:290.8px;top:225.8px;width:3.4px;height:0.7px;background:rgba(255,255,255,.3);"></div>
<div style="left:305px;top:225.2px;width:2.2px;height:2px;background:rgba(255,255,255,.35);border-radius:.4px"></div>
<div style="left:289.2px;top:229.6px;width:20px;height:5px;background:#139de6;border-radius:1px"></div>
<div class="t" style="left:290.8px;top:231.6px;font-size:2.6px;color:#7fd0ff;font-weight:normal">Limiter</div>
<div style="left:288.6px;top:236.4px;width:21.2px;height:6.8px;background:rgba(0,0,0,.35);border-radius:1px"></div>
<div style="left:289.3px;top:238.2px;width:3.1px;height:3.1px;background:#f1f5f8;border-radius:50%"></div>
<div class="t" style="left:293.6px;top:239.2px;font-size:3px;color:#dfe6ec;">EQ</div>
<div style="left:287.4px;top:294.8px;width:23.6px;height:119.4px;background:#8c3141;border:.7px solid #a84656;border-radius:2px 2px 0 0"></div>
<div style="left:289.6px;top:296.4px;width:19.2px;height:4.8px;background:rgba(0,0,0,.45);border-radius:1px"></div>
<div class="t" style="left:298.2px;top:297.8px;font-size:2.8px;color:#8d99a4;font-weight:normal">C</div>
<div style="left:295px;top:303.6px;width:14.4px;height:5.2px;background:rgba(0,0,0,.45);border-radius:1px"></div>
<div class="t" style="left:300px;top:305.2px;font-size:2.8px;color:#5fb4e6;">-3.19</div>
<div style="left:291.9px;top:315.6px;width:3.8px;height:3.4px;background:#b9c3cb;border-radius:.6px"></div>
<div style="left:292.7px;top:316.3px;width:2.2px;height:1.8px;background:#e8edf1;border-radius:.3px"></div>
<div style="left:291.9px;top:326.2px;width:3.8px;height:3.4px;background:#b9c3cb;border-radius:.6px"></div>
<div style="left:292.7px;top:326.9px;width:2.2px;height:1.8px;background:#e8edf1;border-radius:.3px"></div>
<div style="left:298.2px;top:312.4px;width:11px;height:99px;background:rgba(0,0,0,.16);border-radius:1px"></div>
<div style="left:301.4px;top:313.4px;width:1.6px;height:97px;background:rgba(0,0,0,.5);"></div>
<div style="left:305px;top:313.4px;width:1.3px;height:97px;background:rgba(0,0,0,.4);"></div>
<div style="left:307px;top:313.4px;width:1.3px;height:97px;background:rgba(0,0,0,.4);"></div>
<div style="left:299.4px;top:330.2px;width:5.8px;height:11.6px;background:linear-gradient(180deg,#ff5a66,#e8283c 45%,#ff8a92 50%,#e8283c 55%,#ff4a58);border-radius:.8px"></div>
<div style="left:287.8px;top:414.6px;width:22.8px;height:5.8px;background:#f4566a;border-radius:1.6px"></div>
<div class="t" style="left:299.2px;top:416.8px;font-size:2.7px;color:rgba(0,0,0,.55);"><span style="display:inline-block;transform:translateX(-50%)">Output</span></div>
<div style="left:4.5px;top:421px;width:311px;height:7.2px;background:#141f29;border-radius:0 0 2px 2px"></div>
<svg style="left:6.6px;top:421.8px" width="4" height="6" viewBox="0 0 4 6"><path d="M1.4 4.6V.6H3.6V1.6H1.4" fill="none" stroke="#e3eaf0" stroke-width=".7"/><ellipse cx="1" cy="4.8" rx="1" ry=".8" fill="#e3eaf0"/></svg>
<svg style="left:13px;top:423.6px" width="3" height="3" viewBox="0 0 3 3"><path d="M.4 .6L1.5 2L2.6 .6" fill="none" stroke="#7b8894" stroke-width=".6"/></svg>
<div style="left:19.6px;top:421.6px;width:17px;height:6px;background:#1278b2;border-radius:1px"></div>
<div class="t" style="left:21.6px;top:424px;font-size:3.1px;color:#d9f0ff;">Concert</div>
<div style="left:37.2px;top:421.6px;width:14.6px;height:6px;background:#243545;border-radius:1px"></div>
<div class="t" style="left:38.8px;top:424px;font-size:3.1px;color:#aab5bf;">Transp.</div>
<div class="t" style="left:56px;top:424px;font-size:3px;color:#aab5bf;font-weight:normal">Page 1 of 1</div>
<div class="t" style="left:81.6px;top:424px;font-size:3px;color:#aab5bf;font-weight:normal">Bars 5-8</div>
<div class="t" style="left:107px;top:424px;font-size:2.9px;color:#aab5bf;font-weight:normal">00:00:08&ndash;00:00:13 (1.3&quot;)</div>
<div class="t" style="left:148.6px;top:424px;font-size:3px;color:#aab5bf;font-weight:normal">Multiple selection</div>
<svg style="left:228.4px;top:423.6px" width="5" height="3" viewBox="0 0 5 3"><path d="M.5 .5L2.5 2.3L4.5 .5" fill="none" stroke="#8d9aa6" stroke-width=".8"/></svg>
<div style="left:292px;top:423.4px;width:2.4px;height:2.4px;background:#13a6f2;border-radius:50%"></div>
<div class="t" style="left:296px;top:424px;font-size:3px;color:#8fb9d6;font-weight:normal">768ms</div>
<div style="left:321px;top:4.5px;width:442.8px;height:423.7px;background:#1a2835;border-radius:4px 4px 2px 2px;box-shadow:0 0 3px rgba(0,0,0,.55);overflow:hidden"></div>
<div style="left:321px;top:4.5px;width:442.8px;height:8.9px;background:linear-gradient(180deg,#3a3635,#3f3836 60%,#2e2f33);border-radius:4px 4px 0 0"></div>
<div style="left:322.7px;top:6.7px;width:3.6px;height:3.6px;background:#ff5f57;border-radius:50%"></div>
<div style="left:328.9px;top:6.7px;width:3.6px;height:3.6px;background:#febc2e;border-radius:50%"></div>
<div style="left:334.9px;top:6.7px;width:3.6px;height:3.6px;background:#28c840;border-radius:50%"></div>
<div style="left:515.8px;top:6.3px;width:4.6px;height:4.8px;background:#f08a3c;border-radius:.8px"></div>
<div style="left:517px;top:7.4px;width:2.2px;height:2.6px;background:#f9d2b0;border-radius:.4px"></div>
<div class="t" style="left:522.8px;top:6.7px;font-size:3.9px;color:#dcdcde;">Flow 3 in DB trans design</div>
<div style="left:321px;top:13.4px;width:442.8px;height:13.8px;background:#1a2835;"></div>
<div style="left:324px;top:15.4px;width:87.4px;height:9.6px;background:#223240;border-radius:1.5px"></div>
<div class="t" style="left:327px;top:19px;font-size:3.7px;color:#d5dde4;">Setup</div>
<div style="left:341.6px;top:15.4px;width:16.4px;height:9.6px;background:#1278b2;border-radius:1.2px"></div>
<div class="t" style="left:344.4px;top:19px;font-size:3.7px;color:#8fd4ff;">Write</div>
<div class="t" style="left:361.6px;top:19px;font-size:3.7px;color:#d5dde4;">Engrave</div>
<div class="t" style="left:383.8px;top:19px;font-size:3.7px;color:#d5dde4;">Play</div>
<div class="t" style="left:399.2px;top:19px;font-size:3.7px;color:#d5dde4;">Print</div>
<div style="left:414.4px;top:15.4px;width:43px;height:9.6px;background:#223240;border-radius:1.5px"></div>
<div class="t" style="left:417.6px;top:19px;font-size:3.7px;color:#d5dde4;">Full score</div>
<svg style="left:451.4px;top:19.2px" width="4" height="3" viewBox="0 0 4 3"><path d="M.5 .6 L2 2.2 L3.5 .6" fill="none" stroke="#8d9aa6" stroke-width=".7"/></svg>
<svg style="left:461.6px;top:17.4px" width="8" height="6" viewBox="0 0 8 6"><path d="M.4 3 Q4 -1 7.6 3 Q4 7 .4 3Z" fill="none" stroke="#d5dde4" stroke-width=".8"/><circle cx="4" cy="3" r="1.2" fill="#d5dde4"/></svg>
<svg style="left:473.4px;top:17px" width="8" height="7" viewBox="0 0 8 7"><rect x=".5" y=".5" width="7" height="6" rx=".8" fill="none" stroke="#d5dde4" stroke-width=".8"/><path d="M.5 2.2H7.5" stroke="#d5dde4" stroke-width=".8"/></svg>
<svg style="left:578.6px;top:17px" width="7" height="7" viewBox="0 0 7 7"><circle cx="3.5" cy="3.5" r="2.7" fill="none" stroke="#aeb8c1" stroke-width=".8"/><circle cx="3.5" cy="3.5" r="1" fill="#aeb8c1"/></svg>
<svg style="left:590.6px;top:17px" width="7" height="7" viewBox="0 0 7 7"><rect x=".4" y=".4" width="6.2" height="6.2" rx=".6" fill="none" stroke="#c5ced6" stroke-width=".8"/><path d="M2.3 1.5V5.5M4.7 1.5V5.5" stroke="#c5ced6" stroke-width=".9"/></svg>
<div style="left:607.4px;top:15.2px;width:10.4px;height:10.2px;background:#12a8f0;border-radius:1px"></div>
<svg style="left:609.6px;top:17.2px" width="6" height="6" viewBox="0 0 6 6"><path d="M1.6 1.4 A2.3 2.3 0 1 0 4.4 1.4" fill="none" stroke="#0a3550" stroke-width=".8"/><path d="M3 .4V3" stroke="#0a3550" stroke-width=".8"/></svg>
<div style="left:625px;top:16px;width:70px;height:9.2px;background:#111b25;"></div>
<div class="t" style="left:628px;top:19.6px;font-size:3.3px;color:#b9c3cc;">1.1.1.000</div>
<svg style="left:646.8px;top:17.8px" width="6" height="5" viewBox="0 0 6 5"><path d="M.4 .3V4.7M5.6 .3V4.7" stroke="#d5dde4" stroke-width=".8"/><path d="M1 .6L3 2.5L1 4.4ZM5 .6L3 2.5L5 4.4Z" fill="#d5dde4"/></svg>
<svg style="left:656.8px;top:17.6px" width="7" height="6" viewBox="0 0 7 6"><path d="M.5 5.3H6.5M1 4.5 Q2 1 5.8 1" fill="none" stroke="#aeb8c1" stroke-width=".9"/></svg>
<svg style="left:667px;top:17.5px" width="6" height="6" viewBox="0 0 6 6"><path d="M.8 .4L5.4 3L.8 5.6Z" fill="#13913f"/></svg>
<div style="left:676.8px;top:17.6px;width:5.6px;height:5.6px;background:#9f1f2c;border-radius:50%"></div>
<svg style="left:686.6px;top:17.6px" width="5" height="6" viewBox="0 0 5 6"><path d="M1.5 .5H3.5L4.6 5.5H.4Z" fill="none" stroke="#d5dde4" stroke-width=".8"/><path d="M2.5 4.5L3.8 1.2" stroke="#d5dde4" stroke-width=".6"/></svg>
<div style="left:694.2px;top:15.6px;width:19.6px;height:10px;background:#1278b2;border-radius:1px"></div>
<svg style="left:696px;top:17px" width="5" height="7" viewBox="0 0 5 7"><path d="M1.8 5.6V.6H4.4V1.8H2.4" fill="none" stroke="#d9f0ff" stroke-width=".8"/><ellipse cx="1.3" cy="5.7" rx="1.2" ry=".9" fill="#d9f0ff"/></svg>
<div style="left:703.2px;top:17px;width:0.8px;height:7px;background:#8fd4ff;"></div>
<div class="t" style="left:706px;top:20px;font-size:3.2px;color:#58b6ee;">=60</div>
<svg style="left:715.4px;top:17.4px" width="8" height="6" viewBox="0 0 8 6"><path d="M.3 2H1.8L4 .3V5.7L1.8 4H.3Z" fill="#e8eef3"/><path d="M5.2 1.6Q6.3 3 5.2 4.4" fill="none" stroke="#e8eef3" stroke-width=".7"/></svg>
<div style="left:726.4px;top:17.6px;width:0.8px;height:5.6px;background:#7e8a95;"></div>
<div style="left:731px;top:16.4px;width:8.6px;height:8.4px;background:#243545;border-radius:1px"></div>
<svg style="left:732.4px;top:18.2px" width="6" height="5" viewBox="0 0 6 5"><path d="M2.2 .5L.6 2L2.2 3.5M.8 2H4Q5.4 2 5.4 3.4V4.4" fill="none" stroke="#aeb8c1" stroke-width=".8"/></svg>
<svg style="left:742.4px;top:18.2px" width="6" height="5" viewBox="0 0 6 5"><path d="M3.8 .5L5.4 2L3.8 3.5M5.2 2H2Q.6 2 .6 3.4V4.4" fill="none" stroke="#55626e" stroke-width=".8"/></svg>
<svg style="left:752.2px;top:16.8px" width="8" height="8" viewBox="0 0 8 8"><circle cx="4" cy="4" r="3.2" fill="none" stroke="#d5dde4" stroke-width=".8"/></svg>
<div class="t" style="left:755.1px;top:19.2px;font-size:4.4px;color:#d5dde4;">?</div>
<div style="left:321px;top:27.2px;width:13.4px;height:394px;background:#182530;"></div>
<svg style="left:324.6px;top:30.6px" width="7" height="7" viewBox="0 0 7 7"><rect x=".4" y=".4" width="6.2" height="6.2" rx=".8" fill="none" stroke="#e3eaf0" stroke-width=".8"/><rect x=".8" y=".8" width="2.4" height="5.4" fill="#e3eaf0"/></svg>
<div style="left:322.6px;top:42.4px;width:9.6px;height:9.8px;background:#12a8f0;border-radius:1px"></div>
<svg style="left:325px;top:44.2px" width="5" height="7" viewBox="0 0 5 7"><path d="M.6 .4L4.4 4H2.6L3.6 6.2L2.8 6.6L1.8 4.4L.6 5.6Z" fill="#0b1c2a"/></svg>
<div class="t" style="left:323px;top:56px;width:9.4px;text-align:center;font-size:5.6px;color:#c9d3dc;font-family:'DejaVu Sans','Liberation Sans',sans-serif">Aa</div>
<div class="t" style="left:323px;top:67.4px;width:9.4px;text-align:center;font-size:5.6px;color:#c9d3dc;font-family:'DejaVu Sans','Liberation Sans',sans-serif">&#9835;</div>
<div class="t" style="left:323px;top:78.8px;width:9.4px;text-align:center;font-size:5.6px;color:#c9d3dc;font-family:'DejaVu Sans','Liberation Sans',sans-serif">&#9839;</div>
<div class="t" style="left:323px;top:90.2px;width:9.4px;text-align:center;font-size:5.6px;color:#c9d3dc;font-family:'DejaVu Sans','Liberation Sans',sans-serif">&#9834;</div>
<div class="t" style="left:323px;top:101.6px;width:9.4px;text-align:center;font-size:5.6px;color:#c9d3dc;font-family:'DejaVu Sans','Liberation Sans',sans-serif">&#9834;</div>
<div class="t" style="left:323px;top:113px;width:9.4px;text-align:center;font-size:5.6px;color:#c9d3dc;font-family:'DejaVu Sans','Liberation Sans',sans-serif">&#9837;</div>
<div class="t" style="left:323px;top:124.4px;width:9.4px;text-align:center;font-size:5.6px;color:#c9d3dc;font-family:'DejaVu Sans','Liberation Sans',sans-serif">f</div>
<div class="t" style="left:323px;top:135.8px;width:9.4px;text-align:center;font-size:5.6px;color:#c9d3dc;font-family:'DejaVu Sans','Liberation Sans',sans-serif">&#9833;</div>
<div class="t" style="left:323px;top:147.2px;width:9.4px;text-align:center;font-size:5.6px;color:#c9d3dc;font-family:'DejaVu Sans','Liberation Sans',sans-serif">&#9834;</div>
<div class="t" style="left:323px;top:158.6px;width:9.4px;text-align:center;font-size:5.6px;color:#c9d3dc;font-family:'DejaVu Sans','Liberation Sans',sans-serif">&#8943;</div>
<div class="t" style="left:323px;top:170px;width:9.4px;text-align:center;font-size:5.6px;color:#c9d3dc;font-family:'DejaVu Sans','Liberation Sans',sans-serif">&#9834;</div>
<div class="t" style="left:323px;top:181.4px;width:9.4px;text-align:center;font-size:5.6px;color:#c9d3dc;font-family:'DejaVu Sans','Liberation Sans',sans-serif">&#9585;</div>
<div class="t" style="left:323px;top:192.8px;width:9.4px;text-align:center;font-size:5.6px;color:#c9d3dc;font-family:'DejaVu Sans','Liberation Sans',sans-serif">+</div>
<div style="left:750.4px;top:27.2px;width:13.4px;height:394px;background:#182530;"></div>
<div style="left:752px;top:28.4px;width:11px;height:11.8px;background:#0f6c9e;border-radius:1px"></div>
<svg style="left:753.6px;top:30.6px" width="8" height="7" viewBox="0 0 8 7"><path d="M.6 4.6Q1 1 5 .6Q8 .8 7 3.4Q5.6 6.4 1.4 6.4Z" fill="#e9f6ff"/></svg>
<div style="left:753.6px;top:43.4px;width:7.6px;height:4px;background:#e3eaf0;border-radius:.6px"></div>
<div style="left:761.6px;top:41.6px;width:1.8px;height:2.6px;background:#d43a3a;border-radius:.4px"></div>
<div class="t" style="left:752.4px;top:54px;width:9.6px;text-align:center;font-size:5.8px;color:#dfe6ec;font-family:'DejaVu Sans','Liberation Sans',sans-serif">&#9837;</div>
<div class="t" style="left:752.4px;top:65.35px;width:9.6px;text-align:center;font-size:5.8px;color:#dfe6ec;font-family:'DejaVu Sans','Liberation Sans',sans-serif">&#9835;</div>
<div class="t" style="left:752.4px;top:76.7px;width:9.6px;text-align:center;font-size:5.8px;color:#dfe6ec;font-family:'DejaVu Sans','Liberation Sans',sans-serif">&#9839;</div>
<div class="t" style="left:752.4px;top:88.05px;width:9.6px;text-align:center;font-size:5.8px;color:#dfe6ec;font-family:'DejaVu Sans','Liberation Sans',sans-serif">&#9834;</div>
<div class="t" style="left:752.4px;top:99.4px;width:9.6px;text-align:center;font-size:5.8px;color:#dfe6ec;font-family:'DejaVu Sans','Liberation Sans',sans-serif">f</div>
<div class="t" style="left:752.4px;top:110.75px;width:9.6px;text-align:center;font-size:5.8px;color:#dfe6ec;font-family:'DejaVu Sans','Liberation Sans',sans-serif">&#9733;</div>
<div class="t" style="left:752.4px;top:122.1px;width:9.6px;text-align:center;font-size:5.8px;color:#dfe6ec;font-family:'DejaVu Sans','Liberation Sans',sans-serif">&#9776;</div>
<div class="t" style="left:752.4px;top:133.45px;width:9.6px;text-align:center;font-size:5.8px;color:#dfe6ec;font-family:'DejaVu Sans','Liberation Sans',sans-serif">&#9646;</div>
<div class="t" style="left:752.4px;top:144.8px;width:9.6px;text-align:center;font-size:5.8px;color:#dfe6ec;font-family:'DejaVu Sans','Liberation Sans',sans-serif">&#8978;</div>
<div class="t" style="left:752.4px;top:156.15px;width:9.6px;text-align:center;font-size:5.8px;color:#dfe6ec;font-family:'DejaVu Sans','Liberation Sans',sans-serif">&#9835;</div>
<div class="t" style="left:752.4px;top:167.5px;width:9.6px;text-align:center;font-size:5.8px;color:#dfe6ec;font-family:'DejaVu Sans','Liberation Sans',sans-serif">&#9585;</div>
<div class="t" style="left:752.4px;top:178.85px;width:9.6px;text-align:center;font-size:5.8px;color:#dfe6ec;font-family:'DejaVu Sans','Liberation Sans',sans-serif">&#9834;</div>
<div class="t" style="left:752.4px;top:190.2px;width:9.6px;text-align:center;font-size:5.8px;color:#dfe6ec;font-family:'DejaVu Sans','Liberation Sans',sans-serif">&#9644;</div>
<div class="t" style="left:752.4px;top:201.55px;width:9.6px;text-align:center;font-size:5.8px;color:#dfe6ec;font-family:'DejaVu Sans','Liberation Sans',sans-serif">&#9645;</div>
<div class="t" style="left:752.4px;top:212.9px;width:9.6px;text-align:center;font-size:5.8px;color:#dfe6ec;font-family:'DejaVu Sans','Liberation Sans',sans-serif">&#9783;</div>
<div style="left:334.4px;top:27.2px;width:416px;height:235px;background:#ffffff;border-top:.7px solid #222"></div>
<svg style="left:334px;top:27px" width="416" height="235" viewBox="334 27 416 235"><rect x="577" y="53.6" width="168.8" height="10" fill="#e4e4e4"/><path d="M577 53.6H745.8" stroke="#8c8c8c" stroke-width=".42"/><path d="M577 56.1H745.8" stroke="#8c8c8c" stroke-width=".42"/><path d="M577 58.6H745.8" stroke="#8c8c8c" stroke-width=".42"/><path d="M577 61.1H745.8" stroke="#8c8c8c" stroke-width=".42"/><path d="M577 63.6H745.8" stroke="#8c8c8c" stroke-width=".42"/><text x="572.4" y="59" font-size="5.3" fill="#111" text-anchor="end" font-weight="normal" font-family="Liberation Serif,serif"  stroke="#111" stroke-width=".12">Woodwind</text><g transform="translate(580.6 53.6) scale(1)"><path d="M.4 12.6Q-1.6 13 -1.4 11.4Q-.9 10.4 .1 11M.4 12.6Q1.4 12 1 9.6L-.6 -1.2Q-.9 -3.6 .7 -4.4Q1.6 -2.4 .2 -.2Q-3 2.8 -2.6 5.6Q-2 8.4 .8 8.2Q3 7.6 2.6 5.6Q2 3.8 .2 4.2Q-1.2 4.8 -.8 6.2" fill="none" stroke="#111" stroke-width=".95" stroke-linecap="round"/><circle cx="-.7" cy="11.6" r=".9" fill="#111"/></g><text x="586.4" y="58.5" font-size="6.8" font-weight="bold" fill="#111" stroke="#111" stroke-width=".35" font-family="Liberation Serif,serif">3</text><text x="586.4" y="63.5" font-size="6.8" font-weight="bold" fill="#111" stroke="#111" stroke-width=".35" font-family="Liberation Serif,serif">4</text><path d="M585.4 63V151.5" stroke="#8a8a8a" stroke-width="0.5"/><text x="595.4" y="52.1" font-size="3.6" fill="#111" font-family="DejaVu Sans,sans-serif" text-anchor="middle">&#9839;</text><text x="595" y="56.9" font-size="4" fill="#111" font-family="DejaVu Sans,sans-serif" text-anchor="middle">&#9837;</text><ellipse cx="599.6" cy="48.4" rx="1.5" ry="1.1" fill="#111" transform="rotate(-20 599.6 48.4)"/><ellipse cx="599.6" cy="50.8" rx="1.5" ry="1.1" fill="#111" transform="rotate(-20 599.6 50.8)"/><ellipse cx="599.6" cy="53.4" rx="1.5" ry="1.1" fill="#111" transform="rotate(-20 599.6 53.4)"/><ellipse cx="599.6" cy="56" rx="1.5" ry="1.1" fill="#111" transform="rotate(-20 599.6 56)"/><ellipse cx="599.6" cy="58.4" rx="1.5" ry="1.1" fill="#111" transform="rotate(-20 599.6 58.4)"/><ellipse cx="602.2" cy="49.6" rx="1.5" ry="1.1" fill="#111" transform="rotate(-20 602.2 49.6)"/><path d="M598.4 42.4V68" stroke="#111" stroke-width="0.5"/><path d="M597 50.5H603" stroke="#111" stroke-width="0.4"/><path d="M597 48H603" stroke="#111" stroke-width="0.4"/><path d="M600 45.6Q606.2 41.4 612.4 43.6Q606.2 40.5 600 45.6Z" fill="#333" stroke="#333" stroke-width="0.28"/><ellipse cx="610.8" cy="51.2" rx="1.5" ry="1.1" fill="#111" transform="rotate(-20 610.8 51.2)"/><path d="M612.1 51.2V41.4" stroke="#111" stroke-width="0.5"/><path d="M612.1 41.4Q612.5 43.4 614.3 44.6Q614.7 46 613.9 47" fill="none" stroke="#111" stroke-width=".7"/><ellipse cx="610.8" cy="48.6" rx="1.5" ry="1.1" fill="#111" transform="rotate(-20 610.8 48.6)"/><path d="M608.6 50.5H613.2" stroke="#111" stroke-width="0.4"/><circle cx="622.4" cy="49" r=".7" fill="#111"/><path d="M622.4 49.5Q623.4 49.7 624 48.6L623 52.4" fill="none" stroke="#111" stroke-width=".6"/><path d="M630.4 47L631.8 48.7L630.5 50L631.8 51.4Q630.1 51 631.1 52.5" fill="none" stroke="#111" stroke-width=".85"/><path d="M602.4 57.8Q626.7 60.2 651 57.8Q626.7 62.6 602.4 57.8Z" fill="#333" stroke="#333" stroke-width="0.28"/><path d="M602.4 60.8Q626.7 63.4 651 60.8Q626.7 65.8 602.4 60.8Z" fill="#333" stroke="#333" stroke-width="0.28"/><text x="595.8" y="72.4" font-size="6.6" fill="#111" text-anchor="start" font-weight="bold" font-family="Liberation Serif,serif" font-style="italic" stroke="#111" stroke-width=".3">mf</text><path d="M652.2 53.6V63.6" stroke="#111" stroke-width="0.6"/><ellipse cx="659.2" cy="47.6" rx="1.5" ry="1.1" fill="#111" transform="rotate(-20 659.2 47.6)"/><ellipse cx="659.2" cy="50" rx="1.5" ry="1.1" fill="#111" transform="rotate(-20 659.2 50)"/><ellipse cx="659.2" cy="52.6" rx="1.5" ry="1.1" fill="#111" transform="rotate(-20 659.2 52.6)"/><ellipse cx="659.2" cy="56.6" rx="1.5" ry="1.1" fill="#111" transform="rotate(-20 659.2 56.6)"/><ellipse cx="659.2" cy="59.4" rx="1.5" ry="1.1" fill="#111" transform="rotate(-20 659.2 59.4)"/><path d="M657.9 47.6V66" stroke="#777" stroke-width="0.5"/><path d="M656.8 51H661.8" stroke="#111" stroke-width="0.4"/><path d="M656.8 48.6H661.8" stroke="#111" stroke-width="0.4"/><text x="658.6" y="40.6" font-size="3.6" fill="#555" text-anchor="start" font-weight="normal" font-family="Liberation Serif,serif"  stroke="#555" stroke-width=".12">&gt;</text><path d="M654 58.4Q656.5 59.8 659 58.4Q656.5 60.7 654 58.4Z" fill="#444" stroke="#444" stroke-width="0.28"/><path d="M680.8 58V67" stroke="#888" stroke-width="0.5"/><path d="M682 54.4V62" stroke="#222" stroke-width="1.9"/><path d="M683.4 58Q701 60.2 718.6 58Q701 62.6 683.4 58Z" fill="#333" stroke="#333" stroke-width="0.28"/><path d="M683.4 61Q701 63.4 718.6 61Q701 65.8 683.4 61Z" fill="#333" stroke="#333" stroke-width="0.28"/><rect x="703.8" y="47.4" width="2.4" height="6" fill="#111"/><path d="M705 41V48" stroke="#111" stroke-width="0.6"/><path d="M702.6 40.8H707" stroke="#666" stroke-width="0.7"/><path d="M718.4 53.6V63.6" stroke="#111" stroke-width="0.6"/><text x="720" y="58.5" font-size="6.8" font-weight="bold" fill="#111" stroke="#111" stroke-width=".35" font-family="Liberation Serif,serif">3</text><text x="720" y="63.5" font-size="6.8" font-weight="bold" fill="#111" stroke="#111" stroke-width=".35" font-family="Liberation Serif,serif">4</text><path d="M726.9 58V66.4" stroke="#888" stroke-width="0.5"/><path d="M728 54.4V62" stroke="#222" stroke-width="1.8"/><path d="M744.8 53.6V63.6" stroke="#111" stroke-width="1.1"/><rect x="354" y="112.1" width="372" height="10" fill="#e4e4e4"/><path d="M354 112.1H726" stroke="#8c8c8c" stroke-width=".42"/><path d="M354 114.6H726" stroke="#8c8c8c" stroke-width=".42"/><path d="M354 117.1H726" stroke="#8c8c8c" stroke-width=".42"/><path d="M354 119.6H726" stroke="#8c8c8c" stroke-width=".42"/><path d="M354 122.1H726" stroke="#8c8c8c" stroke-width=".42"/><rect x="354" y="141" width="123.1" height="9.2" fill="#e4e4e4"/><path d="M354 141H477.1" stroke="#8c8c8c" stroke-width=".42"/><path d="M354 143.3H477.1" stroke="#8c8c8c" stroke-width=".42"/><path d="M354 145.6H477.1" stroke="#8c8c8c" stroke-width=".42"/><path d="M354 147.9H477.1" stroke="#8c8c8c" stroke-width=".42"/><path d="M354 150.2H477.1" stroke="#8c8c8c" stroke-width=".42"/><rect x="510" y="141" width="82.6" height="9.2" fill="#e4e4e4"/><path d="M510 141H592.6" stroke="#8c8c8c" stroke-width=".42"/><path d="M510 143.3H592.6" stroke="#8c8c8c" stroke-width=".42"/><path d="M510 145.6H592.6" stroke="#8c8c8c" stroke-width=".42"/><path d="M510 147.9H592.6" stroke="#8c8c8c" stroke-width=".42"/><path d="M510 150.2H592.6" stroke="#8c8c8c" stroke-width=".42"/><rect x="651.4" y="141" width="94" height="9.2" fill="#e4e4e4"/><path d="M651.4 141H745.4" stroke="#8c8c8c" stroke-width=".42"/><path d="M651.4 143.3H745.4" stroke="#8c8c8c" stroke-width=".42"/><path d="M651.4 145.6H745.4" stroke="#8c8c8c" stroke-width=".42"/><path d="M651.4 147.9H745.4" stroke="#8c8c8c" stroke-width=".42"/><path d="M651.4 150.2H745.4" stroke="#8c8c8c" stroke-width=".42"/><path d="M353 112.1Q349.6 120 351.6 129Q352.6 132 350.6 131.05Q352.6 129.9 351.6 133.9Q349.6 141.9 353 150.20000000000002" fill="none" stroke="#222" stroke-width="1"/><path d="M354.2 112.1V150.2" stroke="#111" stroke-width="0.6"/><text x="385" y="103.5" font-size="4.6" fill="#111" text-anchor="start" font-weight="normal" font-family="Liberation Serif,serif"  stroke="#111" stroke-width=".12">Vln.</text><text x="385" y="109.5" font-size="4.6" fill="#111" text-anchor="start" font-weight="normal" font-family="Liberation Serif,serif"  stroke="#111" stroke-width=".12">Vln.</text><text x="350.4" y="157.2" font-size="4.8" fill="#111" text-anchor="start" font-weight="normal" font-family="Liberation Serif,serif"  stroke="#111" stroke-width=".12">2 Bsn.</text><text x="350.4" y="162.8" font-size="4.8" fill="#111" text-anchor="start" font-weight="normal" font-family="Liberation Serif,serif"  stroke="#111" stroke-width=".12">Contra</text><text x="350.4" y="168.4" font-size="4.8" fill="#111" text-anchor="start" font-weight="normal" font-family="Liberation Serif,serif"  stroke="#111" stroke-width=".12">2 Tbn.</text><text x="350.4" y="174" font-size="4.8" fill="#111" text-anchor="start" font-weight="normal" font-family="Liberation Serif,serif"  stroke="#111" stroke-width=".12">Tuba</text><g transform="translate(358.2 112.1) scale(1)"><path d="M.4 12.6Q-1.6 13 -1.4 11.4Q-.9 10.4 .1 11M.4 12.6Q1.4 12 1 9.6L-.6 -1.2Q-.9 -3.6 .7 -4.4Q1.6 -2.4 .2 -.2Q-3 2.8 -2.6 5.6Q-2 8.4 .8 8.2Q3 7.6 2.6 5.6Q2 3.8 .2 4.2Q-1.2 4.8 -.8 6.2" fill="none" stroke="#111" stroke-width=".95" stroke-linecap="round"/><circle cx="-.7" cy="11.6" r=".9" fill="#111"/></g><text x="364.6" y="117" font-size="6.8" font-weight="bold" fill="#111" stroke="#111" stroke-width=".35" font-family="Liberation Serif,serif">3</text><text x="364.6" y="122" font-size="6.8" font-weight="bold" fill="#111" stroke="#111" stroke-width=".35" font-family="Liberation Serif,serif">4</text><g transform="translate(357.6 141) scale(0.92)"><path d="M-2 3.4Q-2.2 .4 .6 .2Q3.2 .4 3 3.4Q2.6 6.8 -2.2 9" fill="none" stroke="#111" stroke-width="1.1" stroke-linecap="round"/><circle cx="-1.4" cy="3.2" r="1.1" fill="#111"/><circle cx="4.6" cy="1.6" r=".65" fill="#111"/><circle cx="4.6" cy="4.4" r=".65" fill="#111"/></g><text x="364.6" y="145.508" font-size="6.256" font-weight="bold" fill="#111" stroke="#111" stroke-width=".35" font-family="Liberation Serif,serif">3</text><text x="364.6" y="150.108" font-size="6.256" font-weight="bold" fill="#111" stroke="#111" stroke-width=".35" font-family="Liberation Serif,serif">4</text><path d="M372.8 114.4L374.2 116.1L372.9 117.4L374.2 118.8Q372.5 118.4 373.5 119.9" fill="none" stroke="#111" stroke-width=".85"/><path d="M379.6 114.4L381 116.1L379.7 117.4L381 118.8Q379.3 118.4 380.3 119.9" fill="none" stroke="#111" stroke-width=".85"/><path d="M385.4 124.4H391.6" stroke="#111" stroke-width="0.45"/><path d="M400 124.4H406.2" stroke="#111" stroke-width="0.45"/><text x="385.2" y="124.3" font-size="3.6" fill="#111" font-family="DejaVu Sans,sans-serif" text-anchor="middle">&#9839;</text><text x="385.2" y="127.9" font-size="3.6" fill="#111" font-family="DejaVu Sans,sans-serif" text-anchor="middle">&#9839;</text><ellipse cx="388.4" cy="122.9" rx="1.5" ry="1.1" fill="#111" transform="rotate(-20 388.4 122.9)"/><ellipse cx="388.4" cy="126.1" rx="1.5" ry="1.1" fill="#111" transform="rotate(-20 388.4 126.1)"/><path d="M389.7 113.4V126" stroke="#111" stroke-width="0.5"/><ellipse cx="403" cy="122.9" rx="1.5" ry="1.1" fill="#111" transform="rotate(-20 403 122.9)"/><ellipse cx="403" cy="126.1" rx="1.5" ry="1.1" fill="#111" transform="rotate(-20 403 126.1)"/><path d="M404.3 113.4V126" stroke="#111" stroke-width="0.5"/><circle cx="406.6" cy="122.4" r="0.45" fill="#111"/><circle cx="406.6" cy="125.6" r="0.45" fill="#111"/><path d="M390.4 121Q396 118.8 401.6 121Q396 117.9 390.4 121Z" fill="#333" stroke="#333" stroke-width="0.28"/><path d="M390.4 127.2Q396 129.6 401.6 127.2Q396 130.5 390.4 127.2Z" fill="#333" stroke="#333" stroke-width="0.28"/><text x="383.2" y="134.9" font-size="6.8" fill="#111" text-anchor="start" font-weight="bold" font-family="Liberation Serif,serif" font-style="italic" stroke="#111" stroke-width=".3">mf</text><ellipse cx="374.4" cy="141.7" rx="1.5" ry="1.1" fill="#111" transform="rotate(-20 374.4 141.7)"/><ellipse cx="374.4" cy="145.9" rx="1.5" ry="1.1" fill="#111" transform="rotate(-20 374.4 145.9)"/><ellipse cx="374.4" cy="155.7" rx="1.5" ry="1.1" fill="#111" transform="rotate(-20 374.4 155.7)"/><path d="M373.1 141.7V157.7" stroke="#777" stroke-width="0.5"/><path d="M372 153.1H376.8" stroke="#111" stroke-width="0.4"/><path d="M372 155.7H376.8" stroke="#111" stroke-width="0.4"/><text x="373" y="161.5" font-size="3.4" fill="#222" text-anchor="start" font-weight="normal" font-family="Liberation Serif,serif"  stroke="#222" stroke-width=".12">&gt;</text><ellipse cx="402.2" cy="141.7" rx="1.5" ry="1.1" fill="#111" transform="rotate(-20 402.2 141.7)"/><ellipse cx="402.2" cy="145.9" rx="1.5" ry="1.1" fill="#111" transform="rotate(-20 402.2 145.9)"/><ellipse cx="402.2" cy="155.7" rx="1.5" ry="1.1" fill="#111" transform="rotate(-20 402.2 155.7)"/><path d="M400.9 141.7V157.7" stroke="#777" stroke-width="0.5"/><path d="M399.8 153.1H404.6" stroke="#111" stroke-width="0.4"/><path d="M399.8 155.7H404.6" stroke="#111" stroke-width="0.4"/><text x="400.8" y="161.5" font-size="3.4" fill="#222" text-anchor="start" font-weight="normal" font-family="Liberation Serif,serif"  stroke="#222" stroke-width=".12">&gt;</text><path d="M376 140.5Q388.4 137.5 400.8 140.5Q388.4 136.6 376 140.5Z" fill="#333" stroke="#333" stroke-width="0.28"/><path d="M376 146.3Q388.4 148.7 400.8 146.3Q388.4 149.6 376 146.3Z" fill="#333" stroke="#333" stroke-width="0.28"/><path d="M376 156.7Q388.4 159.7 400.8 156.7Q388.4 160.6 376 156.7Z" fill="#333" stroke="#333" stroke-width="0.28"/><text x="371" y="168.3" font-size="5.6" fill="#111" text-anchor="start" font-weight="bold" font-family="Liberation Serif,serif" font-style="italic" stroke="#111" stroke-width=".3">sffz</text><path d="M411.6 112.1V150.2" stroke="#111" stroke-width="0.6"/><path d="M411.6 150.2V243.1" stroke="#666" stroke-width="0.5" stroke-dasharray="0.7 0.7"/><text x="413.4" y="117" font-size="6.8" font-weight="bold" fill="#111" stroke="#111" stroke-width=".35" font-family="Liberation Serif,serif">3</text><text x="413.4" y="122" font-size="6.8" font-weight="bold" fill="#111" stroke="#111" stroke-width=".35" font-family="Liberation Serif,serif">4</text><text x="413.4" y="145.508" font-size="6.256" font-weight="bold" fill="#111" stroke="#111" stroke-width=".35" font-family="Liberation Serif,serif">3</text><text x="413.4" y="150.108" font-size="6.256" font-weight="bold" fill="#111" stroke="#111" stroke-width=".35" font-family="Liberation Serif,serif">4</text><path d="M419 124.4H425.2" stroke="#111" stroke-width="0.45"/><text x="418.4" y="124.3" font-size="3.6" fill="#111" font-family="DejaVu Sans,sans-serif" text-anchor="middle">&#9839;</text><text x="418.4" y="127.9" font-size="3.6" fill="#111" font-family="DejaVu Sans,sans-serif" text-anchor="middle">&#9839;</text><ellipse cx="422" cy="122.9" rx="1.5" ry="1.1" fill="#111" transform="rotate(-20 422 122.9)"/><ellipse cx="422" cy="126.4" rx="1.5" ry="1.1" fill="#111" transform="rotate(-20 422 126.4)"/><path d="M423.3 115.4V126.4" stroke="#111" stroke-width="0.5"/><circle cx="425.8" cy="122.4" r="0.45" fill="#111"/><circle cx="425.8" cy="125.8" r="0.45" fill="#111"/><path d="M423.3 115.2L438.6 118V119.5L423.3 116.7Z" fill="#111"/><text x="430.8" y="124.7" font-size="3.6" fill="#111" font-family="DejaVu Sans,sans-serif" text-anchor="middle">&#9839;</text><ellipse cx="434" cy="123.6" rx="1.5" ry="1.1" fill="#111" transform="rotate(-20 434 123.6)"/><path d="M435.3 117.2V123.6" stroke="#111" stroke-width="0.5"/><ellipse cx="437.4" cy="125.6" rx="1.5" ry="1.1" fill="#111" transform="rotate(-20 437.4 125.6)"/><ellipse cx="437.4" cy="122.6" rx="1.5" ry="1.1" fill="#111" transform="rotate(-20 437.4 122.6)"/><path d="M438.6 118V125.6" stroke="#111" stroke-width="0.5"/><path d="M431.6 124.4H440.2" stroke="#111" stroke-width="0.45"/><text x="442.6" y="122.1" font-size="3.6" fill="#111" font-family="DejaVu Sans,sans-serif" text-anchor="middle">&#9839;</text><ellipse cx="446.6" cy="117.2" rx="1.7" ry="1.3" fill="#111" transform="rotate(-20 446.6 117.2)"/><ellipse cx="446.6" cy="120.2" rx="1.7" ry="1.3" fill="#111" transform="rotate(-20 446.6 120.2)"/><ellipse cx="446.6" cy="123.2" rx="1.7" ry="1.3" fill="#111" transform="rotate(-20 446.6 123.2)"/><path d="M447.9 112.4V123.2" stroke="#111" stroke-width="0.5"/><path d="M459.2 114L460.6 115.7L459.3 117L460.6 118.4Q458.9 118 459.9 119.5" fill="none" stroke="#111" stroke-width=".85"/><ellipse cx="471" cy="112" rx="1.5" ry="1.1" fill="#111" transform="rotate(-20 471 112)"/><ellipse cx="471" cy="119.8" rx="1.5" ry="1.1" fill="#111" transform="rotate(-20 471 119.8)"/><path d="M469.7 112V126" stroke="#111" stroke-width="0.5"/><text x="422" y="135.4" font-size="7" fill="#111" text-anchor="start" font-weight="bold" font-family="Liberation Serif,serif" font-style="italic" stroke="#111" stroke-width=".3">f</text><text x="418" y="149.2" font-size="3.8" fill="#111" font-family="DejaVu Sans,sans-serif" text-anchor="middle">&#9837;</text><ellipse cx="421.6" cy="147.9" rx="1.7" ry="1.1" fill="none" stroke="#111" stroke-width=".7" transform="rotate(-20 421.6 147.9)"/><text x="418" y="157.2" font-size="3.8" fill="#111" font-family="DejaVu Sans,sans-serif" text-anchor="middle">&#9837;</text><ellipse cx="421.6" cy="155.9" rx="1.7" ry="1.1" fill="none" stroke="#111" stroke-width=".7" transform="rotate(-20 421.6 155.9)"/><path d="M418.6 153.1H424.6" stroke="#111" stroke-width="0.4"/><path d="M418.6 155.7H424.6" stroke="#111" stroke-width="0.4"/><path d="M476.9 112.1V150.2" stroke="#111" stroke-width="0.6"/><rect x="479.4" y="112.5" width="3.4" height="1.5" fill="#111"/><path d="M480.4 122.8L481.8 124.5L480.5 125.8L481.8 127.2Q480.1 126.8 481.1 128.3" fill="none" stroke="#111" stroke-width=".85"/><text x="483.6" y="126.5" font-size="3.8" fill="#111" font-family="DejaVu Sans,sans-serif" text-anchor="middle">&#9837;</text><ellipse cx="487" cy="125.4" rx="1.6" ry="1.2" fill="#111" transform="rotate(-20 487 125.4)"/><path d="M485.7 125.4V130" stroke="#111" stroke-width="0.5"/><path d="M484.6 124.4H489.6" stroke="#111" stroke-width="0.45"/><text x="488.6" y="115.5" font-size="3.4" fill="#111" font-family="DejaVu Sans,sans-serif" text-anchor="middle">&#9839;</text><text x="488.6" y="120.5" font-size="3.4" fill="#111" font-family="DejaVu Sans,sans-serif" text-anchor="middle">&#9839;</text><ellipse cx="491.8" cy="111.6" rx="1.6" ry="1.2" fill="#111" transform="rotate(-20 491.8 111.6)"/><ellipse cx="491.8" cy="114.2" rx="1.6" ry="1.2" fill="#111" transform="rotate(-20 491.8 114.2)"/><ellipse cx="491.8" cy="116.8" rx="1.6" ry="1.2" fill="#111" transform="rotate(-20 491.8 116.8)"/><ellipse cx="491.8" cy="119.4" rx="1.6" ry="1.2" fill="#111" transform="rotate(-20 491.8 119.4)"/><ellipse cx="491.8" cy="122" rx="1.6" ry="1.2" fill="#111" transform="rotate(-20 491.8 122)"/><ellipse cx="489.6" cy="116.6" rx="1.4" ry="1.1" fill="#111" transform="rotate(-20 489.6 116.6)"/><path d="M493.1 105V122" stroke="#111" stroke-width="0.5"/><path d="M493.1 105L495.2 110" stroke="#111" stroke-width="1.3" stroke-linecap="round"/><path d="M493.1 102.6V105" stroke="#111" stroke-width=".5"/><circle cx="492.4" cy="101.4" r="0.7" fill="#111"/><text x="497.8" y="113.9" font-size="3.4" fill="#111" font-family="DejaVu Sans,sans-serif" text-anchor="middle">&#9839;</text><text x="497.8" y="118.9" font-size="3.4" fill="#111" font-family="DejaVu Sans,sans-serif" text-anchor="middle">&#9839;</text><ellipse cx="501" cy="110" rx="1.6" ry="1.2" fill="#111" transform="rotate(-20 501 110)"/><ellipse cx="501" cy="112.6" rx="1.6" ry="1.2" fill="#111" transform="rotate(-20 501 112.6)"/><ellipse cx="501" cy="115.2" rx="1.6" ry="1.2" fill="#111" transform="rotate(-20 501 115.2)"/><ellipse cx="501" cy="117.8" rx="1.6" ry="1.2" fill="#111" transform="rotate(-20 501 117.8)"/><ellipse cx="501" cy="120.4" rx="1.6" ry="1.2" fill="#111" transform="rotate(-20 501 120.4)"/><ellipse cx="498.8" cy="115" rx="1.4" ry="1.1" fill="#111" transform="rotate(-20 498.8 115)"/><path d="M502.3 103.4V120.4" stroke="#111" stroke-width="0.5"/><path d="M502.3 103.4L504.4 108.4" stroke="#111" stroke-width="1.3" stroke-linecap="round"/><path d="M502.3 101V103.4" stroke="#111" stroke-width=".5"/><circle cx="501.6" cy="99.8" r="0.7" fill="#111"/><circle cx="495.2" cy="114.4" r="0.45" fill="#111"/><circle cx="495.2" cy="119.4" r="0.45" fill="#111"/><circle cx="504.6" cy="113" r="0.45" fill="#111"/><circle cx="504.6" cy="118" r="0.45" fill="#111"/><circle cx="506" cy="113.6" r=".7" fill="#111"/><path d="M506 114.1Q507 114.3 507.6 113.2L506.6 117" fill="none" stroke="#111" stroke-width=".6"/><text x="484.4" y="136.6" font-size="6.4" fill="#111" text-anchor="start" font-weight="bold" font-family="Liberation Serif,serif" font-style="italic" stroke="#111" stroke-width=".3">mp</text><path d="M493.6 134L525.4 132.4M493.6 134L525.4 136" stroke="#333" stroke-width=".5" fill="none"/><path d="M488.8 127.4Q503.4 130.5 518 127.6Q503.4 131.4 488.8 127.4Z" fill="#333" stroke="#333" stroke-width="0.28"/><path d="M510 112.1V150.2" stroke="#111" stroke-width="0.6"/><text x="511.4" y="117" font-size="6.8" font-weight="bold" fill="#111" stroke="#111" stroke-width=".35" font-family="Liberation Serif,serif">3</text><text x="511.4" y="122" font-size="6.8" font-weight="bold" fill="#111" stroke="#111" stroke-width=".35" font-family="Liberation Serif,serif">4</text><text x="511.4" y="145.508" font-size="6.256" font-weight="bold" fill="#111" stroke="#111" stroke-width=".35" font-family="Liberation Serif,serif">3</text><text x="511.4" y="150.108" font-size="6.256" font-weight="bold" fill="#111" stroke="#111" stroke-width=".35" font-family="Liberation Serif,serif">4</text><rect x="512" y="112.1" width="73" height="10" fill="rgba(175,215,245,.2)"/><ellipse cx="520.4" cy="125.4" rx="1.5" ry="1.1" fill="#111" transform="rotate(-20 520.4 125.4)"/><path d="M519.1 125.4V130.7" stroke="#111" stroke-width="0.5"/><path d="M518 124.4H523" stroke="#111" stroke-width="0.45"/><path d="M525.8 122.5L527.2 124.2L525.9 125.5L527.2 126.9Q525.5 126.5 526.5 128" fill="none" stroke="#111" stroke-width=".85"/><text x="533" y="104" font-size="4.4" fill="#ff8c14" text-anchor="start" font-weight="normal" font-family="Liberation Serif,serif"  stroke="#ff8c14" stroke-width=".12">Tpt.</text><text x="533" y="109.4" font-size="4.4" fill="#ff8c14" text-anchor="start" font-weight="normal" font-family="Liberation Serif,serif"  stroke="#ff8c14" stroke-width=".12">Hn.</text><rect x="527" y="107" width="2.4" height="1.9" fill="#2f5fd0"/><ellipse cx="527.6" cy="115.3" rx="1.5" ry="1.1" fill="#ff8c14" transform="rotate(-20 527.6 115.3)"/><path d="M528.6 109.7Q529 111.7 530.8 112.9Q531.2 114.3 530.4 115.3" fill="none" stroke="#ff8c14" stroke-width=".7"/><path d="M528.8 109.7V115.3" stroke="#ff8c14" stroke-width="0.5"/><ellipse cx="532.6" cy="118.3" rx="1.6" ry="1.2" fill="#ff8c14" transform="rotate(-20 532.6 118.3)"/><ellipse cx="532.6" cy="122.9" rx="1.6" ry="1.2" fill="#ff8c14" transform="rotate(-20 532.6 122.9)"/><text x="530.4" y="119.2" font-size="3" fill="#ff8c14" font-family="DejaVu Sans,sans-serif" text-anchor="middle">&#9837;</text><path d="M531.3 118.7V133.8" stroke="#666" stroke-width="0.5"/><ellipse cx="536.6" cy="119.5" rx="1.6" ry="1.2" fill="#ff8c14" transform="rotate(-20 536.6 119.5)"/><ellipse cx="536.6" cy="121.9" rx="1.6" ry="1.2" fill="#ff8c14" transform="rotate(-20 536.6 121.9)"/><text x="534.4" y="120.2" font-size="3" fill="#ff8c14" font-family="DejaVu Sans,sans-serif" text-anchor="middle">&#9837;</text><path d="M535.3 118.7V133.8" stroke="#666" stroke-width="0.5"/><ellipse cx="540.6" cy="118.3" rx="1.6" ry="1.2" fill="#ff8c14" transform="rotate(-20 540.6 118.3)"/><ellipse cx="540.6" cy="122.9" rx="1.6" ry="1.2" fill="#ff8c14" transform="rotate(-20 540.6 122.9)"/><text x="538.4" y="119.2" font-size="3" fill="#ff8c14" font-family="DejaVu Sans,sans-serif" text-anchor="middle">&#9837;</text><path d="M539.3 118.7V133.8" stroke="#666" stroke-width="0.5"/><ellipse cx="544.6" cy="119.5" rx="1.6" ry="1.2" fill="#ff8c14" transform="rotate(-20 544.6 119.5)"/><ellipse cx="544.6" cy="121.9" rx="1.6" ry="1.2" fill="#ff8c14" transform="rotate(-20 544.6 121.9)"/><text x="542.4" y="120.2" font-size="3" fill="#ff8c14" font-family="DejaVu Sans,sans-serif" text-anchor="middle">&#9837;</text><path d="M543.3 118.7V133.8" stroke="#666" stroke-width="0.5"/><path d="M531.3 133.05L545 133.05V134.35L531.3 134.35Z" fill="#222"/><path d="M531.3 134.55L545 134.55V135.55L531.3 135.55Z" fill="#222"/><text x="536.4" y="138.7" font-size="3.8" fill="#ff8c14" text-anchor="start" font-weight="normal" font-family="Liberation Serif,serif"  stroke="#ff8c14" stroke-width=".12">&gt;</text><text x="562" y="135.6" font-size="3.8" fill="#ff8c14" text-anchor="start" font-weight="normal" font-family="Liberation Serif,serif"  stroke="#ff8c14" stroke-width=".12">&gt;</text><text x="575.4" y="133.2" font-size="3.8" fill="#ff8c14" text-anchor="start" font-weight="normal" font-family="Liberation Serif,serif"  stroke="#ff8c14" stroke-width=".12">&gt;</text><path d="M549.4 150.7V206.5" stroke="#555" stroke-width="0.5" stroke-dasharray="0.7 0.7"/><path d="M549.4 112.1V122.1" stroke="#111" stroke-width="0.6"/><path d="M549.4 141V150.2" stroke="#111" stroke-width="0.6"/><text x="550.6" y="117" font-size="6.8" font-weight="bold" fill="#222" stroke="#222" stroke-width=".35" font-family="Liberation Serif,serif">3</text><text x="550.6" y="122" font-size="6.8" font-weight="bold" fill="#222" stroke="#222" stroke-width=".35" font-family="Liberation Serif,serif">4</text><text x="550.6" y="145.508" font-size="6.256" font-weight="bold" fill="#111" stroke="#111" stroke-width=".35" font-family="Liberation Serif,serif">3</text><text x="550.6" y="150.108" font-size="6.256" font-weight="bold" fill="#111" stroke="#111" stroke-width=".35" font-family="Liberation Serif,serif">4</text><text x="563" y="107" font-size="4.4" fill="#ff8c14" text-anchor="start" font-weight="normal" font-family="Liberation Serif,serif"  stroke="#ff8c14" stroke-width=".12">Hn.</text><ellipse cx="558.6" cy="118.9" rx="1.6" ry="1.2" fill="#ff8c14" transform="rotate(-20 558.6 118.9)"/><ellipse cx="558.6" cy="122.7" rx="1.6" ry="1.2" fill="#ff8c14" transform="rotate(-20 558.6 122.7)"/><text x="556.6" y="119.8" font-size="3" fill="#ff8c14" font-family="DejaVu Sans,sans-serif" text-anchor="middle">&#9837;</text><path d="M557.3 119.1V131.85" stroke="#666" stroke-width="0.5"/><ellipse cx="562" cy="118.3" rx="1.6" ry="1.2" fill="#ff8c14" transform="rotate(-20 562 118.3)"/><ellipse cx="562" cy="122.3" rx="1.6" ry="1.2" fill="#ff8c14" transform="rotate(-20 562 122.3)"/><text x="560" y="119.2" font-size="3" fill="#ff8c14" font-family="DejaVu Sans,sans-serif" text-anchor="middle">&#9837;</text><path d="M560.7 119.1V131.625" stroke="#666" stroke-width="0.5"/><ellipse cx="565.4" cy="117.7" rx="1.6" ry="1.2" fill="#ff8c14" transform="rotate(-20 565.4 117.7)"/><ellipse cx="565.4" cy="121.9" rx="1.6" ry="1.2" fill="#ff8c14" transform="rotate(-20 565.4 121.9)"/><text x="563.4" y="118.6" font-size="3" fill="#ff8c14" font-family="DejaVu Sans,sans-serif" text-anchor="middle">&#9837;</text><path d="M564.1 119.1V131.4" stroke="#666" stroke-width="0.5"/><ellipse cx="568.6" cy="117.1" rx="1.6" ry="1.2" fill="#ff8c14" transform="rotate(-20 568.6 117.1)"/><ellipse cx="568.6" cy="121.5" rx="1.6" ry="1.2" fill="#ff8c14" transform="rotate(-20 568.6 121.5)"/><text x="566.6" y="118" font-size="3" fill="#ff8c14" font-family="DejaVu Sans,sans-serif" text-anchor="middle">&#9837;</text><path d="M567.3 119.1V131.175" stroke="#666" stroke-width="0.5"/><path d="M557.3 131.55L568.8 130.9V132.2L557.3 132.85Z" fill="#222"/><path d="M557.3 133.05L568.8 132.45V133.45L557.3 134.05Z" fill="#222"/><ellipse cx="572.4" cy="115.1" rx="1.6" ry="1.2" fill="#ff8c14" transform="rotate(-20 572.4 115.1)"/><ellipse cx="572.4" cy="120.9" rx="1.6" ry="1.2" fill="#ff8c14" transform="rotate(-20 572.4 120.9)"/><text x="570.4" y="115.6" font-size="3" fill="#ff8c14" font-family="DejaVu Sans,sans-serif" text-anchor="middle">&#9837;</text><path d="M571.1 115.1V128.5" stroke="#666" stroke-width="0.5"/><ellipse cx="575.6" cy="114.6" rx="1.6" ry="1.2" fill="#ff8c14" transform="rotate(-20 575.6 114.6)"/><ellipse cx="575.6" cy="120.5" rx="1.6" ry="1.2" fill="#ff8c14" transform="rotate(-20 575.6 120.5)"/><text x="573.6" y="115.1" font-size="3" fill="#ff8c14" font-family="DejaVu Sans,sans-serif" text-anchor="middle">&#9837;</text><path d="M574.3 115.1V128.5" stroke="#666" stroke-width="0.5"/><ellipse cx="578.8" cy="114.1" rx="1.6" ry="1.2" fill="#ff8c14" transform="rotate(-20 578.8 114.1)"/><ellipse cx="578.8" cy="120.1" rx="1.6" ry="1.2" fill="#ff8c14" transform="rotate(-20 578.8 120.1)"/><text x="576.8" y="114.6" font-size="3" fill="#ff8c14" font-family="DejaVu Sans,sans-serif" text-anchor="middle">&#9837;</text><path d="M577.5 115.1V128.5" stroke="#666" stroke-width="0.5"/><ellipse cx="582" cy="113.6" rx="1.6" ry="1.2" fill="#ff8c14" transform="rotate(-20 582 113.6)"/><ellipse cx="582" cy="119.7" rx="1.6" ry="1.2" fill="#ff8c14" transform="rotate(-20 582 119.7)"/><text x="580" y="114.1" font-size="3" fill="#ff8c14" font-family="DejaVu Sans,sans-serif" text-anchor="middle">&#9837;</text><path d="M580.7 115.1V128.5" stroke="#666" stroke-width="0.5"/><path d="M571.1 127.5L582.4 126.7V128L571.1 128.8Z" fill="#222"/><path d="M571.1 129.5L582.4 128.7V129.7L571.1 130.5Z" fill="#222"/><text x="570" y="136.35" font-size="5.4" fill="#f4a4bc" text-anchor="start" font-weight="bold" font-family="Liberation Serif,serif" font-style="italic" stroke="#f4a4bc" stroke-width=".3">mf</text><text x="577.6" y="136.65" font-size="6.8" fill="#1b9be8" text-anchor="start" font-weight="bold" font-family="Liberation Serif,serif" font-style="italic" stroke="#1b9be8" stroke-width=".3">sfz</text><ellipse cx="520.6" cy="146.5" rx="1.5" ry="1.1" fill="#111" transform="rotate(-20 520.6 146.5)"/><ellipse cx="520.6" cy="155.7" rx="1.5" ry="1.1" fill="#111" transform="rotate(-20 520.6 155.7)"/><path d="M519.3 145.1V157.5" stroke="#666" stroke-width="0.5"/><path d="M518.2 153.1H523" stroke="#111" stroke-width="0.4"/><path d="M518.2 155.7H523" stroke="#111" stroke-width="0.4"/><ellipse cx="559" cy="146.5" rx="1.5" ry="1.1" fill="#111" transform="rotate(-20 559 146.5)"/><ellipse cx="559" cy="155.7" rx="1.5" ry="1.1" fill="#111" transform="rotate(-20 559 155.7)"/><path d="M557.7 145.1V157.5" stroke="#666" stroke-width="0.5"/><path d="M556.6 153.1H561.4" stroke="#111" stroke-width="0.4"/><path d="M556.6 155.7H561.4" stroke="#111" stroke-width="0.4"/><path d="M522.4 145.5Q539.9 142.1 557.4 145.5Q539.9 141.2 522.4 145.5Z" fill="#333" stroke="#333" stroke-width="0.28"/><path d="M522.4 156.1Q539.9 159.5 557.4 156.1Q539.9 160.4 522.4 156.1Z" fill="#333" stroke="#333" stroke-width="0.28"/><circle cx="523.4" cy="146.1" r="0.45" fill="#111"/><circle cx="561.8" cy="146.1" r="0.45" fill="#111"/><path d="M585.4 112.1V150.2" stroke="#111" stroke-width="0.6"/><text x="587" y="117" font-size="6.8" font-weight="bold" fill="#111" stroke="#111" stroke-width=".35" font-family="Liberation Serif,serif">3</text><text x="587" y="122" font-size="6.8" font-weight="bold" fill="#111" stroke="#111" stroke-width=".35" font-family="Liberation Serif,serif">4</text><text x="587" y="145.508" font-size="6.256" font-weight="bold" fill="#111" stroke="#111" stroke-width=".35" font-family="Liberation Serif,serif">3</text><text x="587" y="150.108" font-size="6.256" font-weight="bold" fill="#111" stroke="#111" stroke-width=".35" font-family="Liberation Serif,serif">4</text><path d="M598.4 114L599.8 115.7L598.5 117L599.8 118.4Q598.1 118 599.1 119.5" fill="none" stroke="#111" stroke-width=".85"/><g transform="translate(604.4 113.6) scale(0.76)"><path d="M.4 12.6Q-1.6 13 -1.4 11.4Q-.9 10.4 .1 11M.4 12.6Q1.4 12 1 9.6L-.6 -1.2Q-.9 -3.6 .7 -4.4Q1.6 -2.4 .2 -.2Q-3 2.8 -2.6 5.6Q-2 8.4 .8 8.2Q3 7.6 2.6 5.6Q2 3.8 .2 4.2Q-1.2 4.8 -.8 6.2" fill="none" stroke="#111" stroke-width=".95" stroke-linecap="round"/><circle cx="-.7" cy="11.6" r=".9" fill="#111"/></g><ellipse cx="609.4" cy="113.6" rx="1.4" ry="1.05" fill="#111" transform="rotate(-20 609.4 113.6)"/><text x="607" y="114.6" font-size="4" fill="#111" font-family="DejaVu Sans,sans-serif" text-anchor="middle">&#9837;</text><path d="M608.2 113.6V120" stroke="#111" stroke-width="0.5"/><ellipse cx="613.6" cy="113" rx="1.4" ry="1.05" fill="#111" transform="rotate(-20 613.6 113)"/><text x="611.2" y="114" font-size="4" fill="#111" font-family="DejaVu Sans,sans-serif" text-anchor="middle">&#9837;</text><path d="M612.4 113V120" stroke="#111" stroke-width="0.5"/><ellipse cx="617.8" cy="110" rx="1.4" ry="1.05" fill="#111" transform="rotate(-20 617.8 110)"/><text x="615.4" y="111" font-size="4" fill="#111" font-family="DejaVu Sans,sans-serif" text-anchor="middle">&#9837;</text><path d="M616.6 110V120" stroke="#111" stroke-width="0.5"/><ellipse cx="622" cy="111.6" rx="1.4" ry="1.05" fill="#111" transform="rotate(-20 622 111.6)"/><text x="619.6" y="112.6" font-size="4" fill="#111" font-family="DejaVu Sans,sans-serif" text-anchor="middle">&#9837;</text><path d="M620.8 111.6V120" stroke="#111" stroke-width="0.5"/><ellipse cx="626" cy="112.2" rx="1.4" ry="1.05" fill="#111" transform="rotate(-20 626 112.2)"/><text x="623.6" y="113.2" font-size="4" fill="#111" font-family="DejaVu Sans,sans-serif" text-anchor="middle">&#9837;</text><path d="M624.8 112.2V120" stroke="#111" stroke-width="0.5"/><path d="M608.2 118.8L626.4 118.8V119.9L608.2 119.9Z" fill="#111"/><path d="M608.2 120.2L626.4 120.2V121.3L608.2 121.3Z" fill="#111"/><path d="M610.6 110.2Q617.8 106.8 625 108.6Q617.8 105.9 610.6 110.2Z" fill="#333" stroke="#333" stroke-width="0.28"/><ellipse cx="631" cy="113.2" rx="1.4" ry="1.05" fill="#111" transform="rotate(-20 631 113.2)"/><text x="628.6" y="114.2" font-size="4" fill="#111" font-family="DejaVu Sans,sans-serif" text-anchor="middle">&#9837;</text><path d="M629.8 113.2V119.8" stroke="#111" stroke-width="0.5"/><ellipse cx="635.2" cy="111.6" rx="1.4" ry="1.05" fill="#111" transform="rotate(-20 635.2 111.6)"/><text x="632.8" y="112.6" font-size="4" fill="#111" font-family="DejaVu Sans,sans-serif" text-anchor="middle">&#9837;</text><path d="M634 111.6V119.1" stroke="#111" stroke-width="0.5"/><ellipse cx="639.4" cy="110.4" rx="1.4" ry="1.05" fill="#111" transform="rotate(-20 639.4 110.4)"/><text x="637" y="111.4" font-size="4" fill="#111" font-family="DejaVu Sans,sans-serif" text-anchor="middle">&#9837;</text><path d="M638.2 110.4V118.4" stroke="#111" stroke-width="0.5"/><ellipse cx="643.4" cy="109.4" rx="1.4" ry="1.05" fill="#111" transform="rotate(-20 643.4 109.4)"/><text x="641" y="110.4" font-size="4" fill="#111" font-family="DejaVu Sans,sans-serif" text-anchor="middle">&#9837;</text><path d="M642.2 109.4V117.7" stroke="#111" stroke-width="0.5"/><ellipse cx="647.4" cy="108.2" rx="1.4" ry="1.05" fill="#111" transform="rotate(-20 647.4 108.2)"/><text x="645" y="109.2" font-size="4" fill="#111" font-family="DejaVu Sans,sans-serif" text-anchor="middle">&#9837;</text><path d="M646.2 108.2V117" stroke="#111" stroke-width="0.5"/><path d="M629.8 119.2L647.8 116.2V117.3L629.8 120.3Z" fill="#111"/><path d="M629.8 120.7L647.8 117.7V118.8L629.8 121.8Z" fill="#111"/><path d="M632 109.4Q639.7 104.6 647.4 105Q639.7 103.7 632 109.4Z" fill="#333" stroke="#333" stroke-width="0.28"/><path d="M651.6 112.1V150.2" stroke="#111" stroke-width="0.6"/><path d="M651.6 150.2V242.1" stroke="#555" stroke-width="0.5" stroke-dasharray="0.7 0.7"/><text x="655.2" y="121.1" font-size="4.2" fill="#111" font-family="DejaVu Sans,sans-serif" text-anchor="middle">&#9837;</text><ellipse cx="658.6" cy="119.6" rx="1.6" ry="1.2" fill="#111" transform="rotate(-20 658.6 119.6)"/><ellipse cx="658.6" cy="122" rx="1.6" ry="1.2" fill="#111" transform="rotate(-20 658.6 122)"/><path d="M657.3 119.6V128" stroke="#888" stroke-width="0.5"/><circle cx="661.6" cy="119.2" r="0.45" fill="#111"/><path d="M656.2 124.4H661" stroke="#111" stroke-width="0.45"/><text x="658.4" y="137" font-size="6.8" fill="#111" text-anchor="start" font-weight="bold" font-family="Liberation Serif,serif" font-style="italic" stroke="#111" stroke-width=".3">p</text><ellipse cx="659.4" cy="109.6" rx="1.5" ry="1.1" fill="#111" transform="rotate(-20 659.4 109.6)"/><text x="656.8" y="110.6" font-size="4.2" fill="#111" font-family="DejaVu Sans,sans-serif" text-anchor="middle">&#9837;</text><ellipse cx="665.6" cy="106.6" rx="1.5" ry="1.1" fill="#111" transform="rotate(-20 665.6 106.6)"/><text x="663" y="107.6" font-size="4.2" fill="#111" font-family="DejaVu Sans,sans-serif" text-anchor="middle">&#9837;</text><path d="M666.9 100V106.6" stroke="#111" stroke-width="0.5"/><path d="M663.4 109.4H668" stroke="#bbb" stroke-width="0.4"/><ellipse cx="670.6" cy="107.2" rx="1.5" ry="1.1" fill="#111" transform="rotate(-20 670.6 107.2)"/><text x="668" y="108.2" font-size="4.2" fill="#111" font-family="DejaVu Sans,sans-serif" text-anchor="middle">&#9837;</text><path d="M671.9 100V107.2" stroke="#111" stroke-width="0.5"/><path d="M668.4 109.4H673" stroke="#bbb" stroke-width="0.4"/><ellipse cx="676.9" cy="105.3" rx="1.5" ry="1.1" fill="#111" transform="rotate(-20 676.9 105.3)"/><text x="674.3" y="106.3" font-size="4.2" fill="#111" font-family="DejaVu Sans,sans-serif" text-anchor="middle">&#9837;</text><path d="M678.2 100V105.3" stroke="#111" stroke-width="0.5"/><path d="M674.7 106.9H679.3" stroke="#bbb" stroke-width="0.4"/><path d="M674.7 109.4H679.3" stroke="#bbb" stroke-width="0.4"/><path d="M662.2 99V108" stroke="#111" stroke-width="0.5"/><path d="M661.2 98.7L678.8 98.5V99.7L661.2 99.9Z" fill="#111"/><path d="M661.2 100.2L678.8 100V101.2L661.2 101.4Z" fill="#111"/><path d="M661.2 101.7L678.8 101.5V102.7L661.2 102.9Z" fill="#111"/><path d="M661.6 97.6Q670 94.3 678.4 97Q670 93.4 661.6 97.6Z" fill="#333" stroke="#333" stroke-width="0.28"/><ellipse cx="682" cy="104" rx="1.5" ry="1.1" fill="#111" transform="rotate(-20 682 104)"/><text x="679.4" y="105" font-size="4.2" fill="#111" font-family="DejaVu Sans,sans-serif" text-anchor="middle">&#9837;</text><path d="M683.3 97V104" stroke="#111" stroke-width="0.5"/><path d="M679.8 106.9H684.4" stroke="#bbb" stroke-width="0.4"/><path d="M679.8 109.4H684.4" stroke="#bbb" stroke-width="0.4"/><ellipse cx="688" cy="103.4" rx="1.5" ry="1.1" fill="#111" transform="rotate(-20 688 103.4)"/><text x="685.4" y="104.4" font-size="4.2" fill="#111" font-family="DejaVu Sans,sans-serif" text-anchor="middle">&#9837;</text><path d="M689.3 97V103.4" stroke="#111" stroke-width="0.5"/><path d="M685.8 104.4H690.4" stroke="#bbb" stroke-width="0.4"/><path d="M685.8 106.9H690.4" stroke="#bbb" stroke-width="0.4"/><path d="M685.8 109.4H690.4" stroke="#bbb" stroke-width="0.4"/><ellipse cx="694.4" cy="102.8" rx="1.5" ry="1.1" fill="#111" transform="rotate(-20 694.4 102.8)"/><text x="691.8" y="103.8" font-size="4.2" fill="#111" font-family="DejaVu Sans,sans-serif" text-anchor="middle">&#9837;</text><path d="M695.7 97V102.8" stroke="#111" stroke-width="0.5"/><path d="M692.2 104.4H696.8" stroke="#bbb" stroke-width="0.4"/><path d="M692.2 106.9H696.8" stroke="#bbb" stroke-width="0.4"/><path d="M692.2 109.4H696.8" stroke="#bbb" stroke-width="0.4"/><ellipse cx="701.2" cy="102" rx="1.5" ry="1.1" fill="#111" transform="rotate(-20 701.2 102)"/><text x="698.6" y="103" font-size="4.2" fill="#111" font-family="DejaVu Sans,sans-serif" text-anchor="middle">&#9837;</text><path d="M702.5 97V102" stroke="#111" stroke-width="0.5"/><path d="M699 104.4H703.6" stroke="#bbb" stroke-width="0.4"/><path d="M699 106.9H703.6" stroke="#bbb" stroke-width="0.4"/><path d="M699 109.4H703.6" stroke="#bbb" stroke-width="0.4"/><path d="M683.3 95.8L703 95.6V96.8L683.3 97Z" fill="#111"/><path d="M683.3 97.2L703 97V98.2L683.3 98.4Z" fill="#111"/><path d="M683.3 98.6L703 98.4V99.6L683.3 99.8Z" fill="#111"/><path d="M683.8 94.4Q693.2 90.9 702.6 93.8Q693.2 90 683.8 94.4Z" fill="#333" stroke="#333" stroke-width="0.28"/><path d="M704 114L705.4 115.7L704.1 117L705.4 118.4Q703.7 118 704.7 119.5" fill="none" stroke="#111" stroke-width=".85"/><path d="M717.4 112.1V150.2" stroke="#111" stroke-width="0.6"/><text x="719.6" y="117" font-size="6.8" font-weight="bold" fill="#111" stroke="#111" stroke-width=".35" font-family="Liberation Serif,serif">3</text><text x="719.6" y="122" font-size="6.8" font-weight="bold" fill="#111" stroke="#111" stroke-width=".35" font-family="Liberation Serif,serif">4</text><path d="M725.8 112.1V122.1" stroke="#111" stroke-width="0.6"/><circle cx="659.4" cy="145" r=".7" fill="#111"/><path d="M659.4 145.5Q660.4 145.7 661 144.6L660 148.4" fill="none" stroke="#111" stroke-width=".6"/><ellipse cx="677.6" cy="139.2" rx="1.5" ry="1.1" fill="#111" transform="rotate(-20 677.6 139.2)"/><ellipse cx="677.6" cy="147.2" rx="1.5" ry="1.1" fill="#111" transform="rotate(-20 677.6 147.2)"/><path d="M676.3 139.2V155" stroke="#111" stroke-width="0.5"/><ellipse cx="682" cy="139.6" rx="1.5" ry="1.1" fill="#111" transform="rotate(-20 682 139.6)"/><ellipse cx="682" cy="147.7" rx="1.5" ry="1.1" fill="#111" transform="rotate(-20 682 147.7)"/><path d="M680.7 139.2V155" stroke="#111" stroke-width="0.5"/><ellipse cx="688.4" cy="140" rx="1.5" ry="1.1" fill="#111" transform="rotate(-20 688.4 140)"/><ellipse cx="688.4" cy="147.2" rx="1.5" ry="1.1" fill="#111" transform="rotate(-20 688.4 147.2)"/><text x="685.9" y="140.1" font-size="4.4" fill="#111" font-family="DejaVu Sans,sans-serif" text-anchor="middle">&#9837;</text><text x="685.9" y="148.1" font-size="4.4" fill="#111" font-family="DejaVu Sans,sans-serif" text-anchor="middle">&#9837;</text><path d="M687.1 139.2V155" stroke="#111" stroke-width="0.5"/><ellipse cx="693.6" cy="139.2" rx="1.5" ry="1.1" fill="#111" transform="rotate(-20 693.6 139.2)"/><ellipse cx="693.6" cy="147.7" rx="1.5" ry="1.1" fill="#111" transform="rotate(-20 693.6 147.7)"/><text x="691.1" y="140.1" font-size="4.4" fill="#111" font-family="DejaVu Sans,sans-serif" text-anchor="middle">&#9837;</text><text x="691.1" y="148.1" font-size="4.4" fill="#111" font-family="DejaVu Sans,sans-serif" text-anchor="middle">&#9837;</text><path d="M692.3 139.2V155" stroke="#111" stroke-width="0.5"/><ellipse cx="699.6" cy="139.6" rx="1.5" ry="1.1" fill="#111" transform="rotate(-20 699.6 139.6)"/><ellipse cx="699.6" cy="147.2" rx="1.5" ry="1.1" fill="#111" transform="rotate(-20 699.6 147.2)"/><text x="697.1" y="140.1" font-size="4.4" fill="#111" font-family="DejaVu Sans,sans-serif" text-anchor="middle">&#9837;</text><text x="697.1" y="148.1" font-size="4.4" fill="#111" font-family="DejaVu Sans,sans-serif" text-anchor="middle">&#9837;</text><path d="M698.3 139.2V155" stroke="#111" stroke-width="0.5"/><ellipse cx="704.6" cy="140" rx="1.5" ry="1.1" fill="#111" transform="rotate(-20 704.6 140)"/><ellipse cx="704.6" cy="147.7" rx="1.5" ry="1.1" fill="#111" transform="rotate(-20 704.6 147.7)"/><text x="702.1" y="140.1" font-size="4.4" fill="#111" font-family="DejaVu Sans,sans-serif" text-anchor="middle">&#9837;</text><text x="702.1" y="148.1" font-size="4.4" fill="#111" font-family="DejaVu Sans,sans-serif" text-anchor="middle">&#9837;</text><path d="M703.3 139.2V155" stroke="#111" stroke-width="0.5"/><ellipse cx="709.4" cy="139.2" rx="1.5" ry="1.1" fill="#111" transform="rotate(-20 709.4 139.2)"/><ellipse cx="709.4" cy="147.2" rx="1.5" ry="1.1" fill="#111" transform="rotate(-20 709.4 147.2)"/><text x="706.9" y="140.1" font-size="4.4" fill="#111" font-family="DejaVu Sans,sans-serif" text-anchor="middle">&#9837;</text><text x="706.9" y="148.1" font-size="4.4" fill="#111" font-family="DejaVu Sans,sans-serif" text-anchor="middle">&#9837;</text><path d="M708.1 139.2V155" stroke="#111" stroke-width="0.5"/><ellipse cx="714.6" cy="139.6" rx="1.5" ry="1.1" fill="#111" transform="rotate(-20 714.6 139.6)"/><ellipse cx="714.6" cy="147.7" rx="1.5" ry="1.1" fill="#111" transform="rotate(-20 714.6 147.7)"/><text x="712.1" y="140.1" font-size="4.4" fill="#111" font-family="DejaVu Sans,sans-serif" text-anchor="middle">&#9837;</text><text x="712.1" y="148.1" font-size="4.4" fill="#111" font-family="DejaVu Sans,sans-serif" text-anchor="middle">&#9837;</text><path d="M713.3 139.2V155" stroke="#111" stroke-width="0.5"/><path d="M680.6 154L697.2 154V155.4L680.6 155.4Z" fill="#111"/><path d="M703.8 155.2L713 155.2V156.6L703.8 156.6Z" fill="#111"/><path d="M689.6 155V158.6" stroke="#111" stroke-width="0.6"/><path d="M708.4 156V160.4" stroke="#111" stroke-width="0.6"/><path d="M676.6 137.4Q704.1 132 731.6 141.4Q704.1 130.8 676.6 137.4Z" fill="#333" stroke="#333" stroke-width="0.28"/><text x="719" y="145.508" font-size="6.256" font-weight="bold" fill="#111" stroke="#111" stroke-width=".35" font-family="Liberation Serif,serif">3</text><text x="719" y="150.108" font-size="6.256" font-weight="bold" fill="#111" stroke="#111" stroke-width=".35" font-family="Liberation Serif,serif">4</text><text x="724" y="145.9" font-size="3.6" fill="#111" font-family="DejaVu Sans,sans-serif" text-anchor="middle">&#9837;</text><ellipse cx="727.4" cy="144.8" rx="1.5" ry="1.1" fill="#111" transform="rotate(-20 727.4 144.8)"/><text x="724.2" y="154.3" font-size="3.6" fill="#111" font-family="DejaVu Sans,sans-serif" text-anchor="middle">&#9837;</text><ellipse cx="727.6" cy="153.2" rx="1.5" ry="1.1" fill="#111" transform="rotate(-20 727.6 153.2)"/><path d="M728.8 138.6V153" stroke="#111" stroke-width="0.5"/><path d="M728.8 138.6Q729.2 140.6 731 141.8Q731.4 143.2 730.6 144.2" fill="none" stroke="#111" stroke-width=".7"/><text x="730.6" y="146.9" font-size="3.2" fill="#111" font-family="DejaVu Sans,sans-serif" text-anchor="middle">&#9838;</text><path d="M736 143.4L737.4 145.1L736.1 146.4L737.4 147.8Q735.7 147.4 736.7 148.9" fill="none" stroke="#111" stroke-width=".85"/><path d="M744.8 141V150.2" stroke="#111" stroke-width="1.1"/><path d="M676 162.2Q704 161.6 731.6 162.9M676 164.2Q704 164.6 731.6 163.5" stroke="#444" stroke-width=".7" fill="none"/><rect x="405" y="199" width="72.8" height="8.2" fill="#d9d9d9"/><path d="M405 199H477.8" stroke="#c4c4c4" stroke-width=".4"/><path d="M405 201.05H477.8" stroke="#c4c4c4" stroke-width=".4"/><path d="M405 203.1H477.8" stroke="#c4c4c4" stroke-width=".4"/><path d="M405 205.15H477.8" stroke="#c4c4c4" stroke-width=".4"/><path d="M405 207.2H477.8" stroke="#c4c4c4" stroke-width=".4"/><rect x="547.6" y="199" width="105.4" height="8.2" fill="#d9d9d9"/><path d="M547.6 199H653" stroke="#c4c4c4" stroke-width=".4"/><path d="M547.6 201.05H653" stroke="#c4c4c4" stroke-width=".4"/><path d="M547.6 203.1H653" stroke="#c4c4c4" stroke-width=".4"/><path d="M547.6 205.15H653" stroke="#c4c4c4" stroke-width=".4"/><path d="M547.6 207.2H653" stroke="#c4c4c4" stroke-width=".4"/><text x="393.4" y="201.6" font-size="4.7" fill="#111" text-anchor="start" font-weight="normal" font-family="Liberation Serif,serif"  stroke="#111" stroke-width=".12">Vc.</text><text x="393.4" y="207" font-size="4.7" fill="#111" text-anchor="start" font-weight="normal" font-family="Liberation Serif,serif"  stroke="#111" stroke-width=".12">Db.</text><g transform="translate(406.6 199) scale(0.86)"><path d="M-2 3.4Q-2.2 .4 .6 .2Q3.2 .4 3 3.4Q2.6 6.8 -2.2 9" fill="none" stroke="#111" stroke-width="1.1" stroke-linecap="round"/><circle cx="-1.4" cy="3.2" r="1.1" fill="#111"/><circle cx="4.6" cy="1.6" r=".65" fill="#111"/><circle cx="4.6" cy="4.4" r=".65" fill="#111"/></g><text x="412.6" y="203.214" font-size="5.848" font-weight="bold" fill="#111" stroke="#111" stroke-width=".35" font-family="Liberation Serif,serif">3</text><text x="412.6" y="207.514" font-size="5.848" font-weight="bold" fill="#111" stroke="#111" stroke-width=".35" font-family="Liberation Serif,serif">4</text><ellipse cx="421.6" cy="205.2" rx="1.6" ry="1.1" fill="none" stroke="#111" stroke-width=".7" transform="rotate(-20 421.6 205.2)"/><path d="M419 207.4H424.4" stroke="#111" stroke-width="0.4"/><circle cx="460.2" cy="202.4" r="0.8" fill="#111"/><path d="M476.9 199V207.6" stroke="#111" stroke-width="0.6"/><path d="M548 199V207.6" stroke="#111" stroke-width="1.2"/><text x="549.6" y="203.214" font-size="5.848" font-weight="bold" fill="#111" stroke="#111" stroke-width=".35" font-family="Liberation Serif,serif">3</text><text x="549.6" y="207.514" font-size="5.848" font-weight="bold" fill="#111" stroke="#111" stroke-width=".35" font-family="Liberation Serif,serif">4</text><path d="M557.4 200.6L558.8 202.3L557.5 203.6L558.8 205Q557.1 204.6 558.1 206.1" fill="none" stroke="#111" stroke-width=".85"/><circle cx="572" cy="202.6" r=".7" fill="#111"/><path d="M572 203.1Q573 203.3 573.6 202.2L572.6 206" fill="none" stroke="#111" stroke-width=".6"/><ellipse cx="581" cy="201.4" rx="1.5" ry="1.1" fill="#111" transform="rotate(-20 581 201.4)"/><path d="M582.3 201.4V195.4" stroke="#111" stroke-width="0.5"/><path d="M582.3 195.4Q582.7 197.4 584.5 198.6Q584.9 200 584.1 201" fill="none" stroke="#111" stroke-width=".7"/><text x="578.4" y="202.1" font-size="3" fill="#111" font-family="DejaVu Sans,sans-serif" text-anchor="middle">&#9837;</text><text x="586.2" y="203.214" font-size="5.848" font-weight="bold" fill="#111" stroke="#111" stroke-width=".35" font-family="Liberation Serif,serif">3</text><text x="586.2" y="207.514" font-size="5.848" font-weight="bold" fill="#111" stroke="#111" stroke-width=".35" font-family="Liberation Serif,serif">4</text><path d="M589 206.8Q594 208.6 599 206.8Q594 209.5 589 206.8Z" fill="#333" stroke="#333" stroke-width="0.28"/><ellipse cx="600.2" cy="201" rx="1.5" ry="1.1" fill="#111" transform="rotate(-20 600.2 201)"/><path d="M601.5 201V195.6" stroke="#111" stroke-width="0.5"/><ellipse cx="600.2" cy="204.6" rx="1.5" ry="1.1" fill="#111" transform="rotate(-20 600.2 204.6)"/><rect x="631.2" y="200.4" width="1.6" height="4.6" fill="#111"/><path d="M652.6 199V207.6" stroke="#444" stroke-width="1.3"/><rect x="405" y="234" width="113" height="8.8" fill="#ececec"/><path d="M405 234H518" stroke="#8c8c8c" stroke-width=".42"/><path d="M405 236.2H518" stroke="#8c8c8c" stroke-width=".42"/><path d="M405 238.4H518" stroke="#8c8c8c" stroke-width=".42"/><path d="M405 240.6H518" stroke="#8c8c8c" stroke-width=".42"/><path d="M405 242.8H518" stroke="#8c8c8c" stroke-width=".42"/><rect x="651.4" y="234" width="94.2" height="8.8" fill="#ececec"/><path d="M651.4 234H745.6" stroke="#8c8c8c" stroke-width=".42"/><path d="M651.4 236.2H745.6" stroke="#8c8c8c" stroke-width=".42"/><path d="M651.4 238.4H745.6" stroke="#8c8c8c" stroke-width=".42"/><path d="M651.4 240.6H745.6" stroke="#8c8c8c" stroke-width=".42"/><path d="M651.4 242.8H745.6" stroke="#8c8c8c" stroke-width=".42"/><text x="400.2" y="239.9" font-size="5" fill="#111" text-anchor="end" font-weight="normal" font-family="Liberation Serif,serif"  stroke="#111" stroke-width=".12">Percussion</text><rect x="406.4" y="236.2" width="1.2" height="4.4" fill="#111"/><rect x="408.4" y="236.2" width="1.2" height="4.4" fill="#111"/><text x="412.8" y="238.312" font-size="5.984" font-weight="bold" fill="#111" stroke="#111" stroke-width=".35" font-family="Liberation Serif,serif">3</text><text x="412.8" y="242.712" font-size="5.984" font-weight="bold" fill="#111" stroke="#111" stroke-width=".35" font-family="Liberation Serif,serif">4</text><path d="M421.6 235.8L423 237.5L421.7 238.8L423 240.2Q421.3 239.8 422.3 241.3" fill="none" stroke="#111" stroke-width=".85"/><text x="446" y="227.4" font-size="4.7" fill="#111" text-anchor="start" font-weight="normal" font-family="Liberation Serif,serif"  stroke="#111" stroke-width=".12">Sn. Dr.</text><ellipse cx="447.6" cy="237.2" rx="1.5" ry="1.15" fill="#111" transform="rotate(-20 447.6 237.2)"/><path d="M448.9 231.4V237.2" stroke="#111" stroke-width="0.5"/><ellipse cx="450.4" cy="237.2" rx="1.5" ry="1.15" fill="#111" transform="rotate(-20 450.4 237.2)"/><path d="M451.7 231.4V237.2" stroke="#111" stroke-width="0.5"/><ellipse cx="453.2" cy="237.2" rx="1.5" ry="1.15" fill="#111" transform="rotate(-20 453.2 237.2)"/><path d="M454.5 231.4V237.2" stroke="#111" stroke-width="0.5"/><ellipse cx="456" cy="237.2" rx="1.5" ry="1.15" fill="#111" transform="rotate(-20 456 237.2)"/><path d="M457.3 231.4V237.2" stroke="#111" stroke-width="0.5"/><ellipse cx="458.4" cy="237.2" rx="1.5" ry="1.15" fill="#111" transform="rotate(-20 458.4 237.2)"/><path d="M459.7 231.4V237.2" stroke="#111" stroke-width="0.5"/><path d="M448 229.6L459.8 229.6V231L448 231Z" fill="#111"/><path d="M448 231.6L459.8 231.6V232.9L448 232.9Z" fill="#111"/><ellipse cx="461.6" cy="237.2" rx="1.5" ry="1.15" fill="#111" transform="rotate(-20 461.6 237.2)"/><path d="M462.9 231.4V237.2" stroke="#111" stroke-width="0.5"/><ellipse cx="464.4" cy="237.2" rx="1.5" ry="1.15" fill="#111" transform="rotate(-20 464.4 237.2)"/><path d="M465.7 231.4V237.2" stroke="#111" stroke-width="0.5"/><ellipse cx="467.2" cy="237.2" rx="1.5" ry="1.15" fill="#111" transform="rotate(-20 467.2 237.2)"/><path d="M468.5 231.4V237.2" stroke="#111" stroke-width="0.5"/><path d="M461.4 229.6L468.6 229.6V231L461.4 231Z" fill="#111"/><path d="M461.4 231.6L468.6 231.6V232.9L461.4 232.9Z" fill="#111"/><text x="464.6" y="228.4" font-size="3.6" fill="#222" text-anchor="start" font-weight="normal" font-family="Liberation Serif,serif"  stroke="#222" stroke-width=".12">&gt;</text><ellipse cx="447.4" cy="242" rx="1.5" ry="1.1" fill="#111" transform="rotate(-20 447.4 242)"/><path d="M446.1 242V247.4" stroke="#111" stroke-width="0.5"/><ellipse cx="460.4" cy="242" rx="1.5" ry="1.1" fill="#111" transform="rotate(-20 460.4 242)"/><path d="M459.1 242V247.4" stroke="#111" stroke-width="0.5"/><path d="M459.1 247.4Q459.5 245.4 461.3 244.2Q461.7 242.8 460.9 241.8" fill="none" stroke="#111" stroke-width=".7"/><ellipse cx="466.6" cy="242.8" rx="1.2" ry="1" fill="#111" transform="rotate(-20 466.6 242.8)"/><circle cx="463" cy="241" r="0.45" fill="#111"/><text x="446" y="252.8" font-size="4.4" fill="#111" text-anchor="start" font-weight="normal" font-family="Liberation Serif,serif"  stroke="#111" stroke-width=".12">B.D.</text><text x="470.6" y="238.312" font-size="5.984" font-weight="bold" fill="#111" stroke="#111" stroke-width=".35" font-family="Liberation Serif,serif">3</text><text x="470.6" y="242.712" font-size="5.984" font-weight="bold" fill="#111" stroke="#111" stroke-width=".35" font-family="Liberation Serif,serif">4</text><path d="M476.8 234V242.8" stroke="#111" stroke-width="0.6"/><rect x="480.4" y="232.6" width="2.6" height="1.2" fill="#111"/><ellipse cx="492.2" cy="236.4" rx="1.2" ry="0.9" fill="#111" transform="rotate(-20 492.2 236.4)"/><ellipse cx="492.2" cy="233.8" rx="1.2" ry="0.9" fill="#111" transform="rotate(-20 492.2 233.8)"/><path d="M493.3 227.6V236.4" stroke="#111" stroke-width="0.5"/><path d="M493.3 227.6L491.6 221.8" stroke="#111" stroke-width=".6"/><text x="490.6" y="221.2" font-size="3.2" fill="#222" text-anchor="start" font-weight="normal" font-family="Liberation Serif,serif"  stroke="#222" stroke-width=".12">&#8226;</text><circle cx="495.4" cy="235" r="0.45" fill="#111"/><ellipse cx="501.2" cy="236.4" rx="1.2" ry="0.9" fill="#111" transform="rotate(-20 501.2 236.4)"/><ellipse cx="501.2" cy="233.8" rx="1.2" ry="0.9" fill="#111" transform="rotate(-20 501.2 233.8)"/><path d="M502.3 227.6V236.4" stroke="#111" stroke-width="0.5"/><path d="M502.3 227.6L500.6 221.8" stroke="#111" stroke-width=".6"/><text x="499.6" y="221.2" font-size="3.2" fill="#222" text-anchor="start" font-weight="normal" font-family="Liberation Serif,serif"  stroke="#222" stroke-width=".12">&#8226;</text><circle cx="504.4" cy="235" r="0.45" fill="#111"/><ellipse cx="493.2" cy="244.2" rx="1.5" ry="1.1" fill="#111" transform="rotate(-20 493.2 244.2)"/><path d="M490.8 245H495.6" stroke="#111" stroke-width="0.4"/><text x="512.6" y="238.312" font-size="5.984" font-weight="bold" fill="#111" stroke="#111" stroke-width=".35" font-family="Liberation Serif,serif">4</text><text x="512.6" y="242.712" font-size="5.984" font-weight="bold" fill="#111" stroke="#111" stroke-width=".35" font-family="Liberation Serif,serif">4</text><path d="M517.8 234V242.8" stroke="#111" stroke-width="0.6"/><path d="M651.6 234V242.8" stroke="#111" stroke-width="0.6"/><text x="659.6" y="226.2" font-size="4.4" fill="#111" text-anchor="start" font-weight="normal" font-family="Liberation Serif,serif"  stroke="#111" stroke-width=".12">Tam.</text><path d="M660.4 228V232" stroke="#888" stroke-width="0.4"/><ellipse cx="661.2" cy="234" rx="1.4" ry="1.1" fill="#111" transform="rotate(-20 661.2 234)"/><circle cx="664" cy="233.6" r="0.45" fill="#111"/><ellipse cx="661.2" cy="241" rx="1.4" ry="1.1" fill="#111" transform="rotate(-20 661.2 241)"/><circle cx="664" cy="240.6" r="0.45" fill="#111"/><path d="M659.9 241V247.4" stroke="#888" stroke-width="0.4"/><text x="659.6" y="252.8" font-size="4.4" fill="#111" text-anchor="start" font-weight="normal" font-family="Liberation Serif,serif"  stroke="#111" stroke-width=".12">B.D.</text><path d="M664 231.6Q697 222.6 730 231.6Q697 224.6 664 231.6Z" fill="#999" stroke="#999" stroke-width=".5"/><path d="M664 243.2Q697 250.6 730 243.2Q697 248.6 664 243.2Z" fill="#999" stroke="#999" stroke-width=".5"/><text x="718.6" y="238.312" font-size="5.984" font-weight="bold" fill="#111" stroke="#111" stroke-width=".35" font-family="Liberation Serif,serif">4</text><text x="718.6" y="242.712" font-size="5.984" font-weight="bold" fill="#111" stroke="#111" stroke-width=".35" font-family="Liberation Serif,serif">4</text><path d="M728.6 229.6V234" stroke="#888" stroke-width="0.4"/><text x="727.6" y="232" font-size="2.6" fill="#777" text-anchor="start" font-weight="normal" font-family="Liberation Serif,serif"  stroke="#777" stroke-width=".12">&gt;</text><ellipse cx="729.2" cy="240.2" rx="1.5" ry="1.1" fill="#111" transform="rotate(-20 729.2 240.2)"/><path d="M727.9 240.2V246" stroke="#111" stroke-width="0.5"/><path d="M736.6 235.6L738 237.3L736.7 238.6L738 240Q736.3 239.6 737.3 241.1" fill="none" stroke="#111" stroke-width=".85"/><path d="M744.4 234V242.8" stroke="#111" stroke-width="1.1"/></svg>
<div style="left:334.4px;top:262px;width:416px;height:159.2px;background:#16222d;"></div>
<div style="left:334.4px;top:262px;width:416px;height:16.6px;background:#0f161d;"></div>
<svg style="left:339px;top:268px" width="7" height="6" viewBox="0 0 7 6"><path d="M.4 1H1.4M2.4 1H6.6M.4 3H1.4M2.4 3H6.6M.4 5H1.4M2.4 5H6.6" stroke="#8492a0" stroke-width=".8"/></svg>
<svg style="left:349.6px;top:267.6px" width="8" height="7" viewBox="0 0 8 7"><rect x=".3" y=".3" width="7.4" height="6.4" fill="#c9d3dc"/><path d="M2.2 .3V4M4 .3V4M5.8 .3V4" stroke="#0f161d" stroke-width=".9"/></svg>
<svg style="left:360.6px;top:267.2px" width="8" height="8" viewBox="0 0 8 8"><path d="M.8 .8L5 5" stroke="#c9d3dc" stroke-width="1"/><circle cx="5.6" cy="5.6" r="1.9" fill="#c9d3dc"/><circle cx="1.2" cy="1.2" r=".9" fill="#c9d3dc"/></svg>
<svg style="left:372px;top:267.6px" width="7" height="7" viewBox="0 0 7 7"><rect x=".2" y=".2" width="2.9" height="2.9" rx=".5" fill="#c9d3dc"/><rect x="3.9" y=".2" width="2.9" height="2.9" rx=".5" fill="#c9d3dc"/><rect x=".2" y="3.9" width="2.9" height="2.9" rx=".5" fill="#c9d3dc"/><rect x="3.9" y="3.9" width="2.9" height="2.9" rx=".5" fill="#c9d3dc"/></svg>
<svg style="left:383px;top:267.6px" width="7" height="7" viewBox="0 0 7 7"><path d="M1 6.6V2.4M3 6.6V.6M5 6.6V3.4M6.6 6.6V1.6" stroke="#8492a0" stroke-width=".8"/></svg>
<div style="left:392.4px;top:266px;width:11.4px;height:10.2px;background:#0c5c8a;border-radius:1px"></div>
<svg style="left:394.6px;top:268px" width="7" height="6" viewBox="0 0 7 6"><path d="M.4 1.2H3M.4 4.6H2.4M4 2.8H6.6M3.4 .8H5.6" stroke="#7fd0ff" stroke-width="1"/></svg>
<div style="left:414.4px;top:266px;width:10.8px;height:10.2px;background:#12a8f0;border-radius:1px"></div>
<svg style="left:417.4px;top:267.8px" width="5" height="7" viewBox="0 0 5 7"><path d="M.6 .4L4.4 4H2.6L3.6 6.2L2.8 6.6L1.8 4.4L.6 5.6Z" fill="#0b1c2a"/></svg>
<svg style="left:428px;top:267.6px" width="7" height="7" viewBox="0 0 7 7"><path d="M.6 6.4L1.2 4.6L5 .8L6.2 2L2.4 5.8Z" fill="#eef2f5"/></svg>
<svg style="left:439px;top:267.6px" width="7" height="7" viewBox="0 0 7 7"><path d="M.8 6.2L6.2 .8" stroke="#55626e" stroke-width=".9"/></svg>
<svg style="left:449.6px;top:267.4px" width="8" height="8" viewBox="0 0 8 8"><rect x=".5" y=".5" width="7" height="7" fill="none" stroke="#8492a0" stroke-width=".7" stroke-dasharray="1.4 .8"/><path d="M2.4 2.2V5.8M5.6 2.2V5.8" stroke="#8492a0" stroke-width=".8"/></svg>
<svg style="left:461.4px;top:267.4px" width="6" height="8" viewBox="0 0 6 8"><path d="M3 .6V6M.6 7H5.4M1.2 7L3 3.4L4.8 7" fill="none" stroke="#8492a0" stroke-width=".8"/></svg>
<svg style="left:477.4px;top:267.4px" width="6" height="8" viewBox="0 0 6 8"><path d="M.3 1.6H5.7M2 .6H4M.9 1.8L1.3 7.4H4.7L5.1 1.8Z" fill="#e3eaf0" stroke="#e3eaf0" stroke-width=".6"/></svg>
<div style="left:490.8px;top:266px;width:10.8px;height:10.2px;background:#12a8f0;border-radius:1px"></div>
<svg style="left:492.8px;top:269px" width="7" height="4" viewBox="0 0 7 4"><path d="M.4 2H6.6M2 .4L.4 2L2 3.6M5 .4L6.6 2L5 3.6" fill="none" stroke="#0b3350" stroke-width=".8"/></svg>
<div class="t" style="left:504.6px;top:266.6px;font-size:7px;color:#e3eaf0;font-family:'DejaVu Sans',sans-serif">&#9835;</div>
<div class="t" style="left:521px;top:266.6px;font-size:7px;color:#e3eaf0;font-family:'DejaVu Sans',sans-serif">&#9834;</div>
<div style="left:534px;top:266px;width:11px;height:10.2px;background:#12a8f0;border-radius:1px"></div>
<div class="t" style="left:535.6px;top:270.4px;font-size:3.2px;color:#0b4a74;">1/16</div>
<div style="left:551px;top:267.2px;width:77px;height:8.8px;background:#1f2e3b;border-radius:1.2px"></div>
<div class="t" style="left:553.4px;top:270.6px;font-size:3.4px;color:#c9d3dc;">Staff (a), Down-stem voice 1</div>
<svg style="left:621.6px;top:270.4px" width="4" height="3" viewBox="0 0 4 3"><path d="M.5 .6 L2 2.2 L3.5 .6" fill="none" stroke="#8d9aa6" stroke-width=".7"/></svg>
<svg style="left:740.6px;top:267.6px" width="7" height="7" viewBox="0 0 7 7"><path d="M3.5 .5L6.5 3.5L3.5 6.5L.5 3.5Z" fill="none" stroke="#46535f" stroke-width=".9"/><circle cx="3.5" cy="3.5" r=".9" fill="#46535f"/></svg>
<div style="left:334.4px;top:278.6px;width:61.6px;height:7.6px;background:#1d2b38;"></div>
<div style="left:337px;top:279.6px;width:4.6px;height:5.4px;background:#f0642c;border-radius:.8px"></div>
<svg style="left:389.6px;top:281.4px" width="4" height="3" viewBox="0 0 4 3"><path d="M.5 .6 L2 2.2 L3.5 .6" fill="none" stroke="#8d9aa6" stroke-width=".7"/></svg>
<div style="left:396px;top:278.6px;width:348.2px;height:7.8px;background:linear-gradient(90deg,#f8ece5 0%,#f6eeea 45%,#f1f1f0 70%,#f0f1f1 100%);"></div>
<div class="t" style="left:433.5px;top:280.4px;font-size:3.2px;color:#444;font-weight:normal">5</div>
<div style="left:432.25px;top:278.6px;width:0.5px;height:7.8px;background:#aeb4b9;"></div>
<div class="t" style="left:505.5px;top:280.4px;font-size:3.2px;color:#444;font-weight:normal">6</div>
<div style="left:504.25px;top:278.6px;width:0.5px;height:7.8px;background:#aeb4b9;"></div>
<div class="t" style="left:554px;top:280.4px;font-size:3.2px;color:#444;font-weight:normal">7</div>
<div style="left:552.75px;top:278.6px;width:0.5px;height:7.8px;background:#aeb4b9;"></div>
<div class="t" style="left:626px;top:280.4px;font-size:3.2px;color:#444;font-weight:normal">8</div>
<div style="left:624.75px;top:278.6px;width:0.5px;height:7.8px;background:#aeb4b9;"></div>
<div class="t" style="left:698px;top:280.4px;font-size:3.2px;color:#444;font-weight:normal">9</div>
<div style="left:696.75px;top:278.6px;width:0.5px;height:7.8px;background:#aeb4b9;"></div>
<div style="left:334.4px;top:286.2px;width:61.6px;height:83.4px;background:#fdfdfd;"></div>
<div style="left:334.4px;top:293px;width:36.8px;height:6px;background:#050505;border-radius:0 .8px .8px 0"></div>
<div style="left:371.2px;top:295.75px;width:24.8px;height:0.5px;background:#cfd2d4;"></div>
<div style="left:334.4px;top:305px;width:36.8px;height:6px;background:#050505;border-radius:0 .8px .8px 0"></div>
<div style="left:371.2px;top:307.75px;width:24.8px;height:0.5px;background:#cfd2d4;"></div>
<div style="left:334.4px;top:323px;width:36.8px;height:6px;background:#050505;border-radius:0 .8px .8px 0"></div>
<div style="left:371.2px;top:325.75px;width:24.8px;height:0.5px;background:#cfd2d4;"></div>
<div style="left:334.4px;top:335px;width:36.8px;height:6px;background:#050505;border-radius:0 .8px .8px 0"></div>
<div style="left:371.2px;top:337.75px;width:24.8px;height:0.5px;background:#cfd2d4;"></div>
<div style="left:334.4px;top:353px;width:36.8px;height:6.4px;background:#050505;border-radius:0 .8px .8px 0"></div>
<div style="left:371.2px;top:355.95px;width:24.8px;height:0.5px;background:#cfd2d4;"></div>
<div style="left:334.4px;top:316.75px;width:61.6px;height:0.5px;background:#cfd2d4;"></div>
<div style="left:334.4px;top:346.75px;width:61.6px;height:0.5px;background:#cfd2d4;"></div>
<div style="left:334.4px;top:364.75px;width:61.6px;height:0.5px;background:#cfd2d4;"></div>
<div class="t" style="left:388.4px;top:343.2px;font-size:3.2px;color:#333;font-weight:normal">C3</div>
<div style="left:395.4px;top:286.2px;width:0.8px;height:83.4px;background:#777d82;"></div>
<div style="left:396px;top:286.2px;width:348.2px;height:83.4px;background:#fafbfb;"></div>
<div style="left:396px;top:293px;width:348.2px;height:6px;background:#e1e8ea;"></div>
<div style="left:396px;top:305px;width:348.2px;height:6px;background:#e1e8ea;"></div>
<div style="left:396px;top:323px;width:348.2px;height:6px;background:#e1e8ea;"></div>
<div style="left:396px;top:335px;width:348.2px;height:6px;background:#e1e8ea;"></div>
<div style="left:396px;top:353px;width:348.2px;height:6.4px;background:#e1e8ea;"></div>
<div style="left:396px;top:365px;width:348.2px;height:4.6px;background:#e1e8ea;"></div>
<div style="left:396.25px;top:286.2px;width:0.5px;height:128.8px;background:#e6e9ec;"></div>
<div style="left:408.25px;top:286.2px;width:0.5px;height:128.8px;background:#e6e9ec;"></div>
<div style="left:420.25px;top:286.2px;width:0.5px;height:128.8px;background:#e6e9ec;"></div>
<div style="left:432.25px;top:286.2px;width:0.5px;height:128.8px;background:#b4babe;"></div>
<div style="left:444.25px;top:286.2px;width:0.5px;height:128.8px;background:#e6e9ec;"></div>
<div style="left:456.25px;top:286.2px;width:0.5px;height:128.8px;background:#e6e9ec;"></div>
<div style="left:468.25px;top:286.2px;width:0.5px;height:128.8px;background:#e6e9ec;"></div>
<div style="left:480.25px;top:286.2px;width:0.5px;height:128.8px;background:#e6e9ec;"></div>
<div style="left:488.25px;top:286.2px;width:0.5px;height:128.8px;background:#e6e9ec;"></div>
<div style="left:496.25px;top:286.2px;width:0.5px;height:128.8px;background:#e6e9ec;"></div>
<div style="left:504.25px;top:286.2px;width:0.5px;height:128.8px;background:#b4babe;"></div>
<div style="left:512.25px;top:286.2px;width:0.5px;height:128.8px;background:#e6e9ec;"></div>
<div style="left:520.25px;top:286.2px;width:0.5px;height:128.8px;background:#e6e9ec;"></div>
<div style="left:528.25px;top:286.2px;width:0.5px;height:128.8px;background:#e6e9ec;"></div>
<div style="left:536.25px;top:286.2px;width:0.5px;height:128.8px;background:#e6e9ec;"></div>
<div style="left:544.25px;top:286.2px;width:0.5px;height:128.8px;background:#e6e9ec;"></div>
<div style="left:552.75px;top:286.2px;width:0.5px;height:128.8px;background:#b4babe;"></div>
<div style="left:564.75px;top:286.2px;width:0.5px;height:128.8px;background:#e6e9ec;"></div>
<div style="left:576.75px;top:286.2px;width:0.5px;height:128.8px;background:#e6e9ec;"></div>
<div style="left:588.75px;top:286.2px;width:0.5px;height:128.8px;background:#e6e9ec;"></div>
<div style="left:600.75px;top:286.2px;width:0.5px;height:128.8px;background:#e6e9ec;"></div>
<div style="left:612.75px;top:286.2px;width:0.5px;height:128.8px;background:#e6e9ec;"></div>
<div style="left:624.75px;top:286.2px;width:0.5px;height:128.8px;background:#b4babe;"></div>
<div style="left:636.75px;top:286.2px;width:0.5px;height:128.8px;background:#e6e9ec;"></div>
<div style="left:648.75px;top:286.2px;width:0.5px;height:128.8px;background:#e6e9ec;"></div>
<div style="left:660.75px;top:286.2px;width:0.5px;height:128.8px;background:#e6e9ec;"></div>
<div style="left:672.75px;top:286.2px;width:0.5px;height:128.8px;background:#e6e9ec;"></div>
<div style="left:684.75px;top:286.2px;width:0.5px;height:128.8px;background:#e6e9ec;"></div>
<div style="left:696.75px;top:286.2px;width:0.5px;height:128.8px;background:#b4babe;"></div>
<div style="left:708.75px;top:286.2px;width:0.5px;height:128.8px;background:#e6e9ec;"></div>
<div style="left:720.75px;top:286.2px;width:0.5px;height:128.8px;background:#e6e9ec;"></div>
<div style="left:732.75px;top:286.2px;width:0.5px;height:128.8px;background:#e6e9ec;"></div>
<div style="left:396px;top:286.8px;width:348.2px;height:0.4px;background:rgba(200,208,212,.28);"></div>
<div style="left:396px;top:292.8px;width:348.2px;height:0.4px;background:rgba(200,208,212,.28);"></div>
<div style="left:396px;top:298.8px;width:348.2px;height:0.4px;background:rgba(200,208,212,.28);"></div>
<div style="left:396px;top:304.8px;width:348.2px;height:0.4px;background:rgba(200,208,212,.28);"></div>
<div style="left:396px;top:310.8px;width:348.2px;height:0.4px;background:rgba(200,208,212,.28);"></div>
<div style="left:396px;top:316.8px;width:348.2px;height:0.4px;background:rgba(200,208,212,.28);"></div>
<div style="left:396px;top:322.8px;width:348.2px;height:0.4px;background:rgba(200,208,212,.28);"></div>
<div style="left:396px;top:328.8px;width:348.2px;height:0.4px;background:rgba(200,208,212,.28);"></div>
<div style="left:396px;top:334.8px;width:348.2px;height:0.4px;background:rgba(200,208,212,.28);"></div>
<div style="left:396px;top:340.8px;width:348.2px;height:0.4px;background:rgba(200,208,212,.28);"></div>
<div style="left:396px;top:346.8px;width:348.2px;height:0.4px;background:rgba(200,208,212,.28);"></div>
<div style="left:396px;top:352.8px;width:348.2px;height:0.4px;background:rgba(200,208,212,.28);"></div>
<div style="left:396px;top:358.8px;width:348.2px;height:0.4px;background:rgba(200,208,212,.28);"></div>
<div style="left:396px;top:364.8px;width:348.2px;height:0.4px;background:rgba(200,208,212,.28);"></div>
<div style="left:396px;top:287.2px;width:60px;height:6px;background:linear-gradient(180deg,#f7825a,#ee5d30);border-bottom:1.2px solid #b83010"></div>
<div style="left:481px;top:287.6px;width:23px;height:0.9px;background:#c0391c;"></div>
<div class="t" style="left:491.1px;top:291.2px;font-size:2.4px;color:#a99;font-weight:normal">F3</div>
<div style="left:505px;top:287.6px;width:22.6px;height:0.9px;background:#c0391c;"></div>
<div class="t" style="left:514.9px;top:291.2px;font-size:2.4px;color:#a99;font-weight:normal">F3</div>
<div style="left:529px;top:287.6px;width:15.6px;height:0.9px;background:#c0391c;"></div>
<div class="t" style="left:535.4px;top:291.2px;font-size:2.4px;color:#a99;font-weight:normal">F3</div>
<div style="left:544.6px;top:287.2px;width:8px;height:6px;background:radial-gradient(ellipse at 50% 45%,#ff9a26 0%,#f8701f 55%,#ee4f1c 100%);border-bottom:1.2px solid #b02a10;border-radius:.5px"></div>
<div class="t" style="left:546.2px;top:289.2px;font-size:2.6px;color:#5a1600;font-weight:normal">A3</div>
<div style="left:536.4px;top:305px;width:8px;height:6px;background:radial-gradient(ellipse at 50% 45%,#ff9a26 0%,#f8701f 55%,#ee4f1c 100%);border-bottom:1.2px solid #b02a10;border-radius:.5px"></div>
<div class="t" style="left:538px;top:307px;font-size:2.6px;color:#5a1600;font-weight:normal">F#</div>
<div style="left:528.2px;top:311px;width:8px;height:6px;background:radial-gradient(ellipse at 50% 45%,#ff9a26 0%,#f8701f 55%,#ee4f1c 100%);border-bottom:1.2px solid #b02a10;border-radius:.5px"></div>
<div class="t" style="left:529.8px;top:313px;font-size:2.6px;color:#5a1600;font-weight:normal">F3</div>
<div style="left:520.2px;top:317px;width:8px;height:6px;background:radial-gradient(ellipse at 50% 45%,#ff9a26 0%,#f8701f 55%,#ee4f1c 100%);border-bottom:1.2px solid #b02a10;border-radius:.5px"></div>
<div class="t" style="left:521.8px;top:319px;font-size:2.6px;color:#5a1600;font-weight:normal">E3</div>
<div style="left:512.2px;top:335px;width:8px;height:6px;background:radial-gradient(ellipse at 50% 45%,#ff9a26 0%,#f8701f 55%,#ee4f1c 100%);border-bottom:1.2px solid #b02a10;border-radius:.5px"></div>
<div class="t" style="left:513.8px;top:337px;font-size:2.6px;color:#5a1600;font-weight:normal">C#</div>
<div style="left:504.4px;top:341px;width:8px;height:6px;background:radial-gradient(ellipse at 50% 45%,#ff9a26 0%,#f8701f 55%,#ee4f1c 100%);border-bottom:1.2px solid #b02a10;border-radius:.5px"></div>
<div class="t" style="left:506px;top:343px;font-size:2.6px;color:#5a1600;font-weight:normal">C3</div>
<div style="left:488.2px;top:353px;width:8px;height:6px;background:radial-gradient(ellipse at 50% 45%,#ff9a26 0%,#f8701f 55%,#ee4f1c 100%);border-bottom:1.2px solid #b02a10;border-radius:.5px"></div>
<div class="t" style="left:489.8px;top:355px;font-size:2.6px;color:#5a1600;font-weight:normal">A#</div>
<div style="left:496.2px;top:359px;width:8px;height:6px;background:radial-gradient(ellipse at 50% 45%,#ff9a26 0%,#f8701f 55%,#ee4f1c 100%);border-bottom:1.2px solid #b02a10;border-radius:.5px"></div>
<div class="t" style="left:497.8px;top:361px;font-size:2.6px;color:#5a1600;font-weight:normal">A2</div>
<div style="left:544.6px;top:359px;width:8px;height:6px;background:radial-gradient(ellipse at 50% 45%,#ff9a26 0%,#f8701f 55%,#ee4f1c 100%);border-bottom:1.2px solid #b02a10;border-radius:.5px"></div>
<div class="t" style="left:546.2px;top:361px;font-size:2.6px;color:#5a1600;font-weight:normal">A2</div>
<div style="left:432.6px;top:347px;width:120px;height:6px;background:#f8ddd4;border-bottom:1.1px solid #8f8480"></div>
<div class="t" style="left:434px;top:349px;font-size:2.6px;color:#555;font-weight:normal">B2</div>
<div style="left:673px;top:287.2px;width:7.4px;height:6px;background:#f4e4de;border-bottom:1.1px solid #8f8480;border-radius:.4px"></div>
<div class="t" style="left:675.1px;top:289.2px;font-size:2.6px;color:#444;font-weight:normal">A3</div>
<div style="left:680.6px;top:293.4px;width:7.4px;height:6px;background:#f4e4de;border-bottom:1.1px solid #8f8480;border-radius:.4px"></div>
<div class="t" style="left:682.7px;top:295.4px;font-size:2.6px;color:#444;font-weight:normal">G#</div>
<div style="left:688.4px;top:299.4px;width:7.6px;height:6px;background:#f4e4de;border-bottom:1.1px solid #8f8480;border-radius:.4px"></div>
<div class="t" style="left:690.6px;top:301.4px;font-size:2.6px;color:#444;font-weight:normal">G3</div>
<div style="left:697px;top:329px;width:11.4px;height:6px;background:#f4e4de;border-bottom:1.1px solid #8f8480;border-radius:.4px"></div>
<div class="t" style="left:701.1px;top:331px;font-size:2.6px;color:#444;font-weight:normal">D3</div>
<div style="left:642.4px;top:341px;width:13.6px;height:6px;background:#f4e4de;border-bottom:1.1px solid #8f8480;border-radius:.4px"></div>
<div class="t" style="left:647.6px;top:343px;font-size:2.6px;color:#444;font-weight:normal">C3</div>
<div style="left:656px;top:347px;width:8px;height:6px;background:#f4e4de;border-bottom:1.1px solid #8f8480;border-radius:.4px"></div>
<div class="t" style="left:658.4px;top:349px;font-size:2.6px;color:#444;font-weight:normal">B2</div>
<div style="left:664.4px;top:353px;width:8px;height:6px;background:#f4e4de;border-bottom:1.1px solid #8f8480;border-radius:.4px"></div>
<div class="t" style="left:666.8px;top:355px;font-size:2.6px;color:#444;font-weight:normal">A#</div>
<div style="left:672.4px;top:359px;width:8px;height:6px;background:#f4e4de;border-bottom:1.1px solid #8f8480;border-radius:.4px"></div>
<div class="t" style="left:674.8px;top:361px;font-size:2.6px;color:#444;font-weight:normal">A2</div>
<div style="left:680.4px;top:365px;width:7px;height:6px;background:#f4e4de;border-bottom:1.1px solid #8f8480;border-radius:.4px"></div>
<div style="left:334.4px;top:369.8px;width:61.6px;height:8.8px;background:#090c0f;"></div>
<div class="t" style="left:337.2px;top:373.2px;font-size:3.5px;color:#e3eaf0;">Playing Techniques</div>
<div style="left:396px;top:369.8px;width:348.2px;height:8.8px;background:#f5a385;border-top:.6px solid #d97f5e;border-bottom:.6px solid #d97f5e"></div>
<div style="left:397.4px;top:370.6px;width:8.8px;height:7.2px;background:#f7a98c;border:.5px solid #e07f5c;border-radius:.8px"></div>
<div class="t" style="left:399.4px;top:373.6px;font-size:2.9px;color:#c0532f;font-weight:normal">N...</div>
<div style="left:409px;top:370.6px;width:8.6px;height:7.2px;background:#f7a98c;border:.5px solid #e07f5c;border-radius:.8px"></div>
<div class="t" style="left:411px;top:373.6px;font-size:2.9px;color:#c0532f;font-weight:normal">N...</div>
<div style="left:420px;top:370.6px;width:155px;height:7.2px;background:#f7a98c;border:.5px solid #e07f5c;border-radius:.8px"></div>
<div class="t" style="left:422px;top:373.6px;font-size:2.9px;color:#c0532f;font-weight:normal">Natural</div>
<div style="left:575.4px;top:370.6px;width:97px;height:7.2px;background:#f7a98c;border:.5px solid #e07f5c;border-radius:.8px"></div>
<div class="t" style="left:577.4px;top:373.6px;font-size:2.9px;color:#c0532f;font-weight:normal">Natural</div>
<div style="left:672.8px;top:370.6px;width:71.2px;height:7.2px;background:#f7a98c;border:.5px solid #e07f5c;border-radius:.8px"></div>
<div class="t" style="left:674.8px;top:373.6px;font-size:2.9px;color:#c0532f;font-weight:normal">Natural</div>
<div style="left:334.4px;top:378.8px;width:61.6px;height:36.4px;background:#1b2a37;"></div>
<svg style="left:337.6px;top:381.6px" width="3" height="3" viewBox="0 0 3 3"><path d="M.4 .3L2.6 1.5L.4 2.7Z" fill="#c9d3dc"/></svg>
<div style="left:343px;top:380px;width:49.6px;height:8.6px;background:#2b3c4b;border-radius:1.2px"></div>
<div class="t" style="left:345.4px;top:383.4px;font-size:3.5px;color:#e3eaf0;">Velocity</div>
<svg style="left:386.6px;top:383px" width="4" height="3" viewBox="0 0 4 3"><path d="M.5 .6 L2 2.2 L3.5 .6" fill="none" stroke="#8d9aa6" stroke-width=".7"/></svg>
<svg style="left:364.6px;top:393.4px" width="7" height="7" viewBox="0 0 7 7"><path d="M.4 6.6H6.6M1.4 6.6V3.6M3.4 6.6V.8M5.4 6.6V2.8" stroke="#8492a0" stroke-width="1.1" fill="none"/></svg>
<div class="t" style="left:381.6px;top:396.2px;font-size:3.4px;color:#8492a0;">74</div>
<svg style="left:389.8px;top:393.4px" width="3" height="7" viewBox="0 0 3 7"><path d="M.4 2.4L1.5 .8L2.6 2.4M.4 4.6L1.5 6.2L2.6 4.6" fill="none" stroke="#8492a0" stroke-width=".6"/></svg>
<div style="left:396px;top:378.8px;width:348.2px;height:36.4px;background:#ffffff;"></div>
<div style="left:396.25px;top:378.8px;width:0.5px;height:36.4px;background:#e6e9eb;"></div>
<div style="left:408.25px;top:378.8px;width:0.5px;height:36.4px;background:#e6e9eb;"></div>
<div style="left:420.25px;top:378.8px;width:0.5px;height:36.4px;background:#e6e9eb;"></div>
<div style="left:432.25px;top:378.8px;width:0.5px;height:36.4px;background:#b9bec2;"></div>
<div style="left:444.25px;top:378.8px;width:0.5px;height:36.4px;background:#e6e9eb;"></div>
<div style="left:456.25px;top:378.8px;width:0.5px;height:36.4px;background:#e6e9eb;"></div>
<div style="left:468.25px;top:378.8px;width:0.5px;height:36.4px;background:#e6e9eb;"></div>
<div style="left:480.25px;top:378.8px;width:0.5px;height:36.4px;background:#e6e9eb;"></div>
<div style="left:488.25px;top:378.8px;width:0.5px;height:36.4px;background:#e6e9eb;"></div>
<div style="left:496.25px;top:378.8px;width:0.5px;height:36.4px;background:#e6e9eb;"></div>
<div style="left:504.25px;top:378.8px;width:0.5px;height:36.4px;background:#b9bec2;"></div>
<div style="left:512.25px;top:378.8px;width:0.5px;height:36.4px;background:#e6e9eb;"></div>
<div style="left:520.25px;top:378.8px;width:0.5px;height:36.4px;background:#e6e9eb;"></div>
<div style="left:528.25px;top:378.8px;width:0.5px;height:36.4px;background:#e6e9eb;"></div>
<div style="left:536.25px;top:378.8px;width:0.5px;height:36.4px;background:#e6e9eb;"></div>
<div style="left:544.25px;top:378.8px;width:0.5px;height:36.4px;background:#e6e9eb;"></div>
<div style="left:552.75px;top:378.8px;width:0.5px;height:36.4px;background:#b9bec2;"></div>
<div style="left:564.75px;top:378.8px;width:0.5px;height:36.4px;background:#e6e9eb;"></div>
<div style="left:576.75px;top:378.8px;width:0.5px;height:36.4px;background:#e6e9eb;"></div>
<div style="left:588.75px;top:378.8px;width:0.5px;height:36.4px;background:#e6e9eb;"></div>
<div style="left:600.75px;top:378.8px;width:0.5px;height:36.4px;background:#e6e9eb;"></div>
<div style="left:612.75px;top:378.8px;width:0.5px;height:36.4px;background:#e6e9eb;"></div>
<div style="left:624.75px;top:378.8px;width:0.5px;height:36.4px;background:#b9bec2;"></div>
<div style="left:636.75px;top:378.8px;width:0.5px;height:36.4px;background:#e6e9eb;"></div>
<div style="left:648.75px;top:378.8px;width:0.5px;height:36.4px;background:#e6e9eb;"></div>
<div style="left:660.75px;top:378.8px;width:0.5px;height:36.4px;background:#e6e9eb;"></div>
<div style="left:672.75px;top:378.8px;width:0.5px;height:36.4px;background:#e6e9eb;"></div>
<div style="left:684.75px;top:378.8px;width:0.5px;height:36.4px;background:#e6e9eb;"></div>
<div style="left:696.75px;top:378.8px;width:0.5px;height:36.4px;background:#b9bec2;"></div>
<div style="left:708.75px;top:378.8px;width:0.5px;height:36.4px;background:#e6e9eb;"></div>
<div style="left:720.75px;top:378.8px;width:0.5px;height:36.4px;background:#e6e9eb;"></div>
<div style="left:732.75px;top:378.8px;width:0.5px;height:36.4px;background:#e6e9eb;"></div>
<div style="left:409px;top:389.6px;width:3.2px;height:24.4px;background:#f7845c;"></div>
<div style="left:432.6px;top:393.6px;width:3.2px;height:20.4px;background:#f7845c;"></div>
<div style="left:481px;top:393px;width:2.8px;height:21px;background:#0d5aa6;"></div>
<div style="left:488.4px;top:393.2px;width:2.8px;height:20.8px;background:#0d5aa6;"></div>
<div style="left:496.4px;top:394px;width:2.8px;height:20px;background:#0d5aa6;"></div>
<div style="left:504.6px;top:391.2px;width:2.8px;height:22.8px;background:#0d5aa6;"></div>
<div style="left:512.6px;top:391.6px;width:2.8px;height:22.4px;background:#0d5aa6;"></div>
<div style="left:520.6px;top:390.2px;width:2.8px;height:23.8px;background:#0d5aa6;"></div>
<div style="left:528.4px;top:389.2px;width:2.8px;height:24.8px;background:#0d5aa6;"></div>
<div style="left:536.8px;top:388px;width:2.8px;height:26px;background:#0d5aa6;"></div>
<div style="left:544.6px;top:386px;width:2.8px;height:28px;background:#0d5aa6;"></div>
<div style="left:576.2px;top:391px;width:3.1px;height:23px;background:#f7845c;"></div>
<div style="left:582.2px;top:388.6px;width:3.1px;height:25.4px;background:#f7845c;"></div>
<div style="left:588.2px;top:387.2px;width:3.1px;height:26.8px;background:#f7845c;"></div>
<div style="left:594.2px;top:385.2px;width:3.1px;height:28.8px;background:#f7845c;"></div>
<div style="left:600.2px;top:384px;width:3.1px;height:30px;background:#f7845c;"></div>
<div style="left:606.2px;top:385.2px;width:3.1px;height:28.8px;background:#f7845c;"></div>
<div style="left:612.2px;top:388px;width:3.1px;height:26px;background:#f7845c;"></div>
<div style="left:618.2px;top:391px;width:3.1px;height:23px;background:#f7845c;"></div>
<div style="left:624.2px;top:395px;width:3.1px;height:19px;background:#f7845c;"></div>
<div style="left:630.2px;top:396.2px;width:3.1px;height:17.8px;background:#f7845c;"></div>
<div style="left:636.2px;top:396.6px;width:3.1px;height:17.4px;background:#f7845c;"></div>
<div style="left:642.2px;top:399.4px;width:3.1px;height:14.6px;background:#f7845c;"></div>
<div style="left:648.2px;top:400.2px;width:3.1px;height:13.8px;background:#f7845c;"></div>
<div style="left:654.6px;top:400px;width:3.5px;height:14px;background:#f7845c;"></div>
<div style="left:658.65px;top:399.5px;width:3.5px;height:14.5px;background:#f7845c;"></div>
<div style="left:662.7px;top:399px;width:3.5px;height:15px;background:#f7845c;"></div>
<div style="left:666.75px;top:398.5px;width:3.5px;height:15.5px;background:#f7845c;"></div>
<div style="left:672.4px;top:397.4px;width:3.3px;height:16.6px;background:#f7845c;"></div>
<div style="left:680.2px;top:397.4px;width:3.3px;height:16.6px;background:#f7845c;"></div>
<div style="left:688.2px;top:397.4px;width:3.3px;height:16.6px;background:#f7845c;"></div>
<div style="left:696.4px;top:397.4px;width:3.3px;height:16.6px;background:#f7845c;"></div>
<div style="left:334.4px;top:415.2px;width:61.6px;height:6px;background:#223240;"></div>
<div class="t" style="left:337.2px;top:417.4px;font-size:3px;color:#aab5bf;">&#9656; Add Editor</div>
<div style="left:384.6px;top:416px;width:9.6px;height:4.4px;background:#1a2733;border-radius:.8px"></div>
<div style="left:396px;top:415.2px;width:354.4px;height:6px;background:#0f1922;"></div>
<div style="left:398.6px;top:417.4px;width:1.6px;height:1.6px;background:#7f93a2;border-radius:50%"></div>
<div style="left:403.6px;top:417.4px;width:9.6px;height:1.6px;background:#1c8fd6;border-radius:.8px"></div>
<div style="left:414.2px;top:417.4px;width:1.6px;height:1.6px;background:#7f93a2;border-radius:50%"></div>
<div style="left:438.4px;top:417px;width:2.2px;height:2.2px;background:#93a5b2;border-radius:50%"></div>
<div style="left:582.4px;top:416.4px;width:161.6px;height:3.6px;background:#2f4658;border-radius:1.8px"></div>
<div style="left:744.2px;top:278.6px;width:6.2px;height:136.6px;background:#16222d;"></div>
<div style="left:746px;top:314px;width:2px;height:5px;background:#5d6b77;border-radius:.6px"></div>
<div style="left:747.2px;top:339px;width:1.4px;height:13.6px;background:#1c8fd6;border-radius:.7px"></div>
<div style="left:746.6px;top:365.6px;width:1.8px;height:1.8px;background:#7f93a2;border-radius:50%"></div>
<div style="left:321px;top:421.2px;width:442.8px;height:7px;background:#141f29;border-radius:0 0 2px 2px"></div>
<svg style="left:323.4px;top:421.8px" width="4" height="6" viewBox="0 0 4 6"><path d="M1.4 4.6V.6H3.6V1.6H1.4" fill="none" stroke="#e3eaf0" stroke-width=".7"/><ellipse cx="1" cy="4.8" rx="1" ry=".8" fill="#e3eaf0"/></svg>
<svg style="left:329.6px;top:423.6px" width="3" height="3" viewBox="0 0 3 3"><path d="M.4 .6L1.5 2L2.6 .6" fill="none" stroke="#7b8894" stroke-width=".6"/></svg>
<div style="left:336.4px;top:421.8px;width:24px;height:5.8px;background:#1278b2;border-radius:1px"></div>
<div class="t" style="left:338.6px;top:424.1px;font-size:3.1px;color:#d9f0ff;">Concert Pitch</div>
<div style="left:361.6px;top:421.8px;width:31.4px;height:5.8px;background:#243545;border-radius:1px"></div>
<div class="t" style="left:364.4px;top:424.1px;font-size:3.1px;color:#c9d3dc;">Transposed Pitch</div>
<div class="t" style="left:396.4px;top:424.1px;font-size:3px;color:#aab5bf;font-weight:normal">Page 1 of 1</div>
<div class="t" style="left:422.6px;top:424.1px;font-size:3px;color:#aab5bf;font-weight:normal">Bars 5-8</div>
<div class="t" style="left:448px;top:424.1px;font-size:2.9px;color:#aab5bf;font-weight:normal">00:00:08&ndash;00:00:13 (1.3&quot;)</div>
<div class="t" style="left:488.4px;top:424.1px;font-size:3px;color:#aab5bf;font-weight:normal">Multiple selection</div>
<svg style="left:530px;top:423.6px" width="5" height="3" viewBox="0 0 5 3"><path d="M.5 .5L2.5 2.3L4.5 .5" fill="none" stroke="#8d9aa6" stroke-width=".8"/></svg>
<div style="left:552.4px;top:423.4px;width:2.4px;height:2.4px;background:#13a6f2;border-radius:50%"></div>
<div class="t" style="left:557.4px;top:424.1px;font-size:3px;color:#aab5bf;font-weight:normal">Follow playhead</div>
<div style="left:585px;top:421.8px;width:9.2px;height:5.8px;background:#0f6c9e;border-radius:1px"></div>
<div style="left:587px;top:423px;width:5.2px;height:3.4px;border:.6px solid #7fd0ff;border-radius:.4px"></div>
<svg style="left:598px;top:421.8px" width="5" height="6" viewBox="0 0 5 6"><path d="M1 5.6V3L.4 2.2L1 1.8L1.6 2.6V.8H2.2V2.4V.4H2.9V2.4V.6H3.5V2.6V1.2H4.1V4.4L3.6 5.6Z" fill="#e3eaf0"/></svg>
<div style="left:605.6px;top:421.8px;width:21px;height:5.8px;background:#0f6c9e;border-radius:1px"></div>
<div class="t" style="left:608.4px;top:424.1px;font-size:3.1px;color:#d9f0ff;">Page view</div>
<div class="t" style="left:629.8px;top:424.1px;font-size:3.1px;color:#c9d3dc;">Galley view</div>
<div class="t" style="left:652.6px;top:424.1px;font-size:3.1px;color:#c9d3dc;">Fill view</div>
<div style="left:670px;top:421.8px;width:7.4px;height:5.8px;background:#0f6c9e;border-radius:1px"></div>
<div class="t" style="left:671.4px;top:424.3px;font-size:2.6px;color:#7fd0ff;">&#9646;&#9646;</div>
<svg style="left:680.6px;top:422px" width="4" height="6" viewBox="0 0 4 6"><path d="M.4 .4H3.6L2 2.6ZM.4 5.6H3.6L2 3.4Z" fill="#c9d3dc"/></svg>
<div class="t" style="left:688.4px;top:424.1px;font-size:3px;color:#aab5bf;font-weight:normal">348</div>
<svg style="left:698.6px;top:421.8px" width="3" height="6" viewBox="0 0 3 6"><path d="M1.5 .4V5.6M.4 1.4L1.5 .4L2.6 1.4M.4 4.6L1.5 5.6L2.6 4.6" fill="none" stroke="#c9d3dc" stroke-width=".6"/></svg>
<svg style="left:708px;top:422.4px" width="5" height="5" viewBox="0 0 5 5"><circle cx="2" cy="2" r="1.5" fill="none" stroke="#6b7884" stroke-width=".6"/><path d="M3.1 3.1L4.6 4.6" stroke="#6b7884" stroke-width=".6"/></svg>
<div class="t" style="left:716.8px;top:424.1px;font-size:3.1px;color:#c9d3dc;">175%</div>
<div class="t" style="left:733.6px;top:423.8px;font-size:3.4px;color:#6b7884;">&minus;</div>
<div class="t" style="left:740.4px;top:423.8px;font-size:3.4px;color:#6b7884;">+</div>
<svg style="left:748.6px;top:423px" width="4" height="4" viewBox="0 0 4 4"><path d="M.6 .4L3.4 2L.6 3.6Z" fill="#c9d3dc"/></svg>
</div></body></html>
